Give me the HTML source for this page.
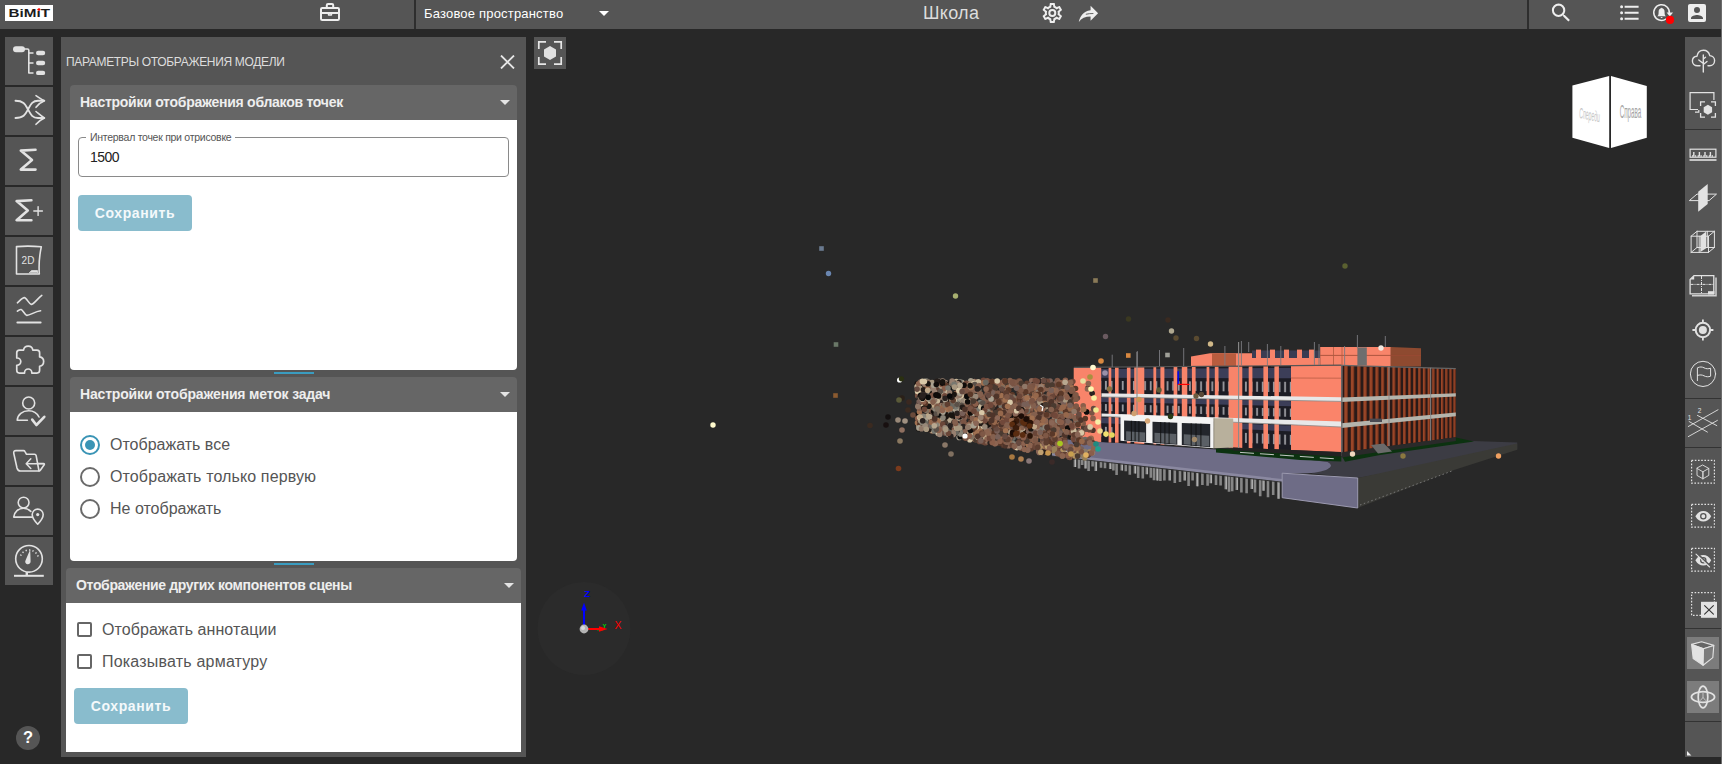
<!DOCTYPE html>
<html lang="ru">
<head>
<meta charset="utf-8">
<title>Школа</title>
<style>
*{box-sizing:border-box;margin:0;padding:0}
html,body{width:1722px;height:764px;overflow:hidden;background:#282828;font-family:"Liberation Sans",sans-serif;}
body{position:relative}
.abs{position:absolute}
#topbar{position:absolute;left:0;top:0;width:1722px;height:29px;background:#555}
.vdiv{position:absolute;top:0;width:2px;height:29px;background:#2e2e2e}
.lbtn{position:absolute;left:5px;width:48px;height:48px;background:#555}
.lbtn svg{position:absolute;left:0;top:0;width:48px;height:48px}
#panel{position:absolute;left:61px;top:37px;width:465px;height:720px;background:#555}
.shead{position:absolute;height:35px;background:#666;border-radius:4px 4px 0 0;color:#eee;font-weight:bold;font-size:14px;line-height:35px;white-space:nowrap}
.sbody{position:absolute;background:#fff;border-radius:0 0 4px 4px}
.bar{position:absolute;left:274px;width:40px;height:2px;background:#3a9cc0}
.btn{position:absolute;width:114px;height:36px;border-radius:4px;background:#89bccd;color:#f4f9fb;font-size:14px;font-weight:bold;letter-spacing:0.6px;line-height:36px;text-align:center;white-space:nowrap}
.tri{position:absolute;width:0;height:0;border-left:5px solid transparent;border-right:5px solid transparent;border-top:5px solid #e4e4e4}
.opt{position:absolute;font-size:16px;color:#555;white-space:nowrap;line-height:20px}
.radio{position:absolute;width:20px;height:20px;border-radius:50%;border:2px solid #6a6a6a;background:#fff}
.cb{position:absolute;width:15px;height:15px;border-radius:2px;border:2px solid #666;background:#fff}
#rtool{position:absolute;left:1685px;top:37px;width:36px;height:720px;background:#555}
</style>
</head>
<body>
<!-- TOP BAR -->
<div id="topbar">
  <div class="abs" style="left:5px;top:5px;width:48px;height:16px;background:#fff"></div>
  <svg class="abs" style="left:5px;top:5px" width="48" height="16" viewBox="0 0 48 16"><text x="3.6" y="12.3" font-family="Liberation Sans, sans-serif" font-size="11.8" font-weight="bold" fill="#1c1c1c" textLength="41.5" lengthAdjust="spacingAndGlyphs">BiMiT</text><circle cx="34" cy="4.5" r="1.35" fill="#f00"/></svg>
  <div class="vdiv" style="left:414px"></div>
  <div class="abs" id="space" style="left:424px;top:6px;font-size:13px;letter-spacing:0.19px;color:#fff;line-height:16px;white-space:nowrap">Базовое пространство</div>
  <div class="tri" style="left:599px;top:11px;border-top-color:#fff"></div>
  <div class="abs" id="proj" style="left:923px;top:2px;font-size:18px;letter-spacing:0.3px;color:#ddd;line-height:22px">Школа</div>
  <div class="vdiv" style="left:1527px"></div>
</div>

<!-- LEFT SIDEBAR -->
<div class="lbtn" style="top:37px"></div>
<div class="lbtn" style="top:87px"></div>
<div class="lbtn" style="top:137px"></div>
<div class="lbtn" style="top:187px"></div>
<div class="lbtn" style="top:237px"></div>
<div class="lbtn" style="top:287px"></div>
<div class="lbtn" style="top:337px"></div>
<div class="lbtn" style="top:387px"></div>
<div class="lbtn" style="top:437px"></div>
<div class="lbtn" style="top:487px"></div>
<div class="lbtn" style="top:537px"></div>
<div class="abs" style="left:16px;top:726px;width:24px;height:24px;border-radius:50%;background:#555;color:#fff;font-weight:bold;font-size:16.5px;line-height:23px;text-align:center">?</div>
<div class="abs" style="left:1721px;top:0;width:1px;height:764px;background:#6c6c6c"></div>

<!-- PANEL -->
<div id="panel"></div>
<div class="abs" id="ptitle" style="left:66px;top:54px;font-size:12px;letter-spacing:-0.33px;color:#ddd;line-height:16px;white-space:nowrap">ПАРАМЕТРЫ ОТОБРАЖЕНИЯ МОДЕЛИ</div>
<svg class="abs" style="left:500px;top:55px" width="15" height="14" viewBox="0 0 15 14"><path d="M1 0.5L14 13.5M14 0.5L1 13.5" stroke="#e6e6e6" stroke-width="1.8" fill="none"/></svg>

<div class="shead" style="left:70px;top:85px;width:447px;padding-left:10px;letter-spacing:-0.26px">Настройки отображения облаков точек</div>
<div class="tri" style="left:500px;top:100px"></div>
<div class="sbody" style="left:70px;top:120px;width:447px;height:249.5px"></div>
<div class="abs" style="left:78px;top:137px;width:431px;height:40px;border:1px solid #8a8a8a;border-radius:4px"></div>
<div class="abs" id="lbl" style="left:86px;top:129.5px;padding:0 4px;background:#fff;font-size:10.5px;letter-spacing:-0.27px;color:#555;line-height:14px;white-space:nowrap">Интервал точек при отрисовке</div>
<div class="abs" style="left:90px;top:147.5px;font-size:14px;color:#222;line-height:18px;letter-spacing:-0.5px">1500</div>
<div class="btn" style="left:78px;top:195px">Сохранить</div>
<div class="bar" style="top:372px"></div>

<div class="shead" style="left:70px;top:377px;width:447px;padding-left:10px;letter-spacing:-0.17px">Настройки отображения меток задач</div>
<div class="tri" style="left:500px;top:392px"></div>
<div class="sbody" style="left:70px;top:412px;width:447px;height:148.5px"></div>
<div class="radio" style="left:80px;top:435px;border-color:#3a94b5"></div>
<div class="abs" style="left:85px;top:440px;width:10px;height:10px;border-radius:50%;background:#3a94b5"></div>
<div class="opt" style="left:110px;top:435px">Отображать все</div>
<div class="radio" style="left:80px;top:467px"></div>
<div class="opt" style="left:110px;top:467px;letter-spacing:0.12px">Отображать только первую</div>
<div class="radio" style="left:80px;top:499px"></div>
<div class="opt" style="left:110px;top:499px">Не отображать</div>
<div class="bar" style="top:563px"></div>

<div class="shead" style="left:66px;top:568px;width:455px;padding-left:10px;letter-spacing:-0.34px">Отображение других компонентов сцены</div>
<div class="tri" style="left:504px;top:583px"></div>
<div class="sbody" style="left:66px;top:603px;width:455px;height:149px;border-radius:0"></div>
<div class="cb" style="left:76.5px;top:622px"></div>
<div class="opt" style="left:102px;top:620px;letter-spacing:0.07px">Отображать аннотации</div>
<div class="cb" style="left:76.5px;top:654px"></div>
<div class="opt" style="left:102px;top:652px;letter-spacing:0.2px">Показывать арматуру</div>
<div class="btn" style="left:74px;top:688px">Сохранить</div>

<!-- VIEWER -->
<div class="abs" style="left:534px;top:37px;width:32px;height:32px;background:#555"></div>
<!--SCENE_START--><svg id="scene" class="abs" style="left:0;top:0" width="1722" height="764" viewBox="0 0 1722 764">
<circle cx="584" cy="628.5" r="46.5" fill="#2b2b2b"/>
<path d="M584 625V609" stroke="#0000ff" stroke-width="2"/><path d="M584 602.5L586.8 610.5H581.2Z" fill="#0000ff"/>
<path d="M597 629.5H603" stroke="#00dd00" stroke-width="1.6"/>
<path d="M588 629H600" stroke="#ff0000" stroke-width="2"/><path d="M607.5 629L599 626.2V631.8Z" fill="#ff0000"/>
<circle cx="584" cy="629" r="4.4" fill="#b4b4b4"/><circle cx="583" cy="628" r="2" fill="#d8d8d8"/>
<text x="584.2" y="597" font-family="Liberation Sans, sans-serif" font-weight="bold" font-size="9.5" fill="#0000ff">Z</text>
<text x="614.6" y="629" font-family="Liberation Sans, sans-serif" font-size="10.5" fill="#ff0000">X</text>
<text x="602.5" y="628" font-family="Liberation Sans, sans-serif" font-weight="bold" font-size="6" fill="#00dd00">Y</text>
<path d="M1572.4 85.5L1609.2 76V148L1572.4 137.8Z" fill="#fff"/>
<path d="M1611 76L1646.8 85.9V137.8L1611 148Z" fill="#fff"/>
<text transform="translate(1579.3,118) scale(0.34,1) skewY(4)" font-family="Liberation Sans, sans-serif" font-size="15" fill="#c4c4c4" font-style="italic">Спереди</text>
<text transform="translate(1619.7,118) scale(0.33,1)" font-family="Liberation Sans, sans-serif" font-size="19" fill="#a4a4a4">Справа</text>
<path d="M1216 449L1341 455L1472 441L1517.2 442.6V449.6L1357.7 478L1311 473.4L1330 468L1328 462Z" fill="#3c3c44"/>
<path d="M1357.7 478L1517.2 443.6V449.8L1454 470L1357.7 508Z" fill="#3a3a36"/>
<path d="M1360 505L1452 471" stroke="#777" stroke-width="1" stroke-dasharray="1.5 2.5"/>
<path d="M1075.0 456.0V467.0M1079.0 456.5V468.6M1082.2 456.8V465.0M1085.4 457.2V468.5M1088.6 457.6V470.9M1092.6 458.1V466.5M1095.8 458.4V470.9M1101.0 459.0V467.7M1105.0 459.5V468.2M1110.2 460.1V469.0M1113.4 460.5V470.4M1116.6 460.9V474.9M1121.8 461.5V470.6M1125.8 461.9V471.2M1129.8 462.4V474.8M1135.0 463.0V473.5M1138.2 463.4V477.9M1142.8 463.9V478.6M1146.8 464.4V474.2M1150.8 464.9V477.7M1154.0 465.2V480.2M1157.2 465.6V480.6M1160.4 466.0V481.1M1164.4 466.5V480.6M1169.6 467.1V480.4M1174.8 467.7V483.1M1180.0 468.3V481.9M1184.6 468.8V480.5M1188.6 469.3V486.1M1192.6 469.8V480.6M1197.2 470.3V486.3M1202.4 470.9V485.0M1207.6 471.5V485.8M1210.8 471.9V483.2M1216.0 472.5V484.9M1220.6 473.0V485.6M1225.8 473.7V489.3M1229.0 474.0V491.8M1232.2 474.4V491.2M1236.8 474.9V489.9M1241.4 475.5V492.5M1246.6 476.1V493.3M1251.8 476.7V489.0M1255.0 477.1V492.5M1260.2 477.7V496.2M1263.4 478.1V490.7M1268.0 478.6V497.3M1273.2 479.2V495.0M1278.4 479.8V498.8" stroke="#868686" stroke-width="2.6" fill="none"/>
<path d="M1075.0 456.0V467.0M1085.4 457.2V468.5M1095.8 458.4V470.9M1110.2 460.1V469.0M1121.8 461.5V470.6M1135.0 463.0V473.5M1146.8 464.4V474.2M1157.2 465.6V480.6M1169.6 467.1V480.4M1184.6 468.8V480.5M1197.2 470.3V486.3M1210.8 471.9V483.2M1225.8 473.7V489.3M1236.8 474.9V489.9M1251.8 476.7V489.0M1263.4 478.1V490.7M1278.4 479.8V498.8" stroke="#c4c4c4" stroke-width="0.8" fill="none" transform="translate(0.5,0)"/>
<path d="M1052 438.4L1216 449.5L1283 456.5L1327.6 462Q1335 466 1326 470Q1316 473.6 1300 473.6L1282.2 473.6V481.6L1052 455.6Z" fill="#6e6c86"/>
<path d="M1052 453.1L1282.2 479V481.8L1052 455.7Z" fill="#8a88a0"/>
<path d="M1052 456.1L1282.2 482.2" stroke="#333" stroke-width="1"/>
<path d="M1282.2 473.2L1357.7 478V508L1282.2 497.7Z" fill="#6e6c86" stroke="#9c9ab0" stroke-width="1"/>
<path d="M1216 448.5L1341.3 455V461.5L1300 460L1216 452.5Z" fill="#0c3210"/>
<path d="M1341.3 455L1456 437.6L1474 441.6L1380 455L1345 461.8Z" fill="#0c3210"/>
<path d="M1240 452.4L1338 459" stroke="#d8d8d8" stroke-width="0.9" stroke-dasharray="14 6"/>
<path d="M1191 356.4L1210 353.2H1320V366H1191Z" fill="#f8846a"/>
<path d="M1252 350.4H1320V358H1252Z" fill="#3a3c52"/>
<rect x="1256.0" y="349.6" width="5" height="9" fill="#f8846a"/>
<rect x="1270.0" y="349.6" width="5" height="9" fill="#f8846a"/>
<rect x="1284.0" y="349.6" width="5" height="9" fill="#f8846a"/>
<rect x="1297.0" y="349.6" width="5" height="9" fill="#f8846a"/>
<rect x="1309.0" y="349.6" width="5" height="9" fill="#f8846a"/>
<path d="M1212 353.4H1236V366H1212Z" fill="#b85c3e"/>
<path d="M1320.2 346.9H1390.8V366H1320.2Z" fill="#f8846a"/>
<path d="M1390.8 346.9L1421 348.3V366.4H1390.8Z" fill="#8e4a30"/>
<path d="M1320.2 355.4H1421" stroke="#9a4a34" stroke-width="0.8"/>
<rect x="1357.4" y="347.4" width="9.4" height="18" fill="#6e6e6e"/>
<path d="M1333.5 347V365M1342 347V365" stroke="#b05a40" stroke-width="0.8"/>
<path d="M1074.0 367.8L1341.3 365.6L1341.3 452.0L1074.0 441.0Z" fill="#1c1c24"/>
<path d="M1074.0 369.3L1341.3 367.5L1341.3 378.3L1074.0 377.8Z" fill="#3c3e58"/>
<path d="M1074.0 397.0L1341.3 402.2L1341.3 407.5L1074.0 401.2Z" fill="#3c3e58"/>
<path d="M1074.0 416.2L1341.3 428.0L1341.3 433.5L1074.0 421.9Z" fill="#3c3e58"/>
<path d="M1074.0 380.8L1341.3 382.1L1341.3 392.9L1074.0 389.3Z" fill="url(#wf)"/>
<path d="M1074.0 403.2L1341.3 409.9L1341.3 418.4L1074.0 409.9Z" fill="url(#wf)"/>
<path d="M1074.0 425.5L1341.3 437.0L1341.3 447.0L1074.0 435.8Z" fill="url(#wf)"/>
<path d="M1073.7 367.8L1101.2 367.6L1101.2 442.1L1073.7 441.0Z" fill="#f8846a"/>
<path d="M1108.6 367.5L1111.3 367.5L1111.3 442.5L1108.6 442.4Z" fill="#f8846a"/>
<path d="M1115.0 367.5L1118.6 367.4L1118.6 442.8L1115.0 442.7Z" fill="#f8846a"/>
<path d="M1126.9 367.4L1130.5 367.3L1130.5 443.3L1126.9 443.2Z" fill="#f8846a"/>
<path d="M1134.2 367.3L1144.3 367.2L1144.3 443.9L1134.2 443.5Z" fill="#f8846a"/>
<path d="M1153.4 367.1L1156.2 367.1L1156.2 444.4L1153.4 444.3Z" fill="#f8846a"/>
<path d="M1160.4 367.1L1164.4 367.1L1164.4 444.7L1160.4 444.6Z" fill="#f8846a"/>
<path d="M1173.6 367.0L1177.3 367.0L1177.3 445.2L1173.6 445.1Z" fill="#f8846a"/>
<path d="M1181.8 366.9L1187.3 366.9L1187.3 445.7L1181.8 445.4Z" fill="#f8846a"/>
<path d="M1191.9 366.8L1195.6 366.8L1195.6 446.0L1191.9 445.9Z" fill="#f8846a"/>
<path d="M1206.6 366.7L1209.3 366.7L1209.3 446.6L1206.6 446.5Z" fill="#f8846a"/>
<path d="M1214.8 366.6L1218.5 366.6L1218.5 446.9L1214.8 446.8Z" fill="#f8846a"/>
<path d="M1228.6 366.5L1242.3 366.4L1242.3 447.9L1228.6 447.4Z" fill="#f8846a"/>
<path d="M1248.7 366.4L1252.4 366.3L1252.4 448.3L1248.7 448.2Z" fill="#f8846a"/>
<path d="M1263.4 366.2L1268.0 366.2L1268.0 449.0L1263.4 448.8Z" fill="#f8846a"/>
<path d="M1274.4 366.2L1278.9 366.1L1278.9 449.4L1274.4 449.2Z" fill="#f8846a"/>
<path d="M1291.0 366.0L1341.3 365.6L1341.3 452.0L1291.0 449.9Z" fill="#fa846a"/>
<path d="M1291 378.0L1341.3 378.2" stroke="#b85c44" stroke-width="0.8"/>
<path d="M1101.5 393.3L1341.3 397.3L1341.3 401.4L1101.5 396.9Z" fill="#e8e8e8"/>
<path d="M1101.5 413.4L1341.3 421.6L1341.3 427.0L1101.5 416.4Z" fill="#e8e8e8"/>
<path d="M1101.5 396.9L1341.3 401.4" stroke="#888" stroke-width="0.8"/>
<path d="M1101.5 416.4L1341.3 427.0" stroke="#888" stroke-width="0.8"/>
<path d="M1074.0 367.4L1341.3 365.2" stroke="#555" stroke-width="1.2"/>
<path d="M1233 447.4L1341.3 452.2V456.6L1233 450.6Z" fill="#222"/>
<path d="M1137 352V440M1238.6 342V448" stroke="#8a8a8a" stroke-width="1.1"/>
<path d="M1120.5 414.6L1213.9 418.3V448.2L1120.5 440.8Z" fill="#f4f4f4"/>
<path d="M1124.1 420.5L1146.1 421.4L1146.1 442.3L1124.1 440.6Z" fill="#23262c"/>
<path d="M1126.1 431.2L1145.1 432.4L1145.1 441.6L1126.1 439.9Z" fill="#8a9098" opacity="0.55"/>
<path d="M1131.4 420.8V441.2" stroke="#111" stroke-width="0.9"/>
<path d="M1135.1 421.0V441.4" stroke="#111" stroke-width="0.9"/>
<path d="M1138.9 421.1V441.7" stroke="#111" stroke-width="0.9"/>
<path d="M1152.5 421.7L1177.3 422.7L1177.3 444.7L1152.5 442.8Z" fill="#23262c"/>
<path d="M1154.5 432.7L1176.3 434.0L1176.3 444.0L1154.5 442.1Z" fill="#8a9098" opacity="0.55"/>
<path d="M1160.7 422.0V443.4" stroke="#111" stroke-width="0.9"/>
<path d="M1164.9 422.2V443.8" stroke="#111" stroke-width="0.9"/>
<path d="M1169.1 422.4V444.1" stroke="#111" stroke-width="0.9"/>
<path d="M1181.8 422.9L1210.2 424.1L1210.2 447.3L1181.8 445.1Z" fill="#23262c"/>
<path d="M1183.8 434.3L1209.2 435.8L1209.2 446.5L1183.8 444.3Z" fill="#8a9098" opacity="0.55"/>
<path d="M1191.2 423.3V445.8" stroke="#111" stroke-width="0.9"/>
<path d="M1196.0 423.5V446.2" stroke="#111" stroke-width="0.9"/>
<path d="M1200.9 423.7V446.6" stroke="#111" stroke-width="0.9"/>
<path d="M1213.9 418.2L1233.2 418.6V447.6L1213.9 448.2Z" fill="#b8b09c"/>
<path d="M1213.9 418.2V448.2" stroke="#8a8474" stroke-width="0.8"/>
<path d="M1341.3 365.6L1455.8 368.8L1455.8 437.2L1341.3 452.5Z" fill="#2a1a18"/>
<path d="M1344.3 365.7L1347.7 365.8L1347.7 451.6L1344.3 452.1Z" fill="#9a4628"/>
<path d="M1347.4 365.8V451.6" stroke="#6a2c18" stroke-width="0.7"/>
<path d="M1350.8 365.9L1354.1 366.0L1354.1 450.8L1350.8 451.2Z" fill="#9a4628"/>
<path d="M1353.8 366.0V450.8" stroke="#6a2c18" stroke-width="0.7"/>
<path d="M1357.2 366.0L1360.4 366.1L1360.4 449.9L1357.2 450.4Z" fill="#9a4628"/>
<path d="M1360.1 366.1V449.9" stroke="#6a2c18" stroke-width="0.7"/>
<path d="M1363.4 366.2L1366.6 366.3L1366.6 449.1L1363.4 449.5Z" fill="#9a4628"/>
<path d="M1366.3 366.3V449.1" stroke="#6a2c18" stroke-width="0.7"/>
<path d="M1369.5 366.4L1372.6 366.5L1372.6 448.3L1369.5 448.7Z" fill="#9a4628"/>
<path d="M1372.3 366.5V448.3" stroke="#6a2c18" stroke-width="0.7"/>
<path d="M1375.4 366.6L1378.4 366.6L1378.4 447.5L1375.4 447.9Z" fill="#9a4628"/>
<path d="M1378.1 366.6V447.5" stroke="#6a2c18" stroke-width="0.7"/>
<path d="M1381.2 366.7L1384.1 366.8L1384.1 446.8L1381.2 447.2Z" fill="#9a4628"/>
<path d="M1383.8 366.8V446.8" stroke="#6a2c18" stroke-width="0.7"/>
<path d="M1386.9 366.9L1389.7 367.0L1389.7 446.0L1386.9 446.4Z" fill="#9a4628"/>
<path d="M1389.4 367.0V446.0" stroke="#6a2c18" stroke-width="0.7"/>
<path d="M1392.4 367.0L1395.2 367.1L1395.2 445.3L1392.4 445.7Z" fill="#9a4628"/>
<path d="M1394.9 367.1V445.3" stroke="#6a2c18" stroke-width="0.7"/>
<path d="M1397.8 367.2L1400.5 367.3L1400.5 444.6L1397.8 444.9Z" fill="#9a4628"/>
<path d="M1400.2 367.3V444.6" stroke="#6a2c18" stroke-width="0.7"/>
<path d="M1403.1 367.3L1405.7 367.4L1405.7 443.9L1403.1 444.2Z" fill="#9a4628"/>
<path d="M1405.4 367.4V443.9" stroke="#6a2c18" stroke-width="0.7"/>
<path d="M1408.2 367.5L1410.8 367.5L1410.8 443.2L1408.2 443.6Z" fill="#9a4628"/>
<path d="M1410.5 367.5V443.2" stroke="#6a2c18" stroke-width="0.7"/>
<path d="M1413.2 367.6L1415.8 367.7L1415.8 442.5L1413.2 442.9Z" fill="#9a4628"/>
<path d="M1415.5 367.7V442.5" stroke="#6a2c18" stroke-width="0.7"/>
<path d="M1418.2 367.7L1420.6 367.8L1420.6 441.9L1418.2 442.2Z" fill="#9a4628"/>
<path d="M1420.3 367.8V441.9" stroke="#6a2c18" stroke-width="0.7"/>
<path d="M1422.9 367.9L1425.3 367.9L1425.3 441.3L1422.9 441.6Z" fill="#9a4628"/>
<path d="M1425.0 367.9V441.3" stroke="#6a2c18" stroke-width="0.7"/>
<path d="M1427.6 368.0L1430.0 368.1L1430.0 440.7L1427.6 441.0Z" fill="#9a4628"/>
<path d="M1429.7 368.1V440.7" stroke="#6a2c18" stroke-width="0.7"/>
<path d="M1432.2 368.1L1434.5 368.2L1434.5 440.1L1432.2 440.4Z" fill="#9a4628"/>
<path d="M1434.2 368.2V440.1" stroke="#6a2c18" stroke-width="0.7"/>
<path d="M1436.6 368.3L1438.9 368.3L1438.9 439.5L1436.6 439.8Z" fill="#9a4628"/>
<path d="M1438.6 368.3V439.5" stroke="#6a2c18" stroke-width="0.7"/>
<path d="M1441.0 368.4L1443.2 368.4L1443.2 438.9L1441.0 439.2Z" fill="#9a4628"/>
<path d="M1442.9 368.4V438.9" stroke="#6a2c18" stroke-width="0.7"/>
<path d="M1445.2 368.5L1447.4 368.6L1447.4 438.3L1445.2 438.6Z" fill="#9a4628"/>
<path d="M1447.1 368.6V438.3" stroke="#6a2c18" stroke-width="0.7"/>
<path d="M1449.4 368.6L1451.5 368.7L1451.5 437.8L1449.4 438.1Z" fill="#9a4628"/>
<path d="M1451.2 368.7V437.8" stroke="#6a2c18" stroke-width="0.7"/>
<path d="M1453.4 368.7L1455.5 368.8L1455.5 437.2L1453.4 437.5Z" fill="#9a4628"/>
<path d="M1455.2 368.8V437.2" stroke="#6a2c18" stroke-width="0.7"/>
<path d="M1341.3 397.6L1455.8 393.2L1455.8 396.6L1341.3 402.0Z" fill="#b4b4ac"/>
<path d="M1341.3 423.2L1455.8 412.4L1455.8 416.2L1341.3 428.0Z" fill="#b4b4ac"/>
<path d="M1341.3 365.4L1455.8 368.6" stroke="#666" stroke-width="1.2"/>
<path d="M1341.9 365.6V456" stroke="#777" stroke-width="1.3"/>
<path d="M1389 366.6V447M1430.7 367.8V441" stroke="#8a8a8a" stroke-width="1"/>
<path d="M1341.3 452.5L1455.8 437.2V441L1341.3 457.4Z" fill="#2a2a2a"/>
<path d="M1371 445L1384 443.6L1392 451.6L1378 453.6Z" fill="#6a6a6a"/>
<rect x="1370" y="418.6" width="12" height="3.4" fill="#4a4a52"/>
<path d="M1112.2 354.7V367.0M1137.3 351.0V367.0M1159.5 350.0V366.0M1183.7 348.0V366.0M1224.9 346.0V365.0M1241.4 341.0V365.0M1248.7 342.0V352.0M1267.4 344.0V365.0M1280.8 346.0V365.0M1314.4 342.0V365.0M1319.0 344.0V365.0M1357.4 335.0V348.0M1385.3 336.0V347.0M1344.6 346.0V365.0" stroke="#7a7a80" stroke-width="0.9"/>
<path d="M1178.2 371.2V384.4" stroke="#0000ff" stroke-width="1.4"/><path d="M1178.2 384.4H1189.4" stroke="#ff0000" stroke-width="1.2"/>
<rect x="1011" y="415" width="21" height="23" fill="#2a1408"/>
<g>
<circle cx="1018.4" cy="436.1" r="2.8" fill="#786058"/>
<circle cx="926.7" cy="426.9" r="2.8" fill="#241c18"/>
<circle cx="929.9" cy="429.2" r="2.8" fill="#664a40"/>
<circle cx="1060.7" cy="428.2" r="2.8" fill="#96684c"/>
<circle cx="945.4" cy="403.9" r="2.8" fill="#0a0a0a"/>
<circle cx="931.1" cy="396.7" r="2.8" fill="#b8a890"/>
<circle cx="966.9" cy="399.9" r="2.8" fill="#7e5846"/>
<circle cx="938.2" cy="433.5" r="2.8" fill="#b8a890"/>
<circle cx="1054.2" cy="430.0" r="2.8" fill="#2a2220"/>
<circle cx="999.2" cy="412.1" r="2.8" fill="#4a3a30"/>
<circle cx="974.4" cy="430.8" r="2.8" fill="#6a4638"/>
<circle cx="988.2" cy="416.2" r="2.8" fill="#96684c"/>
<circle cx="974.3" cy="417.4" r="2.8" fill="#664a40"/>
<circle cx="931.3" cy="385.7" r="2.8" fill="#807060"/>
<circle cx="1008.7" cy="424.4" r="2.8" fill="#8c6450"/>
<circle cx="1062.1" cy="416.4" r="2.8" fill="#7e5846"/>
<circle cx="958.8" cy="388.4" r="2.8" fill="#7a5444"/>
<circle cx="1051.3" cy="391.4" r="2.8" fill="#4a3a30"/>
<circle cx="930.0" cy="390.3" r="2.8" fill="#4e342a"/>
<circle cx="970.8" cy="401.5" r="2.8" fill="#a07050"/>
<circle cx="996.9" cy="437.2" r="2.8" fill="#8c6450"/>
<circle cx="1055.9" cy="422.9" r="2.8" fill="#6a4638"/>
<circle cx="989.6" cy="419.7" r="2.8" fill="#8c6450"/>
<circle cx="953.2" cy="415.7" r="2.8" fill="#7a5444"/>
<circle cx="965.6" cy="395.8" r="2.8" fill="#988878"/>
<circle cx="1048.5" cy="403.9" r="2.8" fill="#4a3a30"/>
<circle cx="1056.2" cy="433.6" r="2.8" fill="#8a6656"/>
<circle cx="971.3" cy="395.4" r="2.8" fill="#5e3e30"/>
<circle cx="1069.7" cy="429.9" r="2.8" fill="#8a5e4a"/>
<circle cx="974.2" cy="411.2" r="2.8" fill="#786058"/>
<circle cx="998.5" cy="443.0" r="2.8" fill="#5e3e30"/>
<circle cx="996.5" cy="435.1" r="2.8" fill="#84604e"/>
<circle cx="1021.1" cy="447.9" r="2.8" fill="#8a5e4a"/>
<circle cx="1063.5" cy="449.6" r="2.8" fill="#84604e"/>
<circle cx="1049.7" cy="386.7" r="2.8" fill="#786058"/>
<circle cx="998.7" cy="393.1" r="2.8" fill="#907868"/>
<circle cx="1023.0" cy="428.3" r="2.8" fill="#b8a890"/>
<circle cx="978.6" cy="390.2" r="2.8" fill="#a89880"/>
<circle cx="933.2" cy="426.4" r="2.8" fill="#d8c8a8"/>
<circle cx="1033.8" cy="381.4" r="2.8" fill="#786058"/>
<circle cx="944.7" cy="400.1" r="2.8" fill="#181410"/>
<circle cx="1044.7" cy="447.7" r="2.8" fill="#8c6450"/>
<circle cx="1061.1" cy="426.8" r="2.8" fill="#84604e"/>
<circle cx="1046.6" cy="397.0" r="2.8" fill="#5a5048"/>
<circle cx="987.9" cy="437.3" r="2.8" fill="#241c18"/>
<circle cx="1061.2" cy="391.4" r="2.8" fill="#a07050"/>
<circle cx="954.7" cy="432.3" r="2.8" fill="#786058"/>
<circle cx="1038.7" cy="451.1" r="2.8" fill="#84604e"/>
<circle cx="1006.9" cy="408.7" r="2.8" fill="#5a5048"/>
<circle cx="1026.2" cy="425.2" r="2.8" fill="#b8a890"/>
<circle cx="924.3" cy="423.0" r="2.8" fill="#807060"/>
<circle cx="1007.8" cy="420.0" r="2.8" fill="#8c6450"/>
<circle cx="1067.8" cy="431.9" r="2.8" fill="#786058"/>
<circle cx="1086.1" cy="429.2" r="2.8" fill="#786058"/>
<circle cx="1031.7" cy="380.8" r="2.8" fill="#8a6656"/>
<circle cx="924.6" cy="390.2" r="2.8" fill="#786058"/>
<circle cx="964.9" cy="412.1" r="2.8" fill="#d8c8a8"/>
<circle cx="982.4" cy="397.0" r="2.8" fill="#84604e"/>
<circle cx="1065.1" cy="381.6" r="2.8" fill="#96684c"/>
<circle cx="1071.1" cy="416.0" r="2.8" fill="#8a5e4a"/>
<circle cx="962.1" cy="435.7" r="2.8" fill="#7a5444"/>
<circle cx="1002.2" cy="391.3" r="2.8" fill="#84604e"/>
<circle cx="1037.2" cy="414.9" r="2.8" fill="#7e5846"/>
<circle cx="1071.1" cy="446.9" r="2.8" fill="#7a5444"/>
<circle cx="1039.2" cy="452.4" r="2.8" fill="#8a6656"/>
<circle cx="940.3" cy="380.8" r="2.8" fill="#787870"/>
<circle cx="982.4" cy="433.0" r="2.8" fill="#4e342a"/>
<circle cx="952.8" cy="428.8" r="2.8" fill="#d8c8a8"/>
<circle cx="976.9" cy="384.1" r="2.8" fill="#807060"/>
<circle cx="1068.8" cy="407.2" r="2.8" fill="#70483a"/>
<circle cx="1037.9" cy="383.3" r="2.8" fill="#4e342a"/>
<circle cx="1055.7" cy="404.5" r="2.8" fill="#8a5e4a"/>
<circle cx="951.9" cy="419.5" r="2.8" fill="#988070"/>
<circle cx="1078.0" cy="430.3" r="2.8" fill="#4a3a30"/>
<circle cx="1064.7" cy="435.0" r="2.8" fill="#5e3e30"/>
<circle cx="1054.6" cy="418.6" r="2.8" fill="#907868"/>
<circle cx="1002.7" cy="382.4" r="2.8" fill="#8a5e4a"/>
<circle cx="931.9" cy="418.3" r="2.8" fill="#7e5846"/>
<circle cx="1069.9" cy="430.6" r="2.8" fill="#6a4638"/>
<circle cx="1066.8" cy="382.5" r="2.8" fill="#4e342a"/>
<circle cx="1003.5" cy="423.7" r="2.8" fill="#8c6450"/>
<circle cx="955.0" cy="428.2" r="2.8" fill="#8a6656"/>
<circle cx="990.7" cy="382.4" r="2.8" fill="#5a3828"/>
<circle cx="995.3" cy="402.2" r="2.8" fill="#664a40"/>
<circle cx="978.8" cy="407.9" r="2.8" fill="#c8b89a"/>
<circle cx="985.2" cy="442.8" r="2.8" fill="#6a4638"/>
<circle cx="1083.2" cy="409.7" r="2.8" fill="#96684c"/>
<circle cx="1076.6" cy="409.7" r="2.8" fill="#8a5e4a"/>
<circle cx="942.0" cy="391.5" r="2.8" fill="#d8c8a8"/>
<circle cx="1010.5" cy="437.0" r="2.8" fill="#b8a890"/>
<circle cx="998.6" cy="438.1" r="2.8" fill="#5e3e30"/>
<circle cx="970.7" cy="390.0" r="2.8" fill="#a89880"/>
<circle cx="1072.6" cy="389.1" r="2.8" fill="#786058"/>
<circle cx="1039.9" cy="403.7" r="2.8" fill="#8c6450"/>
<circle cx="1081.3" cy="433.9" r="2.8" fill="#8c6450"/>
<circle cx="1004.4" cy="427.9" r="2.8" fill="#7e5846"/>
<circle cx="919.1" cy="425.5" r="2.8" fill="#c0a888"/>
<circle cx="940.5" cy="427.1" r="2.8" fill="#84604e"/>
<circle cx="1027.1" cy="425.8" r="2.8" fill="#8c6450"/>
<circle cx="1060.3" cy="428.4" r="2.8" fill="#70483a"/>
<circle cx="1092.9" cy="430.3" r="2.8" fill="#4e342a"/>
<circle cx="976.8" cy="408.3" r="2.8" fill="#786058"/>
<circle cx="1037.5" cy="415.8" r="2.8" fill="#4a3a30"/>
<circle cx="1057.1" cy="435.2" r="2.8" fill="#8a6656"/>
<circle cx="1068.8" cy="397.6" r="2.8" fill="#6a4638"/>
<circle cx="1016.5" cy="398.9" r="2.8" fill="#84604e"/>
<circle cx="969.2" cy="392.9" r="2.8" fill="#84604e"/>
<circle cx="964.6" cy="403.2" r="2.8" fill="#70483a"/>
<circle cx="1001.4" cy="431.2" r="2.8" fill="#7e5846"/>
<circle cx="965.2" cy="436.7" r="2.8" fill="#7e5846"/>
<circle cx="1083.7" cy="427.6" r="2.8" fill="#4a3a30"/>
<circle cx="1060.7" cy="424.6" r="2.8" fill="#8a5e4a"/>
<circle cx="1033.8" cy="384.3" r="2.8" fill="#181410"/>
<circle cx="1070.9" cy="436.8" r="2.8" fill="#181410"/>
<circle cx="943.7" cy="391.6" r="2.8" fill="#664a40"/>
<circle cx="1012.3" cy="395.9" r="2.8" fill="#70483a"/>
<circle cx="918.9" cy="415.1" r="2.8" fill="#907868"/>
<circle cx="978.8" cy="434.3" r="2.8" fill="#a89880"/>
<circle cx="961.0" cy="385.2" r="2.8" fill="#a89880"/>
<circle cx="1080.5" cy="431.6" r="2.8" fill="#988878"/>
<circle cx="985.9" cy="402.7" r="2.8" fill="#4a3a30"/>
<circle cx="934.0" cy="414.3" r="2.8" fill="#7e5846"/>
<circle cx="970.8" cy="417.6" r="2.8" fill="#0a0a0a"/>
<circle cx="1092.4" cy="452.7" r="2.8" fill="#988878"/>
<circle cx="925.3" cy="389.7" r="2.8" fill="#100c0a"/>
<circle cx="1056.9" cy="415.9" r="2.8" fill="#4a3a30"/>
<circle cx="925.6" cy="419.7" r="2.8" fill="#8a6656"/>
<circle cx="1027.0" cy="383.3" r="2.8" fill="#5e3e30"/>
<circle cx="926.1" cy="427.8" r="2.8" fill="#0a0a0a"/>
<circle cx="1059.9" cy="446.4" r="2.8" fill="#84604e"/>
<circle cx="922.3" cy="408.2" r="2.8" fill="#6a6860"/>
<circle cx="1091.3" cy="439.9" r="2.8" fill="#84604e"/>
<circle cx="939.5" cy="403.4" r="2.8" fill="#8a6656"/>
<circle cx="932.9" cy="394.9" r="2.8" fill="#988878"/>
<circle cx="943.4" cy="412.7" r="2.8" fill="#4e342a"/>
<circle cx="1069.0" cy="406.5" r="2.8" fill="#664a40"/>
<circle cx="920.4" cy="427.5" r="2.8" fill="#988878"/>
<circle cx="1067.7" cy="413.1" r="2.8" fill="#8a5e4a"/>
<circle cx="920.2" cy="418.8" r="2.8" fill="#0a0a0a"/>
<circle cx="1033.2" cy="419.1" r="2.8" fill="#5a3828"/>
<circle cx="1033.8" cy="402.2" r="2.8" fill="#5a3828"/>
<circle cx="968.5" cy="401.0" r="2.8" fill="#8a6656"/>
<circle cx="964.4" cy="430.0" r="2.8" fill="#8a8478"/>
<circle cx="1015.2" cy="412.0" r="2.8" fill="#70483a"/>
<circle cx="1049.4" cy="424.2" r="2.8" fill="#5e3e30"/>
<circle cx="1064.6" cy="395.8" r="2.8" fill="#664a40"/>
<circle cx="1023.7" cy="443.0" r="2.8" fill="#5e3e30"/>
<circle cx="977.2" cy="438.0" r="2.8" fill="#786058"/>
<circle cx="1075.7" cy="423.9" r="2.8" fill="#70483a"/>
<circle cx="933.6" cy="405.0" r="2.8" fill="#a8a090"/>
<circle cx="994.2" cy="439.9" r="2.8" fill="#4e342a"/>
<circle cx="1030.2" cy="396.5" r="2.8" fill="#5e3e30"/>
<circle cx="1027.6" cy="450.1" r="2.8" fill="#8a5e4a"/>
<circle cx="1000.4" cy="410.5" r="2.8" fill="#6a4638"/>
<circle cx="954.6" cy="399.0" r="2.8" fill="#664a40"/>
<circle cx="1002.6" cy="385.9" r="2.8" fill="#807060"/>
<circle cx="932.5" cy="389.3" r="2.8" fill="#c8b89a"/>
<circle cx="1063.7" cy="448.3" r="2.8" fill="#7e5846"/>
<circle cx="1002.1" cy="415.0" r="2.8" fill="#7e5846"/>
<circle cx="1026.9" cy="409.7" r="2.8" fill="#4a3a30"/>
<circle cx="1067.2" cy="424.0" r="2.8" fill="#7e5846"/>
<circle cx="938.6" cy="407.4" r="2.8" fill="#a89880"/>
<circle cx="942.3" cy="401.8" r="2.8" fill="#241c18"/>
<circle cx="1038.0" cy="444.5" r="2.8" fill="#84604e"/>
<circle cx="1034.4" cy="386.5" r="2.8" fill="#6a4638"/>
<circle cx="924.3" cy="412.2" r="2.8" fill="#8a8478"/>
<circle cx="925.5" cy="421.2" r="2.8" fill="#7e5846"/>
<circle cx="1007.7" cy="387.6" r="2.8" fill="#8c6450"/>
<circle cx="947.9" cy="384.5" r="2.8" fill="#c8b89a"/>
<circle cx="1032.7" cy="398.0" r="2.8" fill="#5e3e30"/>
<circle cx="986.3" cy="434.2" r="2.8" fill="#787870"/>
<circle cx="1069.4" cy="411.5" r="2.8" fill="#4a3a30"/>
<circle cx="965.0" cy="437.7" r="2.8" fill="#6a4638"/>
<circle cx="1059.5" cy="391.8" r="2.8" fill="#84604e"/>
<circle cx="921.0" cy="403.9" r="2.8" fill="#0a0a0a"/>
<circle cx="1001.4" cy="405.0" r="2.8" fill="#8a6656"/>
<circle cx="955.5" cy="424.0" r="2.8" fill="#5a5048"/>
<circle cx="972.1" cy="392.6" r="2.8" fill="#84604e"/>
<circle cx="954.5" cy="427.2" r="2.8" fill="#807060"/>
<circle cx="990.4" cy="410.3" r="2.8" fill="#664a40"/>
<circle cx="983.7" cy="416.3" r="2.8" fill="#a8a090"/>
<circle cx="1037.3" cy="425.1" r="2.8" fill="#7a5444"/>
<circle cx="918.2" cy="422.8" r="2.8" fill="#d8c8a8"/>
<circle cx="1013.0" cy="400.2" r="2.8" fill="#664a40"/>
<circle cx="957.3" cy="430.3" r="2.8" fill="#a8a090"/>
<circle cx="945.6" cy="405.0" r="2.8" fill="#988878"/>
<circle cx="933.9" cy="422.1" r="2.8" fill="#a07050"/>
<circle cx="926.6" cy="400.1" r="2.8" fill="#d8c8a8"/>
<circle cx="924.3" cy="394.4" r="2.8" fill="#181410"/>
<circle cx="1051.9" cy="442.6" r="2.8" fill="#8c6450"/>
<circle cx="940.9" cy="425.5" r="2.8" fill="#6a4638"/>
<circle cx="981.5" cy="435.7" r="2.8" fill="#100c0a"/>
<circle cx="1053.9" cy="395.3" r="2.8" fill="#5a3828"/>
<circle cx="1001.6" cy="392.0" r="2.8" fill="#8c6450"/>
<circle cx="1030.9" cy="409.4" r="2.8" fill="#7e5846"/>
<circle cx="919.8" cy="427.2" r="2.8" fill="#d8c8a8"/>
<circle cx="1067.7" cy="423.2" r="2.8" fill="#8a5e4a"/>
<circle cx="1007.1" cy="412.4" r="2.8" fill="#786058"/>
<circle cx="945.4" cy="382.5" r="2.8" fill="#988070"/>
<circle cx="943.1" cy="411.8" r="2.8" fill="#b8a890"/>
<circle cx="974.6" cy="439.3" r="2.8" fill="#96684c"/>
<circle cx="919.9" cy="397.0" r="2.8" fill="#a89880"/>
<circle cx="1004.4" cy="394.7" r="2.8" fill="#70483a"/>
<circle cx="984.1" cy="380.6" r="2.8" fill="#4a3a30"/>
<circle cx="1010.9" cy="403.5" r="2.8" fill="#7a5444"/>
<circle cx="1022.5" cy="436.6" r="2.8" fill="#664a40"/>
<circle cx="1060.5" cy="400.7" r="2.8" fill="#7e5846"/>
<circle cx="959.9" cy="432.9" r="2.8" fill="#0a0a0a"/>
<circle cx="988.0" cy="390.4" r="2.8" fill="#786058"/>
<circle cx="1033.7" cy="385.0" r="2.8" fill="#7e5846"/>
<circle cx="999.4" cy="401.4" r="2.8" fill="#a07050"/>
<circle cx="1059.8" cy="385.0" r="2.8" fill="#2a2220"/>
<circle cx="1020.1" cy="446.7" r="2.8" fill="#4e342a"/>
<circle cx="1034.0" cy="425.3" r="2.8" fill="#6a4638"/>
<circle cx="936.1" cy="410.6" r="2.8" fill="#a07050"/>
<circle cx="1051.3" cy="402.7" r="2.8" fill="#96684c"/>
<circle cx="1074.0" cy="435.2" r="2.8" fill="#8a6656"/>
<circle cx="1069.8" cy="423.0" r="2.8" fill="#84604e"/>
<circle cx="1045.0" cy="451.6" r="2.8" fill="#4a3a30"/>
<circle cx="997.5" cy="438.0" r="2.8" fill="#8c6450"/>
<circle cx="980.3" cy="418.5" r="2.8" fill="#7e5846"/>
<circle cx="944.5" cy="388.8" r="2.8" fill="#988070"/>
<circle cx="990.6" cy="390.6" r="2.8" fill="#5a3828"/>
<circle cx="964.1" cy="412.8" r="2.8" fill="#7e5846"/>
<circle cx="1030.4" cy="437.2" r="2.8" fill="#70483a"/>
<circle cx="987.9" cy="442.0" r="2.8" fill="#84604e"/>
<circle cx="974.9" cy="381.9" r="2.8" fill="#70483a"/>
<circle cx="950.7" cy="435.6" r="2.8" fill="#2a2220"/>
<circle cx="1055.6" cy="421.4" r="2.8" fill="#7a5444"/>
<circle cx="1041.8" cy="449.0" r="2.8" fill="#241c18"/>
<circle cx="972.7" cy="416.9" r="2.8" fill="#8a5e4a"/>
<circle cx="967.2" cy="393.0" r="2.8" fill="#8a6656"/>
<circle cx="947.8" cy="417.3" r="2.8" fill="#a07050"/>
<circle cx="928.2" cy="400.3" r="2.8" fill="#c0a888"/>
<circle cx="964.4" cy="389.5" r="2.8" fill="#6a4638"/>
<circle cx="1051.0" cy="388.8" r="2.8" fill="#5e3e30"/>
<circle cx="1088.1" cy="388.0" r="2.8" fill="#241c18"/>
<circle cx="938.2" cy="415.1" r="2.8" fill="#2a2220"/>
<circle cx="1041.8" cy="419.1" r="2.8" fill="#8c6450"/>
<circle cx="926.7" cy="384.7" r="2.8" fill="#0a0a0a"/>
<circle cx="1031.8" cy="437.3" r="2.8" fill="#786058"/>
<circle cx="1062.5" cy="425.0" r="2.8" fill="#70483a"/>
<circle cx="1066.2" cy="454.8" r="2.8" fill="#664a40"/>
<circle cx="999.0" cy="389.5" r="2.8" fill="#786058"/>
<circle cx="1057.7" cy="416.2" r="2.8" fill="#84604e"/>
<circle cx="1017.5" cy="412.3" r="2.8" fill="#664a40"/>
<circle cx="926.6" cy="409.8" r="2.8" fill="#907868"/>
<circle cx="922.8" cy="412.6" r="2.8" fill="#8a5e4a"/>
<circle cx="954.9" cy="402.3" r="2.8" fill="#96684c"/>
<circle cx="969.8" cy="439.7" r="2.8" fill="#d8c8a8"/>
<circle cx="936.7" cy="394.9" r="2.8" fill="#d8c8a8"/>
<circle cx="1034.8" cy="414.1" r="2.8" fill="#84604e"/>
<circle cx="982.3" cy="434.9" r="2.8" fill="#7a5444"/>
<circle cx="919.2" cy="405.0" r="2.8" fill="#241c18"/>
<circle cx="1037.1" cy="391.2" r="2.8" fill="#84604e"/>
<circle cx="959.3" cy="406.9" r="2.8" fill="#d8c8a8"/>
<circle cx="1061.2" cy="416.3" r="2.8" fill="#8a6656"/>
<circle cx="1046.1" cy="443.5" r="2.8" fill="#664a40"/>
<circle cx="967.3" cy="385.3" r="2.8" fill="#4a3a30"/>
<circle cx="1061.3" cy="444.8" r="2.8" fill="#907868"/>
<circle cx="946.7" cy="399.4" r="2.8" fill="#8c6450"/>
<circle cx="983.9" cy="382.0" r="2.8" fill="#241c18"/>
<circle cx="962.8" cy="406.8" r="2.8" fill="#c0a888"/>
<circle cx="1042.7" cy="449.1" r="2.8" fill="#a07050"/>
<circle cx="963.0" cy="421.3" r="2.8" fill="#70483a"/>
<circle cx="955.8" cy="430.8" r="2.8" fill="#a07050"/>
<circle cx="1019.0" cy="441.8" r="2.8" fill="#5e3e30"/>
<circle cx="951.0" cy="402.2" r="2.8" fill="#a8a090"/>
<circle cx="1061.9" cy="440.5" r="2.8" fill="#6a4638"/>
<circle cx="944.6" cy="395.3" r="2.8" fill="#8c6450"/>
<circle cx="1011.4" cy="395.3" r="2.8" fill="#664a40"/>
<circle cx="990.9" cy="441.1" r="2.8" fill="#786058"/>
<circle cx="1072.8" cy="381.5" r="2.8" fill="#70483a"/>
<circle cx="935.0" cy="430.2" r="2.8" fill="#5a5048"/>
<circle cx="944.3" cy="410.1" r="2.8" fill="#a8a090"/>
<circle cx="927.0" cy="417.5" r="2.8" fill="#b8a890"/>
<circle cx="978.0" cy="389.0" r="2.8" fill="#0a0a0a"/>
<circle cx="954.0" cy="418.3" r="2.8" fill="#241c18"/>
<circle cx="919.2" cy="383.4" r="2.8" fill="#787870"/>
<circle cx="1081.4" cy="451.9" r="2.8" fill="#a88858"/>
<circle cx="1001.1" cy="415.4" r="2.8" fill="#8a6656"/>
<circle cx="959.2" cy="406.0" r="2.8" fill="#a89880"/>
<circle cx="976.6" cy="384.3" r="2.8" fill="#2a2220"/>
<circle cx="989.4" cy="403.8" r="2.8" fill="#8a5e4a"/>
<circle cx="1057.1" cy="404.8" r="2.8" fill="#5e3e30"/>
<circle cx="935.8" cy="414.2" r="2.8" fill="#84604e"/>
<circle cx="1059.1" cy="448.7" r="2.8" fill="#70483a"/>
<circle cx="1013.1" cy="424.6" r="2.8" fill="#6a4638"/>
<circle cx="919.5" cy="421.0" r="2.8" fill="#c0a888"/>
<circle cx="1034.8" cy="434.8" r="2.8" fill="#664a40"/>
<circle cx="952.0" cy="410.4" r="2.8" fill="#988878"/>
<circle cx="1077.2" cy="419.2" r="2.8" fill="#4e342a"/>
<circle cx="1055.8" cy="388.3" r="2.8" fill="#70483a"/>
<circle cx="1073.1" cy="455.0" r="2.8" fill="#8a7a68"/>
<circle cx="986.7" cy="409.5" r="2.8" fill="#241c18"/>
<circle cx="972.6" cy="400.5" r="2.8" fill="#70483a"/>
<circle cx="949.9" cy="393.5" r="2.8" fill="#5a5048"/>
<circle cx="1034.5" cy="401.6" r="2.8" fill="#a07050"/>
<circle cx="979.2" cy="432.6" r="2.8" fill="#7e5846"/>
<circle cx="1062.1" cy="399.6" r="2.8" fill="#8c6450"/>
<circle cx="1044.0" cy="452.2" r="2.8" fill="#a88858"/>
<circle cx="919.3" cy="390.6" r="2.8" fill="#181410"/>
<circle cx="1022.8" cy="388.1" r="2.8" fill="#8c6450"/>
<circle cx="1006.1" cy="427.8" r="2.8" fill="#70483a"/>
<circle cx="946.9" cy="390.0" r="2.8" fill="#a07050"/>
<circle cx="961.0" cy="432.8" r="2.8" fill="#2a2220"/>
<circle cx="966.0" cy="438.1" r="2.8" fill="#7a5444"/>
<circle cx="937.4" cy="429.5" r="2.8" fill="#988070"/>
<circle cx="945.5" cy="398.5" r="2.8" fill="#0a0a0a"/>
<circle cx="1039.6" cy="413.0" r="2.8" fill="#8a6656"/>
<circle cx="1041.0" cy="392.6" r="2.8" fill="#5e3e30"/>
<circle cx="988.6" cy="383.3" r="2.8" fill="#2a2220"/>
<circle cx="930.0" cy="417.2" r="2.8" fill="#786058"/>
<circle cx="1012.2" cy="394.9" r="2.8" fill="#5a3828"/>
<circle cx="1027.3" cy="413.8" r="2.8" fill="#6a4638"/>
<circle cx="988.9" cy="426.3" r="2.8" fill="#d8c8a8"/>
<circle cx="988.6" cy="402.2" r="2.8" fill="#181410"/>
<circle cx="992.4" cy="440.7" r="2.8" fill="#84604e"/>
<circle cx="922.9" cy="416.3" r="2.8" fill="#907868"/>
<circle cx="1077.4" cy="398.0" r="2.8" fill="#664a40"/>
<circle cx="931.5" cy="391.2" r="2.8" fill="#a07050"/>
<circle cx="940.6" cy="409.7" r="2.8" fill="#8a8478"/>
<circle cx="948.2" cy="400.9" r="2.8" fill="#807060"/>
<circle cx="1049.3" cy="399.7" r="2.8" fill="#7e5846"/>
<circle cx="1034.3" cy="447.1" r="2.8" fill="#664a40"/>
<circle cx="1035.9" cy="436.9" r="2.8" fill="#a07050"/>
<circle cx="979.1" cy="423.9" r="2.8" fill="#8a6656"/>
<circle cx="989.1" cy="414.3" r="2.8" fill="#96684c"/>
<circle cx="952.1" cy="397.4" r="2.8" fill="#c8b89a"/>
<circle cx="922.6" cy="414.4" r="2.8" fill="#807060"/>
<circle cx="1008.4" cy="445.7" r="2.8" fill="#8a6656"/>
<circle cx="1037.6" cy="402.1" r="2.8" fill="#4a3a30"/>
<circle cx="1055.0" cy="402.3" r="2.8" fill="#7e5846"/>
<circle cx="1069.8" cy="388.1" r="2.8" fill="#988070"/>
<circle cx="1000.3" cy="430.3" r="2.8" fill="#70483a"/>
<circle cx="943.8" cy="385.9" r="2.8" fill="#c8b89a"/>
<circle cx="919.2" cy="414.6" r="2.8" fill="#70483a"/>
<circle cx="1001.7" cy="431.7" r="2.8" fill="#4a3a30"/>
<circle cx="919.4" cy="401.5" r="2.8" fill="#988070"/>
<circle cx="1067.9" cy="431.3" r="2.8" fill="#8a5e4a"/>
<circle cx="948.0" cy="413.8" r="2.8" fill="#a8a090"/>
<circle cx="1074.4" cy="450.4" r="2.8" fill="#7e5846"/>
<circle cx="1069.2" cy="416.1" r="2.8" fill="#8c6450"/>
<circle cx="1007.5" cy="393.0" r="2.8" fill="#100c0a"/>
<circle cx="1046.7" cy="441.8" r="2.8" fill="#8c6450"/>
<circle cx="1073.1" cy="456.7" r="2.8" fill="#181410"/>
<circle cx="949.5" cy="430.5" r="2.8" fill="#c8b89a"/>
<circle cx="1033.9" cy="416.7" r="2.8" fill="#6a4638"/>
<circle cx="1038.4" cy="391.4" r="2.8" fill="#988070"/>
<circle cx="920.2" cy="419.3" r="2.8" fill="#96684c"/>
<circle cx="932.3" cy="407.9" r="2.8" fill="#a89880"/>
<circle cx="1029.2" cy="416.9" r="2.8" fill="#5a3828"/>
<circle cx="1018.0" cy="384.2" r="2.8" fill="#7e5846"/>
<circle cx="965.4" cy="409.8" r="2.8" fill="#d8c8a8"/>
<circle cx="1056.2" cy="431.3" r="2.8" fill="#a07050"/>
<circle cx="987.7" cy="391.2" r="2.8" fill="#5a3828"/>
<circle cx="1035.3" cy="444.2" r="2.8" fill="#5a3828"/>
<circle cx="1029.4" cy="429.1" r="2.8" fill="#6a4638"/>
<circle cx="934.6" cy="411.8" r="2.8" fill="#d8c8a8"/>
<circle cx="1091.1" cy="438.4" r="2.8" fill="#96684c"/>
<circle cx="1087.5" cy="389.0" r="2.8" fill="#8c6450"/>
<circle cx="1065.6" cy="427.2" r="2.8" fill="#786058"/>
<circle cx="931.2" cy="414.9" r="2.8" fill="#0a0a0a"/>
<circle cx="944.7" cy="422.5" r="2.8" fill="#b8a890"/>
<circle cx="948.1" cy="434.2" r="2.8" fill="#8a8478"/>
<circle cx="948.2" cy="393.3" r="2.8" fill="#241c18"/>
<circle cx="975.7" cy="418.2" r="2.8" fill="#8a5e4a"/>
<circle cx="1047.3" cy="387.5" r="2.8" fill="#786058"/>
<circle cx="955.7" cy="406.5" r="2.8" fill="#664a40"/>
<circle cx="979.5" cy="422.9" r="2.8" fill="#4a3a30"/>
<circle cx="974.4" cy="381.5" r="2.8" fill="#8a6656"/>
<circle cx="1047.3" cy="436.6" r="2.8" fill="#2a2220"/>
<circle cx="928.2" cy="416.1" r="2.8" fill="#0a0a0a"/>
<circle cx="923.3" cy="391.6" r="2.8" fill="#d8c8a8"/>
<circle cx="1051.7" cy="449.6" r="2.8" fill="#181410"/>
<circle cx="1005.2" cy="418.9" r="2.8" fill="#6a4638"/>
<circle cx="992.7" cy="435.9" r="2.8" fill="#0a0a0a"/>
<circle cx="917.5" cy="422.7" r="2.8" fill="#a07050"/>
<circle cx="927.1" cy="426.3" r="2.8" fill="#0a0a0a"/>
<circle cx="1055.5" cy="433.8" r="2.8" fill="#7e5846"/>
<circle cx="997.1" cy="386.0" r="2.8" fill="#664a40"/>
<circle cx="1007.2" cy="422.0" r="2.8" fill="#7a5444"/>
<circle cx="936.0" cy="391.3" r="2.8" fill="#0a0a0a"/>
<circle cx="996.6" cy="426.2" r="2.8" fill="#5e3e30"/>
<circle cx="917.8" cy="414.8" r="2.8" fill="#0a0a0a"/>
<circle cx="1000.2" cy="391.1" r="2.8" fill="#5e3e30"/>
<circle cx="989.6" cy="409.1" r="2.8" fill="#4a3a30"/>
<circle cx="933.3" cy="423.2" r="2.8" fill="#d8c8a8"/>
<circle cx="1022.7" cy="447.9" r="2.8" fill="#0a0a0a"/>
<circle cx="967.7" cy="386.3" r="2.8" fill="#d8c8a8"/>
<circle cx="976.2" cy="412.0" r="2.8" fill="#84604e"/>
<circle cx="990.1" cy="424.4" r="2.8" fill="#4a3a30"/>
<circle cx="919.7" cy="424.7" r="2.8" fill="#5a3828"/>
<circle cx="956.5" cy="394.2" r="2.8" fill="#a07050"/>
<circle cx="1016.2" cy="382.3" r="2.8" fill="#4e342a"/>
<circle cx="1041.7" cy="419.3" r="2.8" fill="#8a5e4a"/>
<circle cx="1054.6" cy="433.9" r="2.8" fill="#664a40"/>
<circle cx="1063.2" cy="396.4" r="2.8" fill="#5a3828"/>
<circle cx="938.6" cy="415.5" r="2.8" fill="#100c0a"/>
<circle cx="1044.4" cy="383.9" r="2.8" fill="#664a40"/>
<circle cx="927.9" cy="416.0" r="2.8" fill="#c0a888"/>
<circle cx="1029.3" cy="436.7" r="2.8" fill="#8a8478"/>
<circle cx="1018.5" cy="420.3" r="2.8" fill="#6a4638"/>
<circle cx="987.2" cy="413.2" r="2.8" fill="#6a6860"/>
<circle cx="998.7" cy="382.5" r="2.8" fill="#5e3e30"/>
<circle cx="1000.6" cy="438.7" r="2.8" fill="#a07050"/>
<circle cx="1051.7" cy="426.1" r="2.8" fill="#70483a"/>
<circle cx="1039.5" cy="417.8" r="2.8" fill="#6a4638"/>
<circle cx="1065.5" cy="389.5" r="2.8" fill="#7a5444"/>
<circle cx="949.9" cy="429.3" r="2.8" fill="#907868"/>
<circle cx="980.8" cy="420.2" r="2.8" fill="#0a0a0a"/>
<circle cx="985.0" cy="430.5" r="2.8" fill="#8c6450"/>
<circle cx="939.5" cy="412.6" r="2.8" fill="#d8c8a8"/>
<circle cx="933.9" cy="409.7" r="2.8" fill="#786058"/>
<circle cx="953.6" cy="394.8" r="2.8" fill="#786058"/>
<circle cx="930.5" cy="418.7" r="2.8" fill="#807060"/>
<circle cx="920.0" cy="421.0" r="2.8" fill="#2a2220"/>
<circle cx="1044.9" cy="404.6" r="2.8" fill="#a07050"/>
<circle cx="986.6" cy="435.1" r="2.8" fill="#8a5e4a"/>
<circle cx="990.2" cy="434.2" r="2.8" fill="#a07050"/>
<circle cx="1031.1" cy="448.7" r="2.8" fill="#5e3e30"/>
<circle cx="1055.8" cy="383.3" r="2.8" fill="#786058"/>
<circle cx="977.0" cy="384.3" r="2.8" fill="#7a5444"/>
<circle cx="945.4" cy="418.2" r="2.8" fill="#a8a090"/>
<circle cx="971.8" cy="383.8" r="2.8" fill="#988070"/>
<circle cx="963.8" cy="394.0" r="2.8" fill="#c0a888"/>
<circle cx="1006.6" cy="390.8" r="2.8" fill="#84604e"/>
<circle cx="1018.7" cy="400.0" r="2.8" fill="#96684c"/>
<circle cx="988.9" cy="395.4" r="2.8" fill="#786058"/>
<circle cx="939.7" cy="430.0" r="2.8" fill="#664a40"/>
<circle cx="1068.5" cy="397.2" r="2.8" fill="#5a3828"/>
<circle cx="920.1" cy="410.8" r="2.8" fill="#907868"/>
<circle cx="1063.1" cy="449.7" r="2.8" fill="#b09060"/>
<circle cx="1030.5" cy="413.6" r="2.8" fill="#6a4638"/>
<circle cx="939.3" cy="407.6" r="2.8" fill="#8a8478"/>
<circle cx="1045.9" cy="383.8" r="2.8" fill="#8a5e4a"/>
<circle cx="987.4" cy="437.9" r="2.8" fill="#4e342a"/>
<circle cx="940.6" cy="389.0" r="2.8" fill="#6a6860"/>
<circle cx="1043.8" cy="428.5" r="2.8" fill="#84604e"/>
<circle cx="1037.8" cy="407.6" r="2.8" fill="#8a5e4a"/>
<circle cx="1015.6" cy="413.2" r="2.8" fill="#8a6656"/>
<circle cx="1019.4" cy="400.9" r="2.8" fill="#5e3e30"/>
<circle cx="959.2" cy="437.4" r="2.8" fill="#a8a090"/>
<circle cx="954.1" cy="384.4" r="2.8" fill="#d8c8a8"/>
<circle cx="981.9" cy="429.8" r="2.8" fill="#a07050"/>
<circle cx="958.0" cy="384.2" r="2.8" fill="#0a0a0a"/>
<circle cx="924.1" cy="395.4" r="2.8" fill="#181410"/>
<circle cx="941.2" cy="418.9" r="2.8" fill="#d8c8a8"/>
<circle cx="966.2" cy="402.2" r="2.8" fill="#a07050"/>
<circle cx="918.2" cy="384.1" r="2.8" fill="#2a2220"/>
<circle cx="989.4" cy="423.9" r="2.8" fill="#5e3e30"/>
<circle cx="1044.4" cy="384.0" r="2.8" fill="#7e5846"/>
<circle cx="926.7" cy="415.7" r="2.8" fill="#c0a888"/>
<circle cx="989.6" cy="415.6" r="2.8" fill="#5a5048"/>
<circle cx="1016.7" cy="387.0" r="2.8" fill="#8c6450"/>
<circle cx="1028.7" cy="417.1" r="2.8" fill="#96684c"/>
<circle cx="963.4" cy="406.0" r="2.8" fill="#4e342a"/>
<circle cx="985.2" cy="440.5" r="2.8" fill="#d8c8a8"/>
<circle cx="918.6" cy="404.5" r="2.8" fill="#786058"/>
<circle cx="949.3" cy="426.2" r="2.8" fill="#a8a090"/>
<circle cx="953.9" cy="416.3" r="2.8" fill="#c0a888"/>
<circle cx="935.0" cy="422.8" r="2.8" fill="#c8b89a"/>
<circle cx="929.5" cy="407.8" r="2.8" fill="#a8a090"/>
<circle cx="992.1" cy="390.0" r="2.8" fill="#5e3e30"/>
<circle cx="1001.9" cy="423.0" r="2.8" fill="#8a5e4a"/>
<circle cx="936.5" cy="431.1" r="2.8" fill="#d8c8a8"/>
<circle cx="1061.9" cy="417.1" r="2.8" fill="#96684c"/>
<circle cx="1019.2" cy="392.2" r="2.8" fill="#5e3e30"/>
<circle cx="1060.5" cy="410.7" r="2.8" fill="#807060"/>
<circle cx="1073.6" cy="430.8" r="2.8" fill="#d8c8a8"/>
<circle cx="1020.2" cy="435.5" r="2.8" fill="#8a6656"/>
<circle cx="983.1" cy="416.9" r="2.8" fill="#5a3828"/>
<circle cx="1072.5" cy="390.5" r="2.8" fill="#786058"/>
<circle cx="973.4" cy="433.2" r="2.8" fill="#96684c"/>
<circle cx="935.0" cy="387.9" r="2.8" fill="#6a6860"/>
<circle cx="1048.7" cy="442.7" r="2.8" fill="#787870"/>
<circle cx="968.8" cy="403.6" r="2.8" fill="#786058"/>
<circle cx="1036.5" cy="421.9" r="2.8" fill="#988878"/>
<circle cx="947.2" cy="398.0" r="2.8" fill="#5a3828"/>
<circle cx="1083.2" cy="405.8" r="2.8" fill="#8a5e4a"/>
<circle cx="991.1" cy="441.3" r="2.8" fill="#787870"/>
<circle cx="1050.1" cy="381.1" r="2.8" fill="#786058"/>
<circle cx="1040.9" cy="381.4" r="2.8" fill="#8a5e4a"/>
<circle cx="917.7" cy="418.4" r="2.8" fill="#8a5e4a"/>
<circle cx="937.5" cy="400.0" r="2.8" fill="#988070"/>
<circle cx="971.7" cy="401.9" r="2.8" fill="#8a5e4a"/>
<circle cx="948.0" cy="390.3" r="2.8" fill="#241c18"/>
<circle cx="921.5" cy="389.8" r="2.8" fill="#0a0a0a"/>
<circle cx="923.5" cy="386.7" r="2.8" fill="#70483a"/>
<circle cx="1084.0" cy="442.4" r="2.8" fill="#70483a"/>
<circle cx="998.2" cy="433.4" r="2.8" fill="#664a40"/>
<circle cx="1079.5" cy="435.2" r="2.8" fill="#6a4638"/>
<circle cx="963.3" cy="418.0" r="2.8" fill="#5a5048"/>
<circle cx="944.6" cy="389.8" r="2.8" fill="#8c6450"/>
<circle cx="990.1" cy="413.1" r="2.8" fill="#a07050"/>
<circle cx="920.6" cy="403.7" r="2.8" fill="#6a4638"/>
<circle cx="986.2" cy="405.7" r="2.8" fill="#a07050"/>
<circle cx="1057.8" cy="394.1" r="2.8" fill="#5e3e30"/>
<circle cx="1069.5" cy="416.0" r="2.8" fill="#96684c"/>
<circle cx="994.4" cy="426.8" r="2.8" fill="#5a3828"/>
<circle cx="1037.4" cy="422.9" r="2.8" fill="#84604e"/>
<circle cx="940.0" cy="432.7" r="2.8" fill="#988070"/>
<circle cx="1071.9" cy="449.5" r="2.8" fill="#a8a090"/>
<circle cx="1022.9" cy="448.5" r="2.8" fill="#4a3a30"/>
<circle cx="1031.7" cy="406.6" r="2.8" fill="#8a5e4a"/>
<circle cx="1062.0" cy="417.2" r="2.8" fill="#70483a"/>
<circle cx="1029.4" cy="429.1" r="2.8" fill="#6a4638"/>
<circle cx="972.9" cy="382.1" r="2.8" fill="#d8c8a8"/>
<circle cx="932.0" cy="411.6" r="2.8" fill="#664a40"/>
<circle cx="935.2" cy="393.7" r="2.8" fill="#7a5444"/>
<circle cx="989.5" cy="398.2" r="2.8" fill="#6a4638"/>
<circle cx="1001.1" cy="406.2" r="2.8" fill="#6a4638"/>
<circle cx="989.2" cy="430.6" r="2.8" fill="#84604e"/>
<circle cx="1020.7" cy="401.8" r="2.8" fill="#5e3e30"/>
<circle cx="977.5" cy="405.3" r="2.8" fill="#5a3828"/>
<circle cx="1049.7" cy="431.7" r="2.8" fill="#6a4638"/>
<circle cx="949.1" cy="432.5" r="2.8" fill="#907868"/>
<circle cx="946.7" cy="421.8" r="2.8" fill="#6a6860"/>
<circle cx="1023.1" cy="444.1" r="2.8" fill="#8c6450"/>
<circle cx="1089.5" cy="452.1" r="2.8" fill="#a88858"/>
<circle cx="1067.6" cy="417.3" r="2.8" fill="#4a3a30"/>
<circle cx="918.0" cy="392.5" r="2.8" fill="#a07050"/>
<circle cx="983.4" cy="406.1" r="2.8" fill="#664a40"/>
<circle cx="972.5" cy="424.2" r="2.8" fill="#96684c"/>
<circle cx="1051.6" cy="392.9" r="2.8" fill="#664a40"/>
<circle cx="1028.4" cy="421.1" r="2.8" fill="#8a6656"/>
<circle cx="1028.7" cy="431.4" r="2.8" fill="#786058"/>
<circle cx="1003.6" cy="382.7" r="2.8" fill="#96684c"/>
<circle cx="984.1" cy="435.4" r="2.8" fill="#c0a888"/>
<circle cx="1037.3" cy="387.2" r="2.8" fill="#8a6656"/>
<circle cx="956.2" cy="429.9" r="2.8" fill="#b8a890"/>
<circle cx="1072.6" cy="391.1" r="2.8" fill="#6a4638"/>
<circle cx="991.2" cy="403.8" r="2.8" fill="#84604e"/>
<circle cx="1057.4" cy="380.6" r="2.8" fill="#7a5444"/>
<circle cx="965.5" cy="395.0" r="2.8" fill="#7a5444"/>
<circle cx="996.5" cy="415.7" r="2.8" fill="#a07050"/>
<circle cx="994.4" cy="422.6" r="2.8" fill="#181410"/>
<circle cx="997.3" cy="383.3" r="2.8" fill="#6a4638"/>
<circle cx="1072.0" cy="387.8" r="2.8" fill="#a07050"/>
<circle cx="1027.8" cy="426.2" r="2.8" fill="#6a4638"/>
<circle cx="1028.5" cy="388.2" r="2.8" fill="#4e342a"/>
<circle cx="1005.1" cy="443.9" r="2.8" fill="#a07050"/>
<circle cx="1077.9" cy="446.8" r="2.8" fill="#664a40"/>
<circle cx="1040.5" cy="450.2" r="2.8" fill="#786058"/>
<circle cx="971.5" cy="395.2" r="2.8" fill="#7e5846"/>
<circle cx="917.7" cy="395.7" r="2.8" fill="#7a5444"/>
<circle cx="946.8" cy="384.3" r="2.8" fill="#100c0a"/>
<circle cx="1004.8" cy="441.6" r="2.8" fill="#5e3e30"/>
<circle cx="945.6" cy="418.1" r="2.8" fill="#c0a888"/>
<circle cx="1020.7" cy="400.9" r="2.8" fill="#8a5e4a"/>
<circle cx="948.2" cy="393.3" r="2.8" fill="#c0a888"/>
<circle cx="980.6" cy="426.8" r="2.8" fill="#96684c"/>
<circle cx="948.9" cy="432.8" r="2.8" fill="#5a5048"/>
<circle cx="996.0" cy="399.9" r="2.8" fill="#6a4638"/>
<circle cx="953.8" cy="400.9" r="2.8" fill="#787870"/>
<circle cx="961.6" cy="400.5" r="2.8" fill="#a89880"/>
<circle cx="1038.9" cy="392.0" r="2.8" fill="#787870"/>
<circle cx="1069.0" cy="395.9" r="2.8" fill="#5a3828"/>
<circle cx="968.2" cy="414.4" r="2.8" fill="#100c0a"/>
<circle cx="1000.6" cy="414.9" r="2.8" fill="#0a0a0a"/>
<circle cx="933.6" cy="427.1" r="2.8" fill="#100c0a"/>
<circle cx="1042.6" cy="422.6" r="2.8" fill="#70483a"/>
<circle cx="976.1" cy="440.2" r="2.8" fill="#4a3a30"/>
<circle cx="974.0" cy="402.2" r="2.8" fill="#a07050"/>
<circle cx="938.0" cy="407.2" r="2.8" fill="#988070"/>
<circle cx="1026.5" cy="387.6" r="2.8" fill="#7e5846"/>
<circle cx="932.0" cy="431.0" r="2.8" fill="#84604e"/>
<circle cx="933.7" cy="411.5" r="2.8" fill="#100c0a"/>
<circle cx="986.0" cy="401.1" r="2.8" fill="#b8a890"/>
<circle cx="956.4" cy="395.5" r="2.8" fill="#0a0a0a"/>
<circle cx="970.8" cy="380.7" r="2.8" fill="#a8a090"/>
<circle cx="1083.2" cy="423.5" r="2.8" fill="#7e5846"/>
<circle cx="926.2" cy="380.9" r="2.8" fill="#6a6860"/>
<circle cx="952.7" cy="397.7" r="2.8" fill="#241c18"/>
<circle cx="924.2" cy="387.0" r="2.8" fill="#8c6450"/>
<circle cx="1002.0" cy="426.9" r="2.8" fill="#7e5846"/>
<circle cx="1047.9" cy="450.8" r="2.8" fill="#786058"/>
<circle cx="1023.6" cy="405.2" r="2.8" fill="#8a5e4a"/>
<circle cx="970.4" cy="384.3" r="2.8" fill="#a07050"/>
<circle cx="1080.0" cy="431.9" r="2.8" fill="#8a6656"/>
<circle cx="975.2" cy="415.6" r="2.8" fill="#786058"/>
<circle cx="959.5" cy="414.3" r="2.8" fill="#5a5048"/>
<circle cx="1071.0" cy="432.7" r="2.8" fill="#70483a"/>
<circle cx="943.2" cy="413.6" r="2.8" fill="#96684c"/>
<circle cx="974.3" cy="431.4" r="2.8" fill="#8c6450"/>
<circle cx="972.6" cy="382.0" r="2.8" fill="#a89880"/>
<circle cx="939.8" cy="396.3" r="2.8" fill="#5e3e30"/>
<circle cx="983.0" cy="426.1" r="2.8" fill="#8a6656"/>
<circle cx="984.4" cy="399.0" r="2.8" fill="#84604e"/>
<circle cx="1026.4" cy="407.8" r="2.8" fill="#70483a"/>
<circle cx="990.0" cy="414.7" r="2.8" fill="#0a0a0a"/>
<circle cx="1007.7" cy="442.6" r="2.8" fill="#84604e"/>
<circle cx="1089.5" cy="429.8" r="2.8" fill="#6a4638"/>
<circle cx="960.8" cy="410.3" r="2.8" fill="#807060"/>
<circle cx="929.0" cy="421.4" r="2.8" fill="#70483a"/>
<circle cx="1006.0" cy="393.6" r="2.8" fill="#7a5444"/>
<circle cx="971.7" cy="431.3" r="2.8" fill="#70483a"/>
<circle cx="1033.5" cy="436.4" r="2.8" fill="#786058"/>
<circle cx="982.4" cy="428.5" r="2.8" fill="#4a3a30"/>
<circle cx="926.1" cy="395.3" r="2.8" fill="#84604e"/>
<circle cx="1064.1" cy="394.3" r="2.8" fill="#84604e"/>
<circle cx="980.9" cy="412.9" r="2.8" fill="#b8a890"/>
<circle cx="1019.3" cy="408.7" r="2.8" fill="#c0a888"/>
<circle cx="980.1" cy="430.9" r="2.8" fill="#a07050"/>
<circle cx="1003.2" cy="445.3" r="2.8" fill="#4e342a"/>
<circle cx="988.0" cy="439.9" r="2.8" fill="#4e342a"/>
<circle cx="968.4" cy="412.1" r="2.8" fill="#5e3e30"/>
<circle cx="1085.3" cy="418.6" r="2.8" fill="#5a3828"/>
<circle cx="923.7" cy="382.8" r="2.8" fill="#5a5048"/>
<circle cx="1003.5" cy="416.1" r="2.8" fill="#664a40"/>
<circle cx="1029.6" cy="394.3" r="2.8" fill="#4a3a30"/>
<circle cx="1018.8" cy="443.2" r="2.8" fill="#7a5444"/>
<circle cx="1008.9" cy="387.0" r="2.8" fill="#96684c"/>
<circle cx="987.5" cy="405.1" r="2.8" fill="#786058"/>
<circle cx="997.9" cy="393.6" r="2.8" fill="#84604e"/>
<circle cx="945.5" cy="385.3" r="2.8" fill="#8c6450"/>
<circle cx="1049.1" cy="431.3" r="2.8" fill="#5a3828"/>
<circle cx="1018.5" cy="387.5" r="2.8" fill="#8a5e4a"/>
<circle cx="997.8" cy="426.1" r="2.8" fill="#8c6450"/>
<circle cx="1031.1" cy="439.4" r="2.8" fill="#7e5846"/>
<circle cx="1019.2" cy="399.1" r="2.8" fill="#5a3828"/>
<circle cx="1056.7" cy="409.8" r="2.8" fill="#4e342a"/>
<circle cx="963.5" cy="391.0" r="2.8" fill="#100c0a"/>
<circle cx="922.5" cy="397.8" r="2.8" fill="#6a6860"/>
<circle cx="922.5" cy="406.9" r="2.8" fill="#100c0a"/>
<circle cx="1093.1" cy="443.1" r="2.8" fill="#4e342a"/>
<circle cx="943.3" cy="398.7" r="2.8" fill="#807060"/>
<circle cx="1003.6" cy="392.8" r="2.8" fill="#7e5846"/>
<circle cx="943.3" cy="427.9" r="2.8" fill="#5a5048"/>
<circle cx="941.2" cy="425.2" r="2.8" fill="#988878"/>
<circle cx="1088.2" cy="455.1" r="2.8" fill="#4e342a"/>
<circle cx="1021.4" cy="448.0" r="2.8" fill="#70483a"/>
<circle cx="1022.3" cy="421.7" r="2.8" fill="#a07050"/>
<circle cx="1035.3" cy="396.2" r="2.8" fill="#8a6656"/>
<circle cx="1018.8" cy="381.0" r="2.8" fill="#6a4638"/>
<circle cx="983.4" cy="380.3" r="2.8" fill="#70483a"/>
<circle cx="961.1" cy="419.9" r="2.8" fill="#664a40"/>
<circle cx="990.2" cy="439.1" r="2.8" fill="#96684c"/>
<circle cx="929.7" cy="422.2" r="2.8" fill="#5a5048"/>
<circle cx="937.2" cy="412.3" r="2.8" fill="#664a40"/>
<circle cx="996.6" cy="410.4" r="2.8" fill="#5e3e30"/>
<circle cx="998.4" cy="424.8" r="2.8" fill="#96684c"/>
<circle cx="983.0" cy="426.1" r="2.8" fill="#d8c8a8"/>
<circle cx="1043.9" cy="414.6" r="2.8" fill="#84604e"/>
<circle cx="1014.8" cy="423.0" r="2.8" fill="#70483a"/>
<circle cx="1067.4" cy="417.5" r="2.8" fill="#100c0a"/>
<circle cx="924.4" cy="420.8" r="2.8" fill="#907868"/>
<circle cx="940.7" cy="381.0" r="2.8" fill="#2a2220"/>
<circle cx="1049.3" cy="394.1" r="2.8" fill="#8a5e4a"/>
<circle cx="980.7" cy="395.1" r="2.8" fill="#7e5846"/>
<circle cx="1039.8" cy="427.7" r="2.8" fill="#6a4638"/>
<circle cx="955.9" cy="403.0" r="2.8" fill="#6a4638"/>
<circle cx="956.3" cy="393.5" r="2.8" fill="#a07050"/>
<circle cx="981.3" cy="435.6" r="2.8" fill="#907868"/>
<circle cx="982.0" cy="416.3" r="2.8" fill="#988070"/>
<circle cx="986.8" cy="430.4" r="2.8" fill="#807060"/>
<circle cx="953.6" cy="383.4" r="2.8" fill="#241c18"/>
<circle cx="1019.7" cy="381.2" r="2.8" fill="#7e5846"/>
<circle cx="925.4" cy="406.2" r="2.8" fill="#c8b89a"/>
<circle cx="974.4" cy="428.5" r="2.8" fill="#a89880"/>
<circle cx="957.4" cy="399.4" r="2.8" fill="#787870"/>
<circle cx="999.9" cy="399.5" r="2.8" fill="#84604e"/>
<circle cx="1034.1" cy="440.7" r="2.8" fill="#8a5e4a"/>
<circle cx="1085.0" cy="439.6" r="2.8" fill="#6a6860"/>
<circle cx="1070.0" cy="451.8" r="2.8" fill="#5e3e30"/>
<circle cx="922.2" cy="402.8" r="2.8" fill="#100c0a"/>
<circle cx="1028.5" cy="444.9" r="2.8" fill="#a07050"/>
<circle cx="1075.0" cy="455.9" r="2.8" fill="#b09060"/>
<circle cx="957.9" cy="393.1" r="2.8" fill="#5a3828"/>
<circle cx="1078.5" cy="415.6" r="2.8" fill="#5a3828"/>
<circle cx="936.3" cy="406.7" r="2.8" fill="#96684c"/>
<circle cx="965.3" cy="390.7" r="2.8" fill="#a89880"/>
<circle cx="988.9" cy="414.2" r="2.8" fill="#8a6656"/>
<circle cx="1069.9" cy="457.5" r="2.8" fill="#7a5444"/>
<circle cx="923.2" cy="383.5" r="2.8" fill="#7e5846"/>
<circle cx="953.5" cy="395.3" r="2.8" fill="#4e342a"/>
<circle cx="921.5" cy="416.3" r="2.8" fill="#8a8478"/>
<circle cx="1026.7" cy="426.4" r="2.8" fill="#7a5444"/>
<circle cx="954.8" cy="404.0" r="2.8" fill="#0a0a0a"/>
<circle cx="1062.4" cy="385.9" r="2.8" fill="#5e3e30"/>
<circle cx="994.1" cy="402.5" r="2.8" fill="#4a3a30"/>
<circle cx="1020.2" cy="389.3" r="2.8" fill="#7a5444"/>
<circle cx="1052.1" cy="438.1" r="2.8" fill="#664a40"/>
<circle cx="1054.1" cy="448.7" r="2.8" fill="#4a3a30"/>
<circle cx="974.4" cy="430.6" r="2.8" fill="#8a8478"/>
<circle cx="955.6" cy="413.0" r="2.8" fill="#181410"/>
<circle cx="1082.3" cy="433.0" r="2.8" fill="#96684c"/>
<circle cx="976.0" cy="423.3" r="2.8" fill="#7e5846"/>
<circle cx="1016.9" cy="407.7" r="2.8" fill="#84604e"/>
<circle cx="963.5" cy="400.4" r="2.8" fill="#5a3828"/>
<circle cx="986.4" cy="429.4" r="2.8" fill="#8c6450"/>
<circle cx="952.5" cy="422.8" r="2.8" fill="#70483a"/>
<circle cx="1079.9" cy="422.8" r="2.8" fill="#a07050"/>
<circle cx="994.3" cy="394.6" r="2.8" fill="#5a3828"/>
<circle cx="926.9" cy="387.8" r="2.8" fill="#96684c"/>
<circle cx="939.7" cy="434.5" r="2.8" fill="#988070"/>
<circle cx="953.1" cy="415.7" r="2.8" fill="#b8a890"/>
<circle cx="1004.5" cy="380.7" r="2.8" fill="#786058"/>
<circle cx="1002.1" cy="441.2" r="2.8" fill="#4e342a"/>
<circle cx="1057.1" cy="392.9" r="2.8" fill="#8a5e4a"/>
<circle cx="1057.9" cy="401.5" r="2.8" fill="#6a4638"/>
<circle cx="1054.6" cy="415.6" r="2.8" fill="#8c6450"/>
<circle cx="935.5" cy="409.3" r="2.8" fill="#787870"/>
<circle cx="1026.1" cy="436.6" r="2.8" fill="#7e5846"/>
<circle cx="1008.6" cy="412.0" r="2.8" fill="#807060"/>
<circle cx="1001.1" cy="400.7" r="2.8" fill="#4e342a"/>
<circle cx="923.1" cy="413.3" r="2.8" fill="#787870"/>
<circle cx="982.6" cy="424.2" r="2.8" fill="#c0a888"/>
<circle cx="1001.9" cy="391.7" r="2.8" fill="#664a40"/>
<circle cx="956.2" cy="428.3" r="2.8" fill="#d8c8a8"/>
<circle cx="1010.0" cy="380.5" r="2.8" fill="#84604e"/>
<circle cx="970.8" cy="424.1" r="2.8" fill="#6a4638"/>
<circle cx="1025.8" cy="390.2" r="2.8" fill="#5e3e30"/>
<circle cx="964.0" cy="406.0" r="2.8" fill="#8a6656"/>
<circle cx="938.3" cy="387.6" r="2.8" fill="#8a5e4a"/>
<circle cx="975.3" cy="384.6" r="2.8" fill="#786058"/>
<circle cx="1055.1" cy="413.4" r="2.8" fill="#8a5e4a"/>
<circle cx="1089.6" cy="442.7" r="2.8" fill="#8c6450"/>
<circle cx="1021.8" cy="427.8" r="2.8" fill="#84604e"/>
<circle cx="1080.0" cy="450.6" r="2.8" fill="#786058"/>
<circle cx="1063.3" cy="424.9" r="2.8" fill="#70483a"/>
<circle cx="1021.3" cy="383.3" r="2.8" fill="#4a3a30"/>
<circle cx="1071.3" cy="401.0" r="2.8" fill="#4a3a30"/>
<circle cx="987.3" cy="380.8" r="2.8" fill="#7a5444"/>
<circle cx="1002.7" cy="407.6" r="2.8" fill="#70483a"/>
<circle cx="1057.6" cy="420.4" r="2.8" fill="#8a8478"/>
<circle cx="1068.7" cy="408.8" r="2.8" fill="#4e342a"/>
<circle cx="946.2" cy="402.6" r="2.8" fill="#100c0a"/>
<circle cx="936.6" cy="420.4" r="2.8" fill="#b8a890"/>
<circle cx="969.9" cy="416.7" r="2.8" fill="#5e3e30"/>
<circle cx="1000.3" cy="404.5" r="2.8" fill="#4a3a30"/>
<circle cx="1041.8" cy="425.0" r="2.8" fill="#a07050"/>
<circle cx="986.8" cy="390.3" r="2.8" fill="#664a40"/>
<circle cx="995.6" cy="437.5" r="2.8" fill="#5e3e30"/>
<circle cx="954.6" cy="418.3" r="2.8" fill="#6a6860"/>
<circle cx="1003.1" cy="442.3" r="2.8" fill="#96684c"/>
<circle cx="952.4" cy="408.2" r="2.8" fill="#c8b89a"/>
<circle cx="1005.7" cy="382.1" r="2.8" fill="#4a3a30"/>
<circle cx="949.3" cy="427.9" r="2.8" fill="#d8c8a8"/>
<circle cx="958.0" cy="392.0" r="2.8" fill="#7e5846"/>
<circle cx="931.7" cy="394.3" r="2.8" fill="#664a40"/>
<circle cx="1073.6" cy="431.3" r="2.8" fill="#c8b89a"/>
<circle cx="944.6" cy="384.2" r="2.8" fill="#988878"/>
<circle cx="928.6" cy="398.7" r="2.8" fill="#4e342a"/>
<circle cx="918.6" cy="428.7" r="2.8" fill="#181410"/>
<circle cx="1010.9" cy="416.5" r="2.8" fill="#96684c"/>
<circle cx="924.3" cy="387.4" r="2.8" fill="#96684c"/>
<circle cx="1029.7" cy="391.2" r="2.8" fill="#5e3e30"/>
<circle cx="1034.6" cy="404.6" r="2.8" fill="#84604e"/>
<circle cx="997.9" cy="384.8" r="2.8" fill="#8a5e4a"/>
<circle cx="1026.5" cy="396.4" r="2.8" fill="#8a8478"/>
<circle cx="929.3" cy="403.0" r="2.8" fill="#c8b89a"/>
<circle cx="1049.6" cy="433.0" r="2.8" fill="#7e5846"/>
<circle cx="970.7" cy="385.3" r="2.8" fill="#4e342a"/>
<circle cx="1087.7" cy="427.5" r="2.8" fill="#8a5e4a"/>
<circle cx="1066.3" cy="408.5" r="2.8" fill="#8c6450"/>
<circle cx="1042.3" cy="406.6" r="2.8" fill="#664a40"/>
<circle cx="942.7" cy="381.1" r="2.8" fill="#988070"/>
<circle cx="1060.4" cy="397.7" r="2.8" fill="#241c18"/>
<circle cx="976.7" cy="389.4" r="2.8" fill="#907868"/>
<circle cx="1050.4" cy="393.3" r="2.8" fill="#8a5e4a"/>
<circle cx="998.4" cy="386.0" r="2.8" fill="#8a5e4a"/>
<circle cx="1043.9" cy="383.6" r="2.8" fill="#8a6656"/>
<circle cx="946.6" cy="412.9" r="2.8" fill="#a8a090"/>
<circle cx="919.4" cy="397.7" r="2.8" fill="#2a2220"/>
<circle cx="964.6" cy="417.4" r="2.8" fill="#84604e"/>
<circle cx="1042.6" cy="431.3" r="2.8" fill="#70483a"/>
<circle cx="944.1" cy="428.5" r="2.8" fill="#241c18"/>
<circle cx="933.4" cy="394.7" r="2.8" fill="#84604e"/>
<circle cx="1065.6" cy="431.9" r="2.8" fill="#a89880"/>
<circle cx="999.1" cy="383.1" r="2.8" fill="#8a5e4a"/>
<circle cx="1000.7" cy="411.1" r="2.8" fill="#a07050"/>
<circle cx="935.5" cy="394.5" r="2.8" fill="#181410"/>
<circle cx="1059.9" cy="445.6" r="2.8" fill="#4e342a"/>
<circle cx="932.0" cy="400.5" r="2.8" fill="#787870"/>
<circle cx="940.4" cy="392.7" r="2.8" fill="#c8b89a"/>
<circle cx="1013.0" cy="407.4" r="2.8" fill="#70483a"/>
<circle cx="924.0" cy="423.0" r="2.8" fill="#181410"/>
<circle cx="972.1" cy="405.3" r="2.8" fill="#5a5048"/>
<circle cx="1008.5" cy="390.2" r="2.8" fill="#5a3828"/>
<circle cx="1001.2" cy="407.2" r="2.8" fill="#787870"/>
<circle cx="1001.4" cy="418.8" r="2.8" fill="#96684c"/>
<circle cx="984.8" cy="423.4" r="2.8" fill="#2a2220"/>
<circle cx="956.3" cy="381.6" r="2.8" fill="#c8b89a"/>
<circle cx="1027.4" cy="424.3" r="2.8" fill="#6a4638"/>
<circle cx="928.7" cy="399.9" r="2.8" fill="#8a6656"/>
<circle cx="948.0" cy="400.1" r="2.8" fill="#664a40"/>
<circle cx="1060.3" cy="422.7" r="2.8" fill="#8a8478"/>
<circle cx="1028.6" cy="422.1" r="2.8" fill="#4e342a"/>
<circle cx="1015.3" cy="447.3" r="2.8" fill="#70483a"/>
<circle cx="961.6" cy="410.3" r="2.8" fill="#5a5048"/>
<circle cx="1013.0" cy="438.1" r="2.8" fill="#6a6860"/>
<circle cx="922.5" cy="413.5" r="2.8" fill="#70483a"/>
<circle cx="1046.1" cy="406.8" r="2.8" fill="#a89880"/>
<circle cx="1062.6" cy="439.3" r="2.8" fill="#8c6450"/>
<circle cx="1041.9" cy="428.3" r="2.8" fill="#664a40"/>
<circle cx="985.5" cy="404.4" r="2.8" fill="#84604e"/>
<circle cx="992.0" cy="420.1" r="2.8" fill="#d8c8a8"/>
<circle cx="993.2" cy="386.2" r="2.8" fill="#6a4638"/>
<circle cx="950.3" cy="435.7" r="2.8" fill="#84604e"/>
<circle cx="1048.4" cy="404.4" r="2.8" fill="#4a3a30"/>
<circle cx="995.4" cy="442.7" r="2.8" fill="#c8b89a"/>
<circle cx="963.7" cy="401.1" r="2.8" fill="#787870"/>
<circle cx="1089.3" cy="453.8" r="2.8" fill="#664a40"/>
<circle cx="1067.4" cy="421.1" r="2.8" fill="#786058"/>
<circle cx="996.1" cy="408.5" r="2.8" fill="#2a2220"/>
<circle cx="992.6" cy="381.6" r="2.8" fill="#96684c"/>
<circle cx="1019.2" cy="409.2" r="2.8" fill="#807060"/>
<circle cx="1014.4" cy="422.7" r="2.8" fill="#a07050"/>
<circle cx="1034.3" cy="438.4" r="2.8" fill="#84604e"/>
<circle cx="1067.4" cy="401.9" r="2.8" fill="#5e3e30"/>
<circle cx="932.4" cy="389.4" r="2.8" fill="#7a5444"/>
<circle cx="1053.4" cy="385.7" r="2.8" fill="#7a5444"/>
<circle cx="936.5" cy="412.6" r="2.8" fill="#2a2220"/>
<circle cx="928.5" cy="382.1" r="2.8" fill="#807060"/>
<circle cx="920.9" cy="402.8" r="2.8" fill="#d8c8a8"/>
<circle cx="1021.6" cy="389.0" r="2.8" fill="#664a40"/>
<circle cx="980.3" cy="402.6" r="2.8" fill="#787870"/>
<circle cx="941.0" cy="398.0" r="2.8" fill="#807060"/>
<circle cx="1034.8" cy="394.0" r="2.8" fill="#a07050"/>
<circle cx="1049.1" cy="450.7" r="2.8" fill="#8c6450"/>
<circle cx="937.2" cy="392.3" r="2.8" fill="#241c18"/>
<circle cx="1075.4" cy="441.5" r="2.8" fill="#0a0a0a"/>
<circle cx="960.9" cy="416.7" r="2.8" fill="#a8a090"/>
<circle cx="1040.2" cy="399.2" r="2.8" fill="#4e342a"/>
<circle cx="968.1" cy="388.7" r="2.8" fill="#84604e"/>
<circle cx="1040.2" cy="389.3" r="2.8" fill="#6a4638"/>
<circle cx="921.0" cy="409.2" r="2.8" fill="#8a5e4a"/>
<circle cx="1041.9" cy="380.7" r="2.8" fill="#84604e"/>
<circle cx="1042.0" cy="411.4" r="2.8" fill="#6a4638"/>
<circle cx="987.4" cy="388.8" r="2.8" fill="#7a5444"/>
<circle cx="987.8" cy="408.4" r="2.8" fill="#7a5444"/>
<circle cx="932.4" cy="430.5" r="2.8" fill="#c0a888"/>
<circle cx="948.3" cy="427.9" r="2.8" fill="#787870"/>
<circle cx="948.0" cy="387.0" r="2.8" fill="#2a2220"/>
<circle cx="1011.0" cy="382.2" r="2.8" fill="#8a5e4a"/>
<circle cx="1023.6" cy="398.3" r="2.8" fill="#a07050"/>
<circle cx="992.8" cy="393.9" r="2.8" fill="#5e3e30"/>
<circle cx="1068.0" cy="386.8" r="2.8" fill="#a07050"/>
<circle cx="1086.5" cy="428.8" r="2.8" fill="#664a40"/>
<circle cx="1000.4" cy="430.7" r="2.8" fill="#5e3e30"/>
<circle cx="1042.7" cy="441.0" r="2.8" fill="#7a5444"/>
<circle cx="1074.4" cy="396.0" r="2.8" fill="#5a3828"/>
<circle cx="1070.2" cy="454.9" r="2.8" fill="#5a3828"/>
<circle cx="976.3" cy="396.5" r="2.8" fill="#70483a"/>
<circle cx="1072.1" cy="427.6" r="2.8" fill="#7e5846"/>
<circle cx="1007.4" cy="412.5" r="2.8" fill="#6a4638"/>
<circle cx="1075.5" cy="388.5" r="2.8" fill="#5a3828"/>
<circle cx="974.6" cy="397.4" r="2.8" fill="#8a6656"/>
<circle cx="983.7" cy="422.9" r="2.8" fill="#70483a"/>
<circle cx="1011.1" cy="415.4" r="2.8" fill="#100c0a"/>
<circle cx="962.8" cy="408.9" r="2.8" fill="#d8c8a8"/>
<circle cx="1062.2" cy="455.8" r="2.8" fill="#a07050"/>
<circle cx="1072.5" cy="389.7" r="2.8" fill="#84604e"/>
<circle cx="994.8" cy="432.5" r="2.8" fill="#8c6450"/>
<circle cx="920.8" cy="421.0" r="2.8" fill="#a89880"/>
<circle cx="1026.7" cy="391.2" r="2.8" fill="#7a5444"/>
<circle cx="1000.6" cy="393.2" r="2.8" fill="#4e342a"/>
<circle cx="973.6" cy="383.9" r="2.8" fill="#d8c8a8"/>
<circle cx="1048.2" cy="449.6" r="2.8" fill="#70483a"/>
<circle cx="938.9" cy="387.4" r="2.8" fill="#a8a090"/>
<circle cx="1008.8" cy="414.3" r="2.8" fill="#0a0a0a"/>
<circle cx="972.9" cy="431.0" r="2.8" fill="#241c18"/>
<circle cx="1026.2" cy="424.1" r="2.8" fill="#8a5e4a"/>
<circle cx="921.5" cy="393.4" r="2.8" fill="#5a3828"/>
<circle cx="937.9" cy="425.5" r="2.8" fill="#787870"/>
<circle cx="1063.0" cy="440.7" r="2.8" fill="#4a3a30"/>
<circle cx="960.3" cy="436.3" r="2.8" fill="#807060"/>
<circle cx="1040.3" cy="446.3" r="2.8" fill="#b09060"/>
<circle cx="1064.7" cy="389.5" r="2.8" fill="#96684c"/>
<circle cx="1031.6" cy="415.5" r="2.8" fill="#96684c"/>
<circle cx="992.4" cy="416.8" r="2.8" fill="#6a6860"/>
<circle cx="1024.7" cy="387.2" r="2.8" fill="#70483a"/>
<circle cx="1009.3" cy="426.3" r="2.8" fill="#7e5846"/>
<circle cx="950.9" cy="382.7" r="2.8" fill="#100c0a"/>
<circle cx="1056.2" cy="387.2" r="2.8" fill="#4a3a30"/>
<circle cx="953.0" cy="425.4" r="2.8" fill="#a89880"/>
<circle cx="1066.7" cy="431.8" r="2.8" fill="#70483a"/>
<circle cx="923.5" cy="419.3" r="2.8" fill="#5a5048"/>
<circle cx="965.6" cy="429.1" r="2.8" fill="#a07050"/>
<circle cx="1065.0" cy="412.9" r="2.8" fill="#8a6656"/>
<circle cx="954.4" cy="383.1" r="2.8" fill="#2a2220"/>
<circle cx="967.0" cy="391.8" r="2.8" fill="#7a5444"/>
<circle cx="932.6" cy="394.7" r="2.8" fill="#c0a888"/>
<circle cx="1043.2" cy="380.4" r="2.8" fill="#a8a090"/>
<circle cx="986.0" cy="425.3" r="2.8" fill="#988878"/>
<circle cx="1035.3" cy="380.5" r="2.8" fill="#70483a"/>
<circle cx="969.1" cy="436.1" r="2.8" fill="#70483a"/>
<circle cx="945.9" cy="385.0" r="2.8" fill="#5a3828"/>
<circle cx="1042.0" cy="452.5" r="2.8" fill="#a07050"/>
<circle cx="964.3" cy="402.4" r="2.8" fill="#a8a090"/>
<circle cx="927.6" cy="410.2" r="2.8" fill="#96684c"/>
<circle cx="1037.5" cy="383.0" r="2.8" fill="#4a3a30"/>
<circle cx="942.9" cy="401.9" r="2.8" fill="#2a2220"/>
<circle cx="956.7" cy="382.8" r="2.8" fill="#c8b89a"/>
<circle cx="923.2" cy="397.0" r="2.8" fill="#241c18"/>
<circle cx="1079.2" cy="442.6" r="2.8" fill="#6a4638"/>
<circle cx="1008.0" cy="396.7" r="2.8" fill="#a07050"/>
<circle cx="1077.6" cy="409.1" r="2.8" fill="#6a4638"/>
<circle cx="1064.7" cy="385.0" r="2.8" fill="#664a40"/>
<circle cx="962.3" cy="429.8" r="2.8" fill="#787870"/>
<circle cx="1030.3" cy="445.4" r="2.8" fill="#8c6450"/>
<circle cx="1031.1" cy="424.7" r="2.8" fill="#7e5846"/>
<circle cx="1081.4" cy="432.8" r="2.8" fill="#d8c8a8"/>
<circle cx="939.3" cy="405.4" r="2.8" fill="#70483a"/>
<circle cx="943.9" cy="424.3" r="2.8" fill="#786058"/>
<circle cx="1045.2" cy="423.1" r="2.8" fill="#a07050"/>
<circle cx="920.5" cy="405.3" r="2.8" fill="#d8c8a8"/>
<circle cx="936.3" cy="406.6" r="2.8" fill="#d8c8a8"/>
<circle cx="918.7" cy="389.9" r="2.8" fill="#4e342a"/>
<circle cx="933.7" cy="407.8" r="2.8" fill="#807060"/>
<circle cx="968.0" cy="424.9" r="2.8" fill="#241c18"/>
<circle cx="940.4" cy="409.9" r="2.8" fill="#d8c8a8"/>
<circle cx="942.2" cy="424.5" r="2.8" fill="#d8c8a8"/>
<circle cx="1043.9" cy="397.0" r="2.8" fill="#8a6656"/>
<circle cx="1055.5" cy="429.9" r="2.8" fill="#7e5846"/>
<circle cx="1036.9" cy="409.3" r="2.8" fill="#a07050"/>
<circle cx="938.6" cy="409.7" r="2.8" fill="#181410"/>
<circle cx="1001.1" cy="395.6" r="2.8" fill="#a07050"/>
<circle cx="962.9" cy="423.6" r="2.8" fill="#786058"/>
<circle cx="994.7" cy="389.9" r="2.8" fill="#70483a"/>
<circle cx="1027.4" cy="410.9" r="2.8" fill="#6a6860"/>
<circle cx="1009.3" cy="395.7" r="2.8" fill="#8a5e4a"/>
<circle cx="1044.0" cy="417.7" r="2.8" fill="#4a3a30"/>
<circle cx="999.1" cy="411.9" r="2.8" fill="#5e3e30"/>
<circle cx="952.3" cy="434.3" r="2.8" fill="#787870"/>
<circle cx="944.4" cy="425.1" r="2.8" fill="#c0a888"/>
<circle cx="952.1" cy="395.0" r="2.8" fill="#8a5e4a"/>
<circle cx="955.6" cy="425.7" r="2.8" fill="#2a2220"/>
<circle cx="1063.2" cy="386.1" r="2.8" fill="#4a3a30"/>
<circle cx="1046.6" cy="447.4" r="2.8" fill="#8c6450"/>
<circle cx="1060.3" cy="395.6" r="2.8" fill="#100c0a"/>
<circle cx="1054.1" cy="409.8" r="2.8" fill="#8c6450"/>
<circle cx="929.1" cy="429.4" r="2.8" fill="#241c18"/>
<circle cx="1036.0" cy="418.4" r="2.8" fill="#5e3e30"/>
<circle cx="1004.3" cy="444.5" r="2.8" fill="#7e5846"/>
<circle cx="1040.5" cy="429.7" r="2.8" fill="#787870"/>
<circle cx="1077.3" cy="417.9" r="2.8" fill="#84604e"/>
<circle cx="935.6" cy="420.3" r="2.8" fill="#807060"/>
<circle cx="1046.2" cy="386.5" r="2.8" fill="#8a6656"/>
<circle cx="1026.0" cy="410.5" r="2.8" fill="#6a4638"/>
<circle cx="944.9" cy="426.4" r="2.8" fill="#c0a888"/>
<circle cx="928.1" cy="391.1" r="2.8" fill="#2a2220"/>
<circle cx="933.0" cy="398.3" r="2.8" fill="#786058"/>
<circle cx="937.3" cy="407.7" r="2.8" fill="#988070"/>
<circle cx="977.5" cy="385.9" r="2.8" fill="#988878"/>
<circle cx="943.8" cy="417.3" r="2.8" fill="#5e3e30"/>
<circle cx="947.7" cy="394.5" r="2.8" fill="#c8b89a"/>
<circle cx="1073.4" cy="438.3" r="2.8" fill="#8a5e4a"/>
<circle cx="1002.7" cy="438.0" r="2.8" fill="#96684c"/>
<circle cx="1056.9" cy="385.9" r="2.8" fill="#70483a"/>
<circle cx="955.6" cy="387.2" r="2.8" fill="#988878"/>
<circle cx="1054.7" cy="409.4" r="2.8" fill="#5e3e30"/>
<circle cx="993.4" cy="387.9" r="2.8" fill="#664a40"/>
<circle cx="975.7" cy="432.1" r="2.8" fill="#a07050"/>
<circle cx="951.1" cy="413.1" r="2.8" fill="#100c0a"/>
<circle cx="958.2" cy="425.8" r="2.8" fill="#8a8478"/>
<circle cx="1022.8" cy="417.7" r="2.8" fill="#b8a890"/>
<circle cx="1000.7" cy="442.7" r="2.8" fill="#5a3828"/>
<circle cx="959.1" cy="397.9" r="2.8" fill="#a8a090"/>
<circle cx="1074.9" cy="417.7" r="2.8" fill="#84604e"/>
<circle cx="1088.4" cy="383.5" r="2.8" fill="#8c6450"/>
<circle cx="966.7" cy="383.4" r="2.8" fill="#84604e"/>
<circle cx="1080.3" cy="438.9" r="2.8" fill="#84604e"/>
<circle cx="977.3" cy="413.5" r="2.8" fill="#8a8478"/>
<circle cx="952.6" cy="420.5" r="2.8" fill="#907868"/>
<circle cx="983.1" cy="412.0" r="2.8" fill="#70483a"/>
<circle cx="965.7" cy="401.7" r="2.8" fill="#5a3828"/>
<circle cx="1043.6" cy="417.7" r="2.8" fill="#84604e"/>
<circle cx="1000.2" cy="388.8" r="2.8" fill="#96684c"/>
<circle cx="1008.8" cy="403.5" r="2.8" fill="#8a6656"/>
<circle cx="967.0" cy="404.2" r="2.8" fill="#84604e"/>
<circle cx="1016.9" cy="447.6" r="2.8" fill="#d8c8a8"/>
<circle cx="969.1" cy="410.6" r="2.8" fill="#7a5444"/>
<circle cx="1016.7" cy="433.1" r="2.8" fill="#6a4638"/>
<circle cx="1024.1" cy="415.6" r="2.8" fill="#70483a"/>
<circle cx="1075.4" cy="397.0" r="2.8" fill="#5a3828"/>
<circle cx="919.3" cy="402.8" r="2.8" fill="#4a3a30"/>
<circle cx="1091.7" cy="452.9" r="2.8" fill="#8a5e4a"/>
<circle cx="964.9" cy="427.6" r="2.8" fill="#6a4638"/>
<circle cx="1004.2" cy="440.1" r="2.8" fill="#6a4638"/>
<circle cx="949.4" cy="399.1" r="2.8" fill="#241c18"/>
<circle cx="1027.8" cy="450.0" r="2.8" fill="#8a6656"/>
<circle cx="927.2" cy="402.9" r="2.8" fill="#c8b89a"/>
<circle cx="1054.1" cy="443.1" r="2.8" fill="#4e342a"/>
<circle cx="923.4" cy="397.0" r="2.8" fill="#d8c8a8"/>
<circle cx="934.8" cy="419.6" r="2.8" fill="#988070"/>
<circle cx="987.7" cy="400.3" r="2.8" fill="#84604e"/>
<circle cx="1030.7" cy="419.8" r="2.8" fill="#8c6450"/>
<circle cx="991.7" cy="420.6" r="2.8" fill="#4e342a"/>
<circle cx="1072.2" cy="400.3" r="2.8" fill="#7a5444"/>
<circle cx="942.6" cy="412.5" r="2.8" fill="#c8b89a"/>
<circle cx="1075.0" cy="425.5" r="2.8" fill="#8a6656"/>
<circle cx="1039.7" cy="407.1" r="2.8" fill="#84604e"/>
<circle cx="989.0" cy="402.0" r="2.8" fill="#7a5444"/>
<circle cx="945.7" cy="421.2" r="2.8" fill="#241c18"/>
<circle cx="1017.2" cy="431.1" r="2.8" fill="#6a4638"/>
<circle cx="970.2" cy="424.2" r="2.8" fill="#181410"/>
<circle cx="960.6" cy="389.9" r="2.8" fill="#988070"/>
<circle cx="1042.8" cy="438.7" r="2.8" fill="#664a40"/>
<circle cx="963.0" cy="383.5" r="2.8" fill="#7e5846"/>
<circle cx="972.9" cy="401.7" r="2.8" fill="#988070"/>
<circle cx="1019.4" cy="402.7" r="2.8" fill="#70483a"/>
<circle cx="1047.3" cy="381.2" r="2.8" fill="#70483a"/>
<circle cx="1006.8" cy="395.6" r="2.8" fill="#664a40"/>
<circle cx="1069.5" cy="408.7" r="2.8" fill="#96684c"/>
<circle cx="1058.6" cy="386.9" r="2.8" fill="#664a40"/>
<circle cx="1064.7" cy="407.5" r="2.8" fill="#70483a"/>
<circle cx="988.8" cy="426.2" r="2.8" fill="#786058"/>
<circle cx="1006.9" cy="398.0" r="2.8" fill="#84604e"/>
<circle cx="933.1" cy="423.7" r="2.8" fill="#2a2220"/>
<circle cx="1010.7" cy="432.3" r="2.8" fill="#a89880"/>
<circle cx="928.2" cy="383.0" r="2.8" fill="#84604e"/>
<circle cx="947.3" cy="397.4" r="2.8" fill="#5a5048"/>
<circle cx="993.0" cy="386.2" r="2.8" fill="#4a3a30"/>
<circle cx="974.9" cy="416.9" r="2.8" fill="#181410"/>
<circle cx="976.5" cy="427.0" r="2.8" fill="#d8c8a8"/>
<circle cx="1043.2" cy="389.6" r="2.8" fill="#8a5e4a"/>
<circle cx="956.1" cy="410.5" r="2.8" fill="#a8a090"/>
<circle cx="1017.3" cy="423.2" r="2.8" fill="#786058"/>
<circle cx="952.4" cy="428.7" r="2.8" fill="#70483a"/>
<circle cx="968.0" cy="428.5" r="2.8" fill="#70483a"/>
<circle cx="1031.4" cy="404.9" r="2.8" fill="#84604e"/>
<circle cx="1021.2" cy="418.5" r="2.8" fill="#8c6450"/>
<circle cx="965.8" cy="425.7" r="2.8" fill="#4a3a30"/>
<circle cx="1005.1" cy="445.7" r="2.8" fill="#4e342a"/>
<circle cx="1013.3" cy="397.2" r="2.8" fill="#807060"/>
<circle cx="970.7" cy="422.3" r="2.8" fill="#5e3e30"/>
<circle cx="921.0" cy="395.4" r="2.8" fill="#96684c"/>
<circle cx="935.3" cy="385.5" r="2.8" fill="#c0a888"/>
<circle cx="1025.4" cy="399.5" r="2.8" fill="#d8c8a8"/>
<circle cx="963.7" cy="400.7" r="2.8" fill="#988878"/>
<circle cx="1071.7" cy="396.1" r="2.8" fill="#7e5846"/>
<circle cx="993.3" cy="419.1" r="2.8" fill="#70483a"/>
<circle cx="1029.1" cy="418.7" r="2.8" fill="#4a3a30"/>
<circle cx="943.4" cy="422.2" r="2.8" fill="#5a5048"/>
<circle cx="1065.6" cy="453.9" r="2.8" fill="#d8c8a8"/>
<circle cx="1059.9" cy="401.8" r="2.8" fill="#241c18"/>
<circle cx="1060.5" cy="407.9" r="2.8" fill="#8a5e4a"/>
<circle cx="1051.5" cy="421.6" r="2.8" fill="#7e5846"/>
<circle cx="981.3" cy="420.1" r="2.8" fill="#a07050"/>
<circle cx="925.7" cy="428.4" r="2.8" fill="#100c0a"/>
<circle cx="947.9" cy="389.4" r="2.8" fill="#70483a"/>
<circle cx="1048.9" cy="441.8" r="2.8" fill="#4e342a"/>
<circle cx="947.9" cy="428.5" r="2.8" fill="#8a5e4a"/>
<circle cx="968.5" cy="412.7" r="2.8" fill="#a07050"/>
<circle cx="1017.4" cy="421.9" r="2.8" fill="#8c6450"/>
<circle cx="942.6" cy="418.6" r="2.8" fill="#988070"/>
<circle cx="996.1" cy="420.2" r="2.8" fill="#4e342a"/>
<circle cx="971.8" cy="437.0" r="2.8" fill="#807060"/>
<circle cx="1001.1" cy="424.6" r="2.8" fill="#4e342a"/>
<circle cx="994.8" cy="420.1" r="2.8" fill="#6a4638"/>
<circle cx="997.4" cy="392.7" r="2.8" fill="#5a3828"/>
<circle cx="1045.2" cy="427.4" r="2.8" fill="#8a8478"/>
<circle cx="992.0" cy="381.6" r="2.8" fill="#5a3828"/>
<circle cx="998.0" cy="402.0" r="2.8" fill="#4a3a30"/>
<circle cx="961.1" cy="395.8" r="2.8" fill="#d8c8a8"/>
<circle cx="1091.9" cy="413.0" r="2.8" fill="#7a5444"/>
<circle cx="1076.0" cy="438.3" r="2.8" fill="#786058"/>
<circle cx="1063.2" cy="411.3" r="2.8" fill="#787870"/>
<circle cx="921.3" cy="392.2" r="2.8" fill="#c0a888"/>
<circle cx="972.7" cy="429.2" r="2.8" fill="#4e342a"/>
<circle cx="935.7" cy="409.3" r="2.8" fill="#8a8478"/>
<circle cx="923.8" cy="393.5" r="2.8" fill="#5a5048"/>
<circle cx="966.9" cy="410.7" r="2.8" fill="#84604e"/>
<circle cx="928.0" cy="395.8" r="2.8" fill="#5a5048"/>
<circle cx="934.3" cy="430.9" r="2.8" fill="#787870"/>
<circle cx="971.7" cy="414.4" r="2.8" fill="#100c0a"/>
<circle cx="1089.4" cy="439.3" r="2.8" fill="#7a5444"/>
<circle cx="1086.6" cy="411.9" r="2.8" fill="#0a0a0a"/>
<circle cx="1059.0" cy="382.4" r="2.8" fill="#84604e"/>
<circle cx="1090.1" cy="426.9" r="2.8" fill="#d8c8a8"/>
<circle cx="996.6" cy="416.9" r="2.8" fill="#7e5846"/>
<circle cx="938.8" cy="388.6" r="2.8" fill="#a89880"/>
<circle cx="967.3" cy="400.6" r="2.8" fill="#c8b89a"/>
<circle cx="1057.4" cy="427.9" r="2.8" fill="#6a4638"/>
<circle cx="1019.3" cy="447.3" r="2.8" fill="#988070"/>
<circle cx="1043.9" cy="382.5" r="2.8" fill="#a07050"/>
<circle cx="1057.5" cy="443.8" r="2.8" fill="#8c6450"/>
<circle cx="944.1" cy="404.5" r="2.8" fill="#181410"/>
<circle cx="960.2" cy="436.7" r="2.8" fill="#0a0a0a"/>
<circle cx="1032.0" cy="432.3" r="2.8" fill="#84604e"/>
<circle cx="942.2" cy="405.5" r="2.8" fill="#907868"/>
<circle cx="960.6" cy="433.9" r="2.8" fill="#8a8478"/>
<circle cx="1073.9" cy="439.8" r="2.8" fill="#70483a"/>
<circle cx="1044.3" cy="380.7" r="2.8" fill="#7a5444"/>
<circle cx="1058.9" cy="427.5" r="2.8" fill="#5a3828"/>
<circle cx="1022.7" cy="401.0" r="2.8" fill="#4e342a"/>
<circle cx="1065.5" cy="398.8" r="2.8" fill="#4e342a"/>
<circle cx="1076.7" cy="420.2" r="2.8" fill="#787870"/>
<circle cx="998.5" cy="440.8" r="2.8" fill="#6a4638"/>
<circle cx="987.0" cy="394.2" r="2.8" fill="#7a5444"/>
<circle cx="928.7" cy="425.8" r="2.8" fill="#786058"/>
<circle cx="944.9" cy="415.5" r="2.8" fill="#100c0a"/>
<circle cx="1049.7" cy="413.8" r="2.8" fill="#7a5444"/>
<circle cx="1009.3" cy="407.7" r="2.8" fill="#96684c"/>
<circle cx="956.1" cy="397.0" r="2.8" fill="#988070"/>
<circle cx="942.0" cy="413.4" r="2.8" fill="#6a4638"/>
<circle cx="1007.1" cy="422.5" r="2.8" fill="#786058"/>
<circle cx="958.2" cy="418.1" r="2.8" fill="#c0a888"/>
<circle cx="954.6" cy="404.0" r="2.8" fill="#807060"/>
<circle cx="965.5" cy="430.5" r="2.8" fill="#8a6656"/>
<circle cx="996.2" cy="440.7" r="2.8" fill="#4a3a30"/>
<circle cx="979.2" cy="409.1" r="2.8" fill="#787870"/>
<circle cx="1047.2" cy="388.7" r="2.8" fill="#84604e"/>
<circle cx="955.3" cy="416.2" r="2.8" fill="#0a0a0a"/>
<circle cx="1043.9" cy="381.1" r="2.8" fill="#2a2220"/>
<circle cx="1004.5" cy="406.3" r="2.8" fill="#4e342a"/>
<circle cx="1024.1" cy="393.0" r="2.8" fill="#4a3a30"/>
<circle cx="931.4" cy="404.0" r="2.8" fill="#c8b89a"/>
<circle cx="937.4" cy="406.6" r="2.8" fill="#8a6656"/>
<circle cx="997.1" cy="402.3" r="2.8" fill="#8a6656"/>
<circle cx="1075.5" cy="448.0" r="2.8" fill="#a07050"/>
<circle cx="1062.2" cy="442.9" r="2.8" fill="#84604e"/>
<circle cx="1010.8" cy="427.3" r="2.8" fill="#a07050"/>
<circle cx="1068.6" cy="390.7" r="2.8" fill="#8c6450"/>
<circle cx="1012.3" cy="426.7" r="2.8" fill="#664a40"/>
<circle cx="1067.7" cy="389.7" r="2.8" fill="#7a5444"/>
<circle cx="936.4" cy="425.0" r="2.8" fill="#664a40"/>
<circle cx="1059.3" cy="400.0" r="2.8" fill="#c0a888"/>
<circle cx="936.3" cy="388.6" r="2.8" fill="#787870"/>
<circle cx="984.2" cy="408.5" r="2.8" fill="#4a3a30"/>
<circle cx="1064.6" cy="425.3" r="2.8" fill="#7e5846"/>
<circle cx="1035.6" cy="421.4" r="2.8" fill="#5e3e30"/>
<circle cx="983.5" cy="382.9" r="2.8" fill="#a07050"/>
<circle cx="1047.8" cy="435.0" r="2.8" fill="#8a6656"/>
<circle cx="1024.4" cy="449.5" r="2.8" fill="#8c6450"/>
<circle cx="988.1" cy="396.9" r="2.8" fill="#2a2220"/>
<circle cx="1036.9" cy="385.6" r="2.8" fill="#8a6656"/>
<circle cx="1078.2" cy="440.0" r="2.8" fill="#6a6860"/>
<circle cx="1035.1" cy="446.4" r="2.8" fill="#6a4638"/>
<circle cx="973.7" cy="402.6" r="2.8" fill="#4a3a30"/>
<circle cx="1079.1" cy="452.2" r="2.8" fill="#b09060"/>
<circle cx="972.3" cy="414.4" r="2.8" fill="#a8a090"/>
<circle cx="1077.0" cy="444.7" r="2.8" fill="#70483a"/>
<circle cx="962.0" cy="382.5" r="2.8" fill="#b8a890"/>
<circle cx="1050.0" cy="442.4" r="2.8" fill="#5a3828"/>
<circle cx="1064.7" cy="439.8" r="2.8" fill="#6a4638"/>
<circle cx="1057.0" cy="416.2" r="2.8" fill="#7e5846"/>
<circle cx="947.5" cy="406.7" r="2.8" fill="#907868"/>
<circle cx="954.5" cy="383.3" r="2.8" fill="#4a3a30"/>
<circle cx="1025.8" cy="390.0" r="2.8" fill="#8a6656"/>
<circle cx="989.4" cy="408.5" r="2.8" fill="#7a5444"/>
<circle cx="974.1" cy="423.6" r="2.8" fill="#b8a890"/>
<circle cx="942.7" cy="408.4" r="2.8" fill="#84604e"/>
<circle cx="990.4" cy="398.2" r="2.8" fill="#7e5846"/>
<circle cx="1006.3" cy="401.9" r="2.8" fill="#5a3828"/>
<circle cx="1070.6" cy="415.3" r="2.8" fill="#8c6450"/>
<circle cx="970.4" cy="407.9" r="2.8" fill="#70483a"/>
<circle cx="964.6" cy="425.9" r="2.8" fill="#7a5444"/>
<circle cx="1008.4" cy="411.3" r="2.8" fill="#5e3e30"/>
<circle cx="1052.4" cy="414.4" r="2.8" fill="#6a4638"/>
<circle cx="1002.8" cy="422.3" r="2.8" fill="#70483a"/>
<circle cx="963.9" cy="422.0" r="2.8" fill="#7a5444"/>
<circle cx="1014.7" cy="421.1" r="2.8" fill="#84604e"/>
<circle cx="965.7" cy="383.8" r="2.8" fill="#6a4638"/>
<circle cx="1036.9" cy="430.3" r="2.8" fill="#988070"/>
<circle cx="960.0" cy="381.9" r="2.8" fill="#787870"/>
<circle cx="936.3" cy="413.8" r="2.8" fill="#5a5048"/>
<circle cx="949.5" cy="407.2" r="2.8" fill="#d8c8a8"/>
<circle cx="1058.9" cy="399.4" r="2.8" fill="#7a5444"/>
<circle cx="1082.1" cy="455.1" r="2.8" fill="#8a7a68"/>
<circle cx="956.7" cy="431.4" r="2.8" fill="#5a5048"/>
<circle cx="980.0" cy="394.0" r="2.8" fill="#8c6450"/>
<circle cx="1039.4" cy="381.1" r="2.8" fill="#2a2220"/>
<circle cx="929.6" cy="399.0" r="2.8" fill="#8a8478"/>
<circle cx="1007.4" cy="391.5" r="2.8" fill="#a07050"/>
<circle cx="942.3" cy="384.2" r="2.8" fill="#100c0a"/>
<circle cx="1069.9" cy="456.0" r="2.8" fill="#a88858"/>
<circle cx="1038.9" cy="392.9" r="2.8" fill="#988070"/>
<circle cx="953.5" cy="405.9" r="2.8" fill="#70483a"/>
<circle cx="957.1" cy="430.2" r="2.8" fill="#4a3a30"/>
<circle cx="970.0" cy="433.2" r="2.8" fill="#d8c8a8"/>
<circle cx="1026.1" cy="439.6" r="2.8" fill="#5e3e30"/>
<circle cx="1004.4" cy="416.5" r="2.8" fill="#6a4638"/>
<circle cx="1029.8" cy="398.1" r="2.8" fill="#6a4638"/>
<circle cx="956.1" cy="384.7" r="2.8" fill="#5e3e30"/>
<circle cx="971.2" cy="408.9" r="2.8" fill="#664a40"/>
<circle cx="945.3" cy="433.2" r="2.8" fill="#664a40"/>
<circle cx="972.6" cy="418.5" r="2.8" fill="#84604e"/>
<circle cx="919.5" cy="412.0" r="2.8" fill="#a07050"/>
<circle cx="958.2" cy="413.9" r="2.8" fill="#907868"/>
<circle cx="1076.0" cy="399.2" r="2.8" fill="#7e5846"/>
<circle cx="1054.4" cy="425.9" r="2.8" fill="#84604e"/>
<circle cx="932.3" cy="384.0" r="2.8" fill="#a07050"/>
<circle cx="944.6" cy="396.4" r="2.8" fill="#988070"/>
<circle cx="977.8" cy="437.3" r="2.8" fill="#b8a890"/>
<circle cx="997.1" cy="412.8" r="2.8" fill="#4e342a"/>
<circle cx="995.4" cy="443.4" r="2.8" fill="#8a6656"/>
<circle cx="921.2" cy="384.5" r="2.8" fill="#181410"/>
<circle cx="951.9" cy="400.5" r="2.8" fill="#96684c"/>
<circle cx="1037.3" cy="444.6" r="2.8" fill="#7e5846"/>
<circle cx="1027.9" cy="390.2" r="2.8" fill="#84604e"/>
<circle cx="1035.5" cy="440.1" r="2.8" fill="#7e5846"/>
<circle cx="969.3" cy="435.7" r="2.8" fill="#8a5e4a"/>
<circle cx="1025.7" cy="391.9" r="2.8" fill="#5a3828"/>
<circle cx="1041.7" cy="402.6" r="2.8" fill="#100c0a"/>
<circle cx="1005.1" cy="414.8" r="2.8" fill="#a07050"/>
<circle cx="1031.2" cy="433.9" r="2.8" fill="#7e5846"/>
<circle cx="1044.2" cy="443.8" r="2.8" fill="#8a6656"/>
<circle cx="1036.8" cy="401.7" r="2.8" fill="#5e3e30"/>
<circle cx="934.6" cy="400.5" r="2.8" fill="#988878"/>
<circle cx="987.8" cy="411.8" r="2.8" fill="#8a8478"/>
<circle cx="1027.8" cy="428.0" r="2.8" fill="#7a5444"/>
<circle cx="1081.3" cy="449.1" r="2.8" fill="#786058"/>
<circle cx="1034.0" cy="420.9" r="2.8" fill="#70483a"/>
<circle cx="1009.3" cy="414.4" r="2.8" fill="#5e3e30"/>
<circle cx="1029.1" cy="406.0" r="2.8" fill="#a89880"/>
<circle cx="961.4" cy="405.3" r="2.8" fill="#5a5048"/>
<circle cx="1065.4" cy="380.4" r="2.8" fill="#8a5e4a"/>
<circle cx="1026.9" cy="441.3" r="2.8" fill="#4a3a30"/>
<circle cx="1006.4" cy="395.4" r="2.8" fill="#84604e"/>
<circle cx="1053.9" cy="439.0" r="2.8" fill="#7a5444"/>
<circle cx="1070.6" cy="398.3" r="2.8" fill="#5e3e30"/>
<circle cx="932.6" cy="395.6" r="2.8" fill="#786058"/>
<circle cx="1060.4" cy="420.4" r="2.8" fill="#4e342a"/>
<circle cx="946.1" cy="392.6" r="2.8" fill="#988070"/>
<circle cx="1026.4" cy="406.3" r="2.8" fill="#c0a888"/>
<circle cx="1030.4" cy="385.4" r="2.8" fill="#786058"/>
<circle cx="992.8" cy="414.4" r="2.8" fill="#84604e"/>
<circle cx="1007.9" cy="442.4" r="2.8" fill="#4a3a30"/>
<circle cx="1068.6" cy="399.1" r="2.8" fill="#786058"/>
<circle cx="988.8" cy="388.9" r="2.8" fill="#70483a"/>
<circle cx="977.0" cy="385.1" r="2.8" fill="#8a5e4a"/>
<circle cx="924.7" cy="411.5" r="2.8" fill="#2a2220"/>
<circle cx="1057.5" cy="406.5" r="2.8" fill="#6a4638"/>
<circle cx="1037.7" cy="407.7" r="2.8" fill="#84604e"/>
<circle cx="945.4" cy="418.5" r="2.8" fill="#181410"/>
<circle cx="1034.0" cy="414.8" r="2.8" fill="#84604e"/>
<circle cx="923.5" cy="416.4" r="2.8" fill="#8a8478"/>
<circle cx="1060.3" cy="440.2" r="2.8" fill="#5e3e30"/>
<circle cx="952.7" cy="431.5" r="2.8" fill="#8c6450"/>
<circle cx="1070.6" cy="382.4" r="2.8" fill="#8c6450"/>
<circle cx="989.2" cy="416.1" r="2.8" fill="#a89880"/>
<circle cx="1008.6" cy="390.1" r="2.8" fill="#5a3828"/>
<circle cx="979.9" cy="405.0" r="2.8" fill="#5a5048"/>
<circle cx="1059.7" cy="421.3" r="2.8" fill="#8a5e4a"/>
<circle cx="1037.8" cy="447.3" r="2.8" fill="#5e3e30"/>
<circle cx="1020.9" cy="390.2" r="2.8" fill="#7e5846"/>
<circle cx="932.5" cy="417.7" r="2.8" fill="#2a2220"/>
<circle cx="1065.5" cy="403.7" r="2.8" fill="#96684c"/>
<circle cx="1040.0" cy="412.8" r="2.8" fill="#4e342a"/>
<circle cx="1041.5" cy="406.4" r="2.8" fill="#96684c"/>
<circle cx="998.7" cy="417.2" r="2.8" fill="#181410"/>
<circle cx="1061.2" cy="382.8" r="2.8" fill="#8a5e4a"/>
<circle cx="952.1" cy="425.4" r="2.8" fill="#907868"/>
<circle cx="947.2" cy="426.5" r="2.8" fill="#8a8478"/>
<circle cx="946.3" cy="432.4" r="2.8" fill="#8a6656"/>
<circle cx="989.5" cy="440.9" r="2.8" fill="#786058"/>
<circle cx="1078.1" cy="425.0" r="2.8" fill="#7a5444"/>
<circle cx="1008.6" cy="396.9" r="2.8" fill="#786058"/>
<circle cx="941.4" cy="384.1" r="2.8" fill="#8a5e4a"/>
<circle cx="1016.0" cy="404.9" r="2.8" fill="#7e5846"/>
<circle cx="1069.7" cy="394.6" r="2.8" fill="#0a0a0a"/>
<circle cx="962.5" cy="407.4" r="2.8" fill="#241c18"/>
<circle cx="1068.9" cy="456.9" r="2.8" fill="#6a4638"/>
<circle cx="917.6" cy="391.5" r="2.8" fill="#d8c8a8"/>
<circle cx="978.3" cy="381.8" r="2.8" fill="#c8b89a"/>
<circle cx="994.6" cy="393.0" r="2.8" fill="#96684c"/>
<circle cx="1039.3" cy="408.6" r="2.8" fill="#7a5444"/>
<circle cx="1053.2" cy="450.6" r="2.8" fill="#988058"/>
<circle cx="1046.5" cy="439.1" r="2.8" fill="#5e3e30"/>
<circle cx="929.4" cy="391.2" r="2.8" fill="#787870"/>
<circle cx="981.6" cy="421.3" r="2.8" fill="#5a3828"/>
<circle cx="997.8" cy="436.2" r="2.8" fill="#8a6656"/>
<circle cx="993.2" cy="421.3" r="2.8" fill="#6a4638"/>
<circle cx="1048.9" cy="411.5" r="2.8" fill="#4a3a30"/>
<circle cx="925.2" cy="420.4" r="2.8" fill="#a8a090"/>
<circle cx="1068.6" cy="455.2" r="2.8" fill="#7a5444"/>
<circle cx="919.8" cy="388.0" r="2.8" fill="#a89880"/>
<circle cx="1071.4" cy="389.9" r="2.8" fill="#7e5846"/>
<circle cx="1084.9" cy="451.6" r="2.8" fill="#8a7a68"/>
<circle cx="1023.4" cy="401.7" r="2.8" fill="#70483a"/>
<circle cx="972.4" cy="396.4" r="2.8" fill="#664a40"/>
<circle cx="952.7" cy="397.4" r="2.8" fill="#988070"/>
<circle cx="984.6" cy="414.2" r="2.8" fill="#6a6860"/>
<circle cx="1081.3" cy="451.7" r="2.8" fill="#7a5444"/>
<circle cx="1006.3" cy="395.6" r="2.8" fill="#5e3e30"/>
<circle cx="1033.4" cy="431.2" r="2.8" fill="#786058"/>
<circle cx="947.0" cy="404.7" r="2.8" fill="#70483a"/>
<circle cx="1064.8" cy="425.5" r="2.8" fill="#8a6656"/>
<circle cx="1041.3" cy="436.2" r="2.8" fill="#8c6450"/>
<circle cx="1024.8" cy="386.5" r="2.8" fill="#907868"/>
<circle cx="946.9" cy="416.6" r="2.8" fill="#70483a"/>
<circle cx="1044.3" cy="402.9" r="2.8" fill="#96684c"/>
<circle cx="948.8" cy="429.2" r="2.8" fill="#181410"/>
<circle cx="1043.5" cy="452.1" r="2.8" fill="#241c18"/>
<circle cx="1069.2" cy="448.4" r="2.8" fill="#8a6656"/>
<circle cx="1013.3" cy="400.1" r="2.8" fill="#6a4638"/>
<circle cx="1027.1" cy="406.2" r="2.8" fill="#84604e"/>
<circle cx="988.7" cy="424.3" r="2.8" fill="#100c0a"/>
<circle cx="936.3" cy="396.5" r="2.8" fill="#c8b89a"/>
<circle cx="1037.5" cy="402.3" r="2.8" fill="#786058"/>
<circle cx="937.0" cy="429.8" r="2.8" fill="#5a5048"/>
<circle cx="947.0" cy="432.7" r="2.8" fill="#8a8478"/>
<circle cx="1069.4" cy="416.0" r="2.8" fill="#8a5e4a"/>
<circle cx="994.8" cy="431.1" r="2.8" fill="#4a3a30"/>
<circle cx="997.2" cy="381.0" r="2.8" fill="#d8c8a8"/>
<circle cx="1021.7" cy="409.9" r="2.8" fill="#0a0a0a"/>
<circle cx="922.4" cy="422.8" r="2.8" fill="#8a8478"/>
<circle cx="1006.4" cy="440.0" r="2.8" fill="#96684c"/>
<circle cx="1045.0" cy="403.5" r="2.8" fill="#a07050"/>
<circle cx="1010.2" cy="442.8" r="2.8" fill="#96684c"/>
<circle cx="1059.4" cy="397.7" r="2.8" fill="#5e3e30"/>
<circle cx="1068.0" cy="415.8" r="2.8" fill="#8a6656"/>
<circle cx="958.2" cy="413.7" r="2.8" fill="#8c6450"/>
<circle cx="1007.3" cy="419.6" r="2.8" fill="#70483a"/>
<circle cx="994.1" cy="394.9" r="2.8" fill="#8c6450"/>
<circle cx="1069.9" cy="401.9" r="2.8" fill="#4a3a30"/>
<circle cx="946.0" cy="410.0" r="2.8" fill="#807060"/>
<circle cx="934.3" cy="395.3" r="2.8" fill="#8a5e4a"/>
<circle cx="972.2" cy="385.5" r="2.8" fill="#5a3828"/>
<circle cx="995.2" cy="425.7" r="2.8" fill="#5a3828"/>
<circle cx="1038.9" cy="418.7" r="2.8" fill="#96684c"/>
<circle cx="1075.8" cy="418.7" r="2.8" fill="#84604e"/>
<circle cx="981.4" cy="434.8" r="2.8" fill="#664a40"/>
<circle cx="1047.6" cy="446.6" r="2.8" fill="#c0a070"/>
<circle cx="1084.7" cy="457.7" r="2.8" fill="#988058"/>
<circle cx="994.8" cy="394.3" r="2.8" fill="#8a5e4a"/>
<circle cx="955.9" cy="407.0" r="2.8" fill="#787870"/>
<circle cx="942.2" cy="412.6" r="2.8" fill="#241c18"/>
<circle cx="1021.0" cy="410.9" r="2.8" fill="#8c6450"/>
<circle cx="917.3" cy="383.9" r="2.8" fill="#100c0a"/>
<circle cx="1017.9" cy="430.1" r="2.8" fill="#8a6656"/>
<circle cx="1032.5" cy="387.9" r="2.8" fill="#6a4638"/>
<circle cx="941.3" cy="417.1" r="2.8" fill="#181410"/>
<circle cx="940.8" cy="407.7" r="2.8" fill="#8a8478"/>
<circle cx="964.9" cy="387.9" r="2.8" fill="#7e5846"/>
<circle cx="931.7" cy="426.1" r="2.8" fill="#6a6860"/>
<circle cx="992.3" cy="439.0" r="2.8" fill="#8c6450"/>
<circle cx="967.7" cy="401.7" r="2.8" fill="#100c0a"/>
<circle cx="1019.2" cy="405.0" r="2.8" fill="#664a40"/>
<circle cx="970.4" cy="430.4" r="2.8" fill="#100c0a"/>
<circle cx="956.1" cy="432.2" r="2.8" fill="#6a6860"/>
<circle cx="977.8" cy="436.4" r="2.8" fill="#4e342a"/>
<circle cx="963.9" cy="385.2" r="2.8" fill="#100c0a"/>
<circle cx="987.0" cy="439.4" r="2.8" fill="#8c6450"/>
<circle cx="985.2" cy="416.5" r="2.8" fill="#96684c"/>
<circle cx="941.2" cy="428.4" r="2.8" fill="#8a6656"/>
<circle cx="1062.0" cy="408.8" r="2.8" fill="#96684c"/>
<circle cx="1031.6" cy="401.5" r="2.8" fill="#7a5444"/>
<circle cx="1016.4" cy="388.1" r="2.8" fill="#786058"/>
<circle cx="1049.3" cy="450.4" r="2.8" fill="#7a5444"/>
<circle cx="1077.9" cy="447.9" r="2.8" fill="#96684c"/>
<circle cx="1036.3" cy="405.4" r="2.8" fill="#786058"/>
<circle cx="937.2" cy="390.0" r="2.8" fill="#5e3e30"/>
<circle cx="989.4" cy="415.6" r="2.8" fill="#96684c"/>
<circle cx="1016.4" cy="432.0" r="2.8" fill="#664a40"/>
<circle cx="1063.2" cy="455.4" r="2.8" fill="#7e5846"/>
<circle cx="932.9" cy="404.8" r="2.8" fill="#c0a888"/>
<circle cx="1037.7" cy="433.8" r="2.8" fill="#664a40"/>
<circle cx="1065.1" cy="398.8" r="2.8" fill="#8a6656"/>
<circle cx="949.8" cy="411.4" r="2.8" fill="#787870"/>
<circle cx="953.2" cy="404.5" r="2.8" fill="#7a5444"/>
<circle cx="1093.7" cy="448.8" r="2.8" fill="#8c6450"/>
<circle cx="1010.9" cy="397.2" r="2.8" fill="#664a40"/>
<circle cx="1028.8" cy="400.5" r="2.8" fill="#a89880"/>
<circle cx="1006.4" cy="392.8" r="2.8" fill="#5e3e30"/>
<circle cx="944.6" cy="388.2" r="2.8" fill="#8a5e4a"/>
<circle cx="1025.4" cy="398.8" r="2.8" fill="#8a6656"/>
<circle cx="974.6" cy="396.7" r="2.8" fill="#96684c"/>
<circle cx="1010.7" cy="437.2" r="2.8" fill="#5e3e30"/>
<circle cx="976.0" cy="404.7" r="2.8" fill="#241c18"/>
<circle cx="990.2" cy="443.1" r="2.8" fill="#2a2220"/>
<circle cx="929.7" cy="416.9" r="2.8" fill="#b8a890"/>
<circle cx="951.6" cy="398.3" r="2.8" fill="#c8b89a"/>
<circle cx="932.2" cy="393.5" r="2.8" fill="#181410"/>
<circle cx="974.0" cy="404.9" r="2.8" fill="#5e3e30"/>
<circle cx="1071.2" cy="450.0" r="2.8" fill="#84604e"/>
<circle cx="923.5" cy="389.7" r="2.8" fill="#241c18"/>
<circle cx="1033.9" cy="387.7" r="2.8" fill="#a07050"/>
<circle cx="1001.0" cy="433.8" r="2.8" fill="#4a3a30"/>
<circle cx="1019.6" cy="419.6" r="2.8" fill="#5e3e30"/>
<circle cx="975.2" cy="427.1" r="2.8" fill="#8c6450"/>
<circle cx="961.8" cy="413.5" r="2.8" fill="#b8a890"/>
<circle cx="994.7" cy="443.6" r="2.8" fill="#8c6450"/>
<circle cx="1061.6" cy="429.3" r="2.8" fill="#5a5048"/>
<circle cx="995.9" cy="395.3" r="2.8" fill="#4e342a"/>
<circle cx="945.2" cy="412.8" r="2.8" fill="#0a0a0a"/>
<circle cx="1064.9" cy="429.6" r="2.8" fill="#96684c"/>
<circle cx="1005.7" cy="430.8" r="2.8" fill="#a07050"/>
<circle cx="939.9" cy="412.9" r="2.8" fill="#807060"/>
<circle cx="1059.7" cy="442.3" r="2.8" fill="#70483a"/>
<circle cx="1011.8" cy="385.2" r="2.8" fill="#907868"/>
<circle cx="1001.2" cy="401.8" r="2.8" fill="#7e5846"/>
<circle cx="1045.6" cy="420.7" r="2.8" fill="#8c6450"/>
<circle cx="966.9" cy="396.4" r="2.8" fill="#0a0a0a"/>
<circle cx="970.3" cy="412.9" r="2.8" fill="#100c0a"/>
<circle cx="996.4" cy="394.0" r="2.8" fill="#d8c8a8"/>
<circle cx="1043.9" cy="433.7" r="2.8" fill="#96684c"/>
<circle cx="1072.3" cy="408.2" r="2.8" fill="#7e5846"/>
<circle cx="988.7" cy="388.9" r="2.8" fill="#4e342a"/>
<circle cx="956.6" cy="428.1" r="2.8" fill="#c0a888"/>
<circle cx="932.4" cy="421.5" r="2.8" fill="#241c18"/>
<circle cx="1011.7" cy="420.5" r="2.8" fill="#96684c"/>
<circle cx="980.7" cy="423.4" r="2.8" fill="#241c18"/>
<circle cx="981.0" cy="417.5" r="2.8" fill="#b8a890"/>
<circle cx="954.2" cy="386.4" r="2.8" fill="#988070"/>
<circle cx="980.8" cy="406.7" r="2.8" fill="#c8b89a"/>
<circle cx="1051.8" cy="422.7" r="2.8" fill="#8a6656"/>
<circle cx="993.8" cy="392.7" r="2.8" fill="#786058"/>
<circle cx="917.2" cy="386.6" r="2.8" fill="#c8b89a"/>
<circle cx="970.8" cy="408.9" r="2.8" fill="#7a5444"/>
<circle cx="1065.0" cy="442.6" r="2.8" fill="#84604e"/>
<circle cx="1041.0" cy="386.8" r="2.8" fill="#988070"/>
<circle cx="954.0" cy="400.3" r="2.8" fill="#d8c8a8"/>
<circle cx="1051.0" cy="407.3" r="2.8" fill="#4e342a"/>
<circle cx="953.1" cy="432.8" r="2.8" fill="#988070"/>
<circle cx="1070.7" cy="408.4" r="2.8" fill="#96684c"/>
<circle cx="933.4" cy="388.4" r="2.8" fill="#988070"/>
<circle cx="950.3" cy="404.0" r="2.8" fill="#6a6860"/>
<circle cx="1032.6" cy="385.8" r="2.8" fill="#7a5444"/>
<circle cx="1035.2" cy="403.5" r="2.8" fill="#664a40"/>
<circle cx="1093.6" cy="408.6" r="2.8" fill="#664a40"/>
<circle cx="1060.2" cy="444.5" r="2.8" fill="#96684c"/>
<circle cx="964.9" cy="436.4" r="2.8" fill="#84604e"/>
<circle cx="925.2" cy="422.9" r="2.8" fill="#6a6860"/>
<circle cx="947.7" cy="426.0" r="2.8" fill="#8a8478"/>
<circle cx="998.6" cy="390.8" r="2.8" fill="#2a2220"/>
<circle cx="1021.8" cy="422.8" r="2.8" fill="#4a3a30"/>
<circle cx="919.7" cy="417.5" r="2.8" fill="#d8c8a8"/>
<circle cx="959.6" cy="395.3" r="2.8" fill="#907868"/>
<circle cx="986.7" cy="387.7" r="2.8" fill="#5a3828"/>
<circle cx="1047.0" cy="427.4" r="2.8" fill="#4e342a"/>
<circle cx="926.5" cy="410.6" r="2.8" fill="#807060"/>
<circle cx="978.4" cy="385.5" r="2.8" fill="#786058"/>
<circle cx="976.4" cy="386.5" r="2.8" fill="#96684c"/>
<circle cx="924.5" cy="383.7" r="2.8" fill="#988070"/>
<circle cx="1033.9" cy="398.3" r="2.8" fill="#a07050"/>
<circle cx="989.2" cy="414.2" r="2.8" fill="#4a3a30"/>
<circle cx="975.9" cy="403.8" r="2.8" fill="#7e5846"/>
<circle cx="959.9" cy="393.1" r="2.8" fill="#a8a090"/>
<circle cx="998.4" cy="401.3" r="2.8" fill="#5e3e30"/>
<circle cx="1040.8" cy="452.3" r="2.8" fill="#c0a070"/>
<circle cx="1093.3" cy="444.6" r="2.8" fill="#8a6656"/>
<circle cx="1078.8" cy="417.3" r="2.8" fill="#6a4638"/>
<circle cx="999.7" cy="402.7" r="2.8" fill="#7e5846"/>
<circle cx="1006.1" cy="442.0" r="2.8" fill="#8a5e4a"/>
<circle cx="987.6" cy="425.1" r="2.8" fill="#181410"/>
<circle cx="1063.3" cy="402.7" r="2.8" fill="#786058"/>
<circle cx="956.5" cy="404.2" r="2.8" fill="#d8c8a8"/>
<circle cx="953.3" cy="434.4" r="2.8" fill="#988070"/>
<circle cx="1013.1" cy="382.1" r="2.8" fill="#8a5e4a"/>
<circle cx="1078.9" cy="414.0" r="2.8" fill="#664a40"/>
<circle cx="1044.4" cy="434.1" r="2.8" fill="#5e3e30"/>
<circle cx="1047.4" cy="385.1" r="2.8" fill="#4a3a30"/>
<circle cx="1005.9" cy="412.6" r="2.8" fill="#8a6656"/>
<circle cx="1039.2" cy="417.5" r="2.8" fill="#6a4638"/>
<circle cx="1066.0" cy="395.9" r="2.8" fill="#8c6450"/>
<circle cx="1064.5" cy="447.7" r="2.8" fill="#664a40"/>
<circle cx="942.6" cy="415.4" r="2.8" fill="#907868"/>
<circle cx="938.1" cy="421.1" r="2.8" fill="#a07050"/>
<circle cx="1046.7" cy="435.2" r="2.8" fill="#5a3828"/>
<circle cx="1030.9" cy="428.8" r="2.8" fill="#181410"/>
<circle cx="982.8" cy="403.0" r="2.8" fill="#5a5048"/>
<circle cx="990.1" cy="386.8" r="2.8" fill="#5e3e30"/>
<circle cx="1040.0" cy="402.3" r="2.8" fill="#a89880"/>
<circle cx="1077.9" cy="424.2" r="2.8" fill="#5a3828"/>
<circle cx="919.2" cy="408.2" r="2.8" fill="#84604e"/>
<circle cx="997.6" cy="417.7" r="2.8" fill="#8a6656"/>
<circle cx="1060.2" cy="454.4" r="2.8" fill="#70483a"/>
<circle cx="932.1" cy="382.5" r="2.8" fill="#a89880"/>
<circle cx="1000.5" cy="413.5" r="2.8" fill="#70483a"/>
<circle cx="1009.8" cy="437.6" r="2.8" fill="#8a6656"/>
<circle cx="1008.2" cy="403.6" r="2.8" fill="#4e342a"/>
<circle cx="992.2" cy="442.4" r="2.8" fill="#8a5e4a"/>
<circle cx="946.3" cy="401.0" r="2.8" fill="#241c18"/>
<circle cx="934.6" cy="391.9" r="2.8" fill="#988070"/>
<circle cx="989.6" cy="438.4" r="2.8" fill="#70483a"/>
<circle cx="1013.6" cy="443.9" r="2.8" fill="#8a8478"/>
<circle cx="1010.0" cy="402.4" r="2.8" fill="#d8c8a8"/>
<circle cx="980.2" cy="394.1" r="2.8" fill="#84604e"/>
<circle cx="1064.9" cy="454.3" r="2.8" fill="#5e3e30"/>
<circle cx="986.1" cy="389.1" r="2.8" fill="#8c6450"/>
<circle cx="949.8" cy="420.0" r="2.8" fill="#b8a890"/>
<circle cx="1023.3" cy="437.7" r="2.8" fill="#8a5e4a"/>
<circle cx="1027.9" cy="403.8" r="2.8" fill="#786058"/>
<circle cx="954.0" cy="394.6" r="2.8" fill="#181410"/>
<circle cx="1053.1" cy="432.0" r="2.8" fill="#7e5846"/>
<circle cx="937.0" cy="406.9" r="2.8" fill="#7e5846"/>
<circle cx="991.1" cy="398.9" r="2.8" fill="#a8a090"/>
<circle cx="1062.4" cy="426.2" r="2.8" fill="#6a4638"/>
<circle cx="952.1" cy="406.4" r="2.8" fill="#6a6860"/>
<circle cx="1061.0" cy="393.6" r="2.8" fill="#5a3828"/>
<circle cx="1059.3" cy="440.2" r="2.8" fill="#8a5e4a"/>
<circle cx="977.0" cy="414.0" r="2.8" fill="#7e5846"/>
<circle cx="1092.1" cy="393.2" r="2.8" fill="#2a2220"/>
<circle cx="944.2" cy="405.0" r="2.8" fill="#5a3828"/>
<circle cx="1030.1" cy="386.7" r="2.8" fill="#7e5846"/>
<circle cx="1043.1" cy="409.0" r="2.8" fill="#8c6450"/>
<circle cx="958.8" cy="390.4" r="2.8" fill="#d8c8a8"/>
<circle cx="974.7" cy="427.4" r="2.8" fill="#5a3828"/>
<circle cx="928.9" cy="406.3" r="2.8" fill="#181410"/>
<circle cx="997.7" cy="393.0" r="2.8" fill="#7e5846"/>
<circle cx="983.0" cy="442.0" r="2.8" fill="#6a4638"/>
<circle cx="946.1" cy="395.2" r="2.8" fill="#d8c8a8"/>
<circle cx="983.7" cy="408.4" r="2.8" fill="#0a0a0a"/>
<circle cx="958.9" cy="382.6" r="2.8" fill="#241c18"/>
<circle cx="1020.7" cy="432.7" r="2.8" fill="#a89880"/>
<circle cx="945.2" cy="422.5" r="2.8" fill="#4a3a30"/>
<circle cx="1070.2" cy="405.2" r="2.8" fill="#786058"/>
<circle cx="1093.0" cy="418.4" r="2.8" fill="#8a5e4a"/>
<circle cx="1054.8" cy="403.9" r="2.8" fill="#8a6656"/>
<circle cx="951.5" cy="383.8" r="2.8" fill="#807060"/>
<circle cx="984.8" cy="426.8" r="2.8" fill="#988878"/>
<circle cx="1042.6" cy="405.7" r="2.8" fill="#241c18"/>
<circle cx="1015.3" cy="413.7" r="2.8" fill="#8a6656"/>
<circle cx="1016.6" cy="410.8" r="2.8" fill="#d8c8a8"/>
<circle cx="1029.7" cy="423.5" r="2.8" fill="#96684c"/>
<circle cx="994.1" cy="433.2" r="2.8" fill="#5a3828"/>
<circle cx="1007.0" cy="425.2" r="2.8" fill="#84604e"/>
<circle cx="1037.3" cy="426.4" r="2.8" fill="#8c6450"/>
<circle cx="1044.3" cy="398.0" r="2.8" fill="#4e342a"/>
<circle cx="1071.3" cy="391.1" r="2.8" fill="#7e5846"/>
<circle cx="948.9" cy="432.0" r="2.8" fill="#6a6860"/>
<circle cx="975.7" cy="383.8" r="2.8" fill="#c8b89a"/>
<circle cx="925.4" cy="403.5" r="2.8" fill="#5a3828"/>
<circle cx="950.1" cy="425.7" r="2.8" fill="#2a2220"/>
<circle cx="1045.7" cy="404.6" r="2.8" fill="#4a3a30"/>
<circle cx="1026.9" cy="423.3" r="2.8" fill="#8a6656"/>
<circle cx="997.0" cy="431.0" r="2.8" fill="#786058"/>
<circle cx="1018.3" cy="443.2" r="2.8" fill="#664a40"/>
<circle cx="920.5" cy="397.6" r="2.8" fill="#a89880"/>
<circle cx="1083.8" cy="409.3" r="2.8" fill="#a07050"/>
<circle cx="994.1" cy="404.5" r="2.8" fill="#8c6450"/>
<circle cx="1067.7" cy="428.0" r="2.8" fill="#100c0a"/>
<circle cx="942.4" cy="407.8" r="2.8" fill="#96684c"/>
<circle cx="1015.2" cy="406.3" r="2.8" fill="#8c6450"/>
<circle cx="1018.7" cy="408.4" r="2.8" fill="#4e342a"/>
<circle cx="923.8" cy="408.3" r="2.8" fill="#181410"/>
<circle cx="953.2" cy="400.4" r="2.8" fill="#5e3e30"/>
<circle cx="979.5" cy="441.4" r="2.8" fill="#6a4638"/>
<circle cx="919.7" cy="401.6" r="2.8" fill="#786058"/>
<circle cx="987.9" cy="433.1" r="2.8" fill="#8c6450"/>
<circle cx="936.3" cy="424.7" r="2.8" fill="#8a8478"/>
<circle cx="1058.8" cy="384.4" r="2.8" fill="#5a3828"/>
<circle cx="966.8" cy="427.4" r="2.8" fill="#84604e"/>
<circle cx="975.7" cy="419.9" r="2.8" fill="#84604e"/>
<circle cx="970.8" cy="386.9" r="2.8" fill="#a89880"/>
<circle cx="937.1" cy="381.4" r="2.8" fill="#241c18"/>
<circle cx="952.6" cy="415.8" r="2.8" fill="#181410"/>
<circle cx="1000.2" cy="410.4" r="2.8" fill="#96684c"/>
<circle cx="974.8" cy="384.6" r="2.8" fill="#5a5048"/>
<circle cx="944.8" cy="426.3" r="2.8" fill="#2a2220"/>
<circle cx="1003.9" cy="412.6" r="2.8" fill="#4e342a"/>
<circle cx="1048.0" cy="415.6" r="2.8" fill="#7a5444"/>
<circle cx="1057.6" cy="453.4" r="2.8" fill="#7e5846"/>
<circle cx="1043.1" cy="419.8" r="2.8" fill="#96684c"/>
<circle cx="1046.2" cy="442.7" r="2.8" fill="#5e3e30"/>
<circle cx="999.2" cy="410.8" r="2.8" fill="#5a3828"/>
<circle cx="968.6" cy="424.8" r="2.8" fill="#8c6450"/>
<circle cx="937.4" cy="400.8" r="2.8" fill="#c8b89a"/>
<circle cx="1057.2" cy="429.0" r="2.8" fill="#8c6450"/>
<circle cx="940.9" cy="397.1" r="2.8" fill="#907868"/>
<circle cx="969.3" cy="426.4" r="2.8" fill="#a89880"/>
<circle cx="944.0" cy="397.0" r="2.8" fill="#a89880"/>
<circle cx="933.6" cy="385.1" r="2.8" fill="#a8a090"/>
<circle cx="934.5" cy="400.3" r="2.8" fill="#907868"/>
<circle cx="984.7" cy="410.2" r="2.8" fill="#6a4638"/>
<circle cx="1038.8" cy="417.7" r="2.8" fill="#4e342a"/>
<circle cx="1065.3" cy="399.8" r="2.8" fill="#a89880"/>
<circle cx="924.3" cy="409.3" r="2.8" fill="#6a4638"/>
<circle cx="1065.6" cy="411.5" r="2.8" fill="#5a3828"/>
<circle cx="923.7" cy="401.8" r="2.8" fill="#8a5e4a"/>
<circle cx="952.1" cy="381.1" r="2.8" fill="#988070"/>
<circle cx="1027.0" cy="397.8" r="2.8" fill="#a07050"/>
<circle cx="934.4" cy="395.4" r="2.8" fill="#664a40"/>
<circle cx="1040.8" cy="389.5" r="2.8" fill="#5a3828"/>
<circle cx="1074.4" cy="434.7" r="2.8" fill="#5e3e30"/>
<circle cx="976.5" cy="420.0" r="2.8" fill="#a07050"/>
<circle cx="918.9" cy="427.9" r="2.8" fill="#a8a090"/>
<circle cx="971.6" cy="395.3" r="2.8" fill="#807060"/>
<circle cx="928.0" cy="383.8" r="2.8" fill="#181410"/>
<circle cx="1012.1" cy="445.3" r="2.8" fill="#6a4638"/>
<circle cx="945.2" cy="399.8" r="2.8" fill="#a8a090"/>
<circle cx="981.8" cy="412.7" r="2.8" fill="#d8c8a8"/>
<circle cx="992.4" cy="407.2" r="2.8" fill="#4a3a30"/>
<circle cx="942.4" cy="417.7" r="2.8" fill="#c0a888"/>
<circle cx="1052.4" cy="396.9" r="2.8" fill="#6a4638"/>
<circle cx="1062.9" cy="421.9" r="2.8" fill="#664a40"/>
<circle cx="950.8" cy="436.3" r="2.8" fill="#2a2220"/>
<circle cx="920.6" cy="382.0" r="2.8" fill="#8a6656"/>
<circle cx="1060.3" cy="433.1" r="2.8" fill="#786058"/>
<circle cx="1086.6" cy="442.0" r="2.8" fill="#664a40"/>
<circle cx="957.8" cy="417.7" r="2.8" fill="#8a8478"/>
<circle cx="1043.6" cy="380.8" r="2.8" fill="#664a40"/>
<circle cx="1016.5" cy="428.7" r="2.8" fill="#70483a"/>
<circle cx="985.7" cy="382.4" r="2.8" fill="#6a6860"/>
<circle cx="947.2" cy="409.4" r="2.8" fill="#a07050"/>
<circle cx="1035.7" cy="433.2" r="2.8" fill="#6a4638"/>
<circle cx="949.0" cy="388.3" r="2.8" fill="#0a0a0a"/>
<circle cx="942.1" cy="383.1" r="2.8" fill="#100c0a"/>
<circle cx="1050.3" cy="398.7" r="2.8" fill="#7a5444"/>
<circle cx="1007.9" cy="415.6" r="2.8" fill="#7a5444"/>
<circle cx="1037.2" cy="381.2" r="2.8" fill="#70483a"/>
<circle cx="1061.0" cy="398.4" r="2.8" fill="#664a40"/>
<circle cx="1076.6" cy="444.4" r="2.8" fill="#4a3a30"/>
<circle cx="948.4" cy="391.7" r="2.8" fill="#d8c8a8"/>
<circle cx="957.7" cy="415.7" r="2.8" fill="#5a3828"/>
<circle cx="1010.5" cy="409.6" r="2.8" fill="#5e3e30"/>
<circle cx="1035.3" cy="394.3" r="2.8" fill="#7e5846"/>
<circle cx="993.2" cy="436.7" r="2.8" fill="#84604e"/>
<circle cx="922.4" cy="399.2" r="2.8" fill="#b8a890"/>
<circle cx="1026.0" cy="425.4" r="2.8" fill="#664a40"/>
<circle cx="975.6" cy="396.5" r="2.8" fill="#988878"/>
<circle cx="921.5" cy="428.7" r="2.8" fill="#907868"/>
<circle cx="1032.0" cy="418.4" r="2.8" fill="#a07050"/>
<circle cx="1070.4" cy="449.4" r="2.8" fill="#664a40"/>
<circle cx="937.4" cy="408.9" r="2.8" fill="#807060"/>
<circle cx="1007.4" cy="442.3" r="2.8" fill="#84604e"/>
<circle cx="1052.0" cy="385.1" r="2.8" fill="#4a3a30"/>
<circle cx="1056.0" cy="390.2" r="2.8" fill="#8c6450"/>
<circle cx="1013.5" cy="383.7" r="2.8" fill="#7a5444"/>
<circle cx="1078.8" cy="439.7" r="2.8" fill="#5a3828"/>
<circle cx="1000.0" cy="441.3" r="2.8" fill="#8a5e4a"/>
<circle cx="917.8" cy="406.5" r="2.8" fill="#907868"/>
<circle cx="956.9" cy="404.5" r="2.8" fill="#5a5048"/>
<circle cx="1063.0" cy="416.3" r="2.8" fill="#7a5444"/>
<circle cx="1017.9" cy="429.3" r="2.8" fill="#a07050"/>
<circle cx="1020.8" cy="395.0" r="2.8" fill="#7e5846"/>
<circle cx="973.9" cy="411.3" r="2.8" fill="#6a4638"/>
<circle cx="1052.7" cy="389.8" r="2.8" fill="#96684c"/>
<circle cx="918.5" cy="383.7" r="2.8" fill="#8c6450"/>
<circle cx="959.6" cy="416.8" r="2.8" fill="#100c0a"/>
<circle cx="942.7" cy="424.4" r="2.8" fill="#6a4638"/>
<circle cx="1039.8" cy="399.0" r="2.8" fill="#84604e"/>
<circle cx="996.2" cy="428.7" r="2.8" fill="#664a40"/>
<circle cx="1058.9" cy="445.1" r="2.8" fill="#96684c"/>
<circle cx="1010.7" cy="411.0" r="2.8" fill="#8c6450"/>
<circle cx="970.4" cy="394.2" r="2.8" fill="#5a3828"/>
<circle cx="1067.2" cy="387.4" r="2.8" fill="#786058"/>
<circle cx="957.4" cy="383.6" r="2.8" fill="#988070"/>
<circle cx="931.5" cy="422.1" r="2.8" fill="#96684c"/>
<circle cx="1045.9" cy="435.6" r="2.8" fill="#7e5846"/>
<circle cx="1056.5" cy="432.7" r="2.8" fill="#8c6450"/>
<circle cx="934.3" cy="421.2" r="2.8" fill="#8c6450"/>
<circle cx="1051.4" cy="401.8" r="2.8" fill="#4e342a"/>
<circle cx="1038.3" cy="394.4" r="2.8" fill="#5a3828"/>
<circle cx="962.9" cy="415.8" r="2.8" fill="#4e342a"/>
<circle cx="1031.6" cy="388.8" r="2.8" fill="#7e5846"/>
<circle cx="932.5" cy="395.2" r="2.8" fill="#7a5444"/>
<circle cx="954.1" cy="384.3" r="2.8" fill="#787870"/>
<circle cx="1074.1" cy="411.6" r="2.8" fill="#907868"/>
<circle cx="944.9" cy="404.9" r="2.8" fill="#807060"/>
<circle cx="998.9" cy="402.3" r="2.8" fill="#5a3828"/>
<circle cx="945.0" cy="427.7" r="2.8" fill="#988878"/>
<circle cx="976.5" cy="390.3" r="2.8" fill="#8a6656"/>
<circle cx="975.5" cy="423.9" r="2.8" fill="#84604e"/>
<circle cx="954.1" cy="422.2" r="2.8" fill="#241c18"/>
<circle cx="1077.6" cy="434.6" r="2.8" fill="#8a6656"/>
<circle cx="938.6" cy="430.3" r="2.8" fill="#8a5e4a"/>
<circle cx="957.7" cy="415.9" r="2.8" fill="#8a6656"/>
<circle cx="1089.7" cy="442.7" r="2.8" fill="#8a6656"/>
<circle cx="960.1" cy="385.4" r="2.8" fill="#b8a890"/>
<circle cx="975.4" cy="403.8" r="2.8" fill="#8a5e4a"/>
<circle cx="1014.9" cy="382.2" r="2.8" fill="#7e5846"/>
<circle cx="942.6" cy="381.8" r="2.8" fill="#181410"/>
<circle cx="946.1" cy="416.8" r="2.8" fill="#181410"/>
<circle cx="997.8" cy="436.7" r="2.8" fill="#786058"/>
<circle cx="1055.0" cy="438.9" r="2.8" fill="#5e3e30"/>
<circle cx="947.5" cy="404.4" r="2.8" fill="#5e3e30"/>
<circle cx="1036.0" cy="395.5" r="2.8" fill="#96684c"/>
<circle cx="917.1" cy="389.1" r="2.8" fill="#664a40"/>
<circle cx="1051.4" cy="390.3" r="2.8" fill="#786058"/>
<circle cx="988.7" cy="405.3" r="2.8" fill="#4e342a"/>
<circle cx="1006.2" cy="439.5" r="2.8" fill="#4a3a30"/>
<circle cx="920.0" cy="417.0" r="2.8" fill="#c0a888"/>
<circle cx="1039.8" cy="433.0" r="2.8" fill="#96684c"/>
<circle cx="936.3" cy="429.3" r="2.8" fill="#5a5048"/>
<circle cx="978.5" cy="386.0" r="2.8" fill="#84604e"/>
<circle cx="986.6" cy="406.3" r="2.8" fill="#7a5444"/>
<circle cx="1004.9" cy="380.9" r="2.8" fill="#5a3828"/>
<circle cx="981.8" cy="433.0" r="2.8" fill="#70483a"/>
<circle cx="944.9" cy="395.8" r="2.8" fill="#70483a"/>
<circle cx="1033.3" cy="405.2" r="2.8" fill="#84604e"/>
<circle cx="950.2" cy="408.8" r="2.8" fill="#96684c"/>
<circle cx="941.5" cy="415.5" r="2.8" fill="#0a0a0a"/>
<circle cx="991.1" cy="422.5" r="2.8" fill="#5a3828"/>
<circle cx="996.6" cy="396.3" r="2.8" fill="#4e342a"/>
<circle cx="922.4" cy="381.4" r="2.8" fill="#d8c8a8"/>
<circle cx="1049.6" cy="448.0" r="2.8" fill="#8c6450"/>
<circle cx="1071.9" cy="425.9" r="2.8" fill="#70483a"/>
<circle cx="996.0" cy="412.5" r="2.8" fill="#4a3a30"/>
<circle cx="984.8" cy="421.0" r="2.8" fill="#70483a"/>
<circle cx="1068.0" cy="455.4" r="2.8" fill="#8a5e4a"/>
<circle cx="1053.8" cy="405.9" r="2.8" fill="#4a3a30"/>
<circle cx="1001.6" cy="389.0" r="2.8" fill="#664a40"/>
<circle cx="1005.1" cy="399.9" r="2.8" fill="#a07050"/>
<circle cx="1031.3" cy="401.8" r="2.8" fill="#7e5846"/>
<circle cx="1040.2" cy="432.2" r="2.8" fill="#786058"/>
<circle cx="927.7" cy="390.3" r="2.8" fill="#c0a888"/>
<circle cx="957.3" cy="428.3" r="2.8" fill="#a89880"/>
<circle cx="1034.3" cy="426.6" r="2.8" fill="#c0a888"/>
<circle cx="1067.1" cy="397.5" r="2.8" fill="#8a5e4a"/>
<circle cx="962.1" cy="391.6" r="2.8" fill="#664a40"/>
<circle cx="1076.2" cy="406.1" r="2.8" fill="#7e5846"/>
<circle cx="980.4" cy="420.6" r="2.8" fill="#c0a888"/>
<circle cx="955.6" cy="423.5" r="2.8" fill="#7e5846"/>
<circle cx="1040.0" cy="408.9" r="2.8" fill="#96684c"/>
<circle cx="1006.9" cy="396.7" r="2.8" fill="#7e5846"/>
<circle cx="1075.9" cy="394.8" r="2.8" fill="#7e5846"/>
<circle cx="948.5" cy="433.3" r="2.8" fill="#6a4638"/>
<circle cx="973.9" cy="425.8" r="2.8" fill="#a8a090"/>
<circle cx="1054.1" cy="434.6" r="2.8" fill="#a07050"/>
<circle cx="924.4" cy="381.5" r="2.8" fill="#d8c8a8"/>
<circle cx="988.4" cy="395.5" r="2.8" fill="#664a40"/>
<circle cx="1017.6" cy="432.9" r="2.8" fill="#7a5444"/>
<circle cx="1036.8" cy="422.2" r="2.8" fill="#8a6656"/>
<circle cx="925.1" cy="425.8" r="2.8" fill="#988878"/>
<circle cx="1063.2" cy="407.1" r="2.8" fill="#96684c"/>
<circle cx="969.8" cy="385.0" r="2.8" fill="#c0a888"/>
<circle cx="1015.0" cy="429.6" r="2.8" fill="#664a40"/>
<circle cx="1012.1" cy="382.4" r="2.8" fill="#7a5444"/>
<circle cx="957.1" cy="413.2" r="2.8" fill="#2a2220"/>
<circle cx="926.3" cy="429.3" r="2.8" fill="#a89880"/>
<circle cx="1011.6" cy="407.5" r="2.8" fill="#84604e"/>
<circle cx="1066.1" cy="445.9" r="2.8" fill="#8a6656"/>
<circle cx="1017.1" cy="425.1" r="2.8" fill="#5e3e30"/>
<circle cx="1064.7" cy="434.9" r="2.8" fill="#4e342a"/>
<circle cx="1066.2" cy="414.8" r="2.8" fill="#96684c"/>
<circle cx="1053.7" cy="430.0" r="2.8" fill="#4a3a30"/>
<circle cx="963.2" cy="426.6" r="2.8" fill="#2a2220"/>
<circle cx="1046.5" cy="414.8" r="2.8" fill="#5a3828"/>
<circle cx="971.6" cy="387.2" r="2.8" fill="#a07050"/>
<circle cx="933.0" cy="402.1" r="2.8" fill="#84604e"/>
<circle cx="1081.9" cy="441.2" r="2.8" fill="#96684c"/>
<circle cx="995.6" cy="387.8" r="2.8" fill="#4a3a30"/>
<circle cx="954.9" cy="421.9" r="2.8" fill="#84604e"/>
<circle cx="943.0" cy="417.7" r="2.8" fill="#8a8478"/>
<circle cx="950.8" cy="415.0" r="2.8" fill="#181410"/>
<circle cx="922.7" cy="420.8" r="2.8" fill="#2a2220"/>
<circle cx="980.8" cy="440.7" r="2.8" fill="#786058"/>
<circle cx="992.8" cy="421.0" r="2.8" fill="#4a3a30"/>
<circle cx="977.3" cy="388.9" r="2.8" fill="#2a2220"/>
<circle cx="962.5" cy="413.3" r="2.8" fill="#786058"/>
<circle cx="1007.8" cy="439.4" r="2.8" fill="#5e3e30"/>
<circle cx="943.0" cy="412.1" r="2.8" fill="#a8a090"/>
<circle cx="1052.3" cy="434.0" r="2.8" fill="#5a3828"/>
<circle cx="937.2" cy="395.9" r="2.8" fill="#d8c8a8"/>
<circle cx="1065.1" cy="382.3" r="2.8" fill="#b8a890"/>
<circle cx="964.9" cy="409.3" r="2.8" fill="#4e342a"/>
<circle cx="982.5" cy="418.4" r="2.8" fill="#6a4638"/>
<circle cx="1061.3" cy="422.3" r="2.8" fill="#8a5e4a"/>
<circle cx="993.9" cy="425.0" r="2.8" fill="#5e3e30"/>
<circle cx="1055.0" cy="415.5" r="2.8" fill="#70483a"/>
<circle cx="1066.5" cy="431.9" r="2.8" fill="#84604e"/>
<circle cx="994.3" cy="422.1" r="2.8" fill="#96684c"/>
<circle cx="973.4" cy="401.1" r="2.8" fill="#4a3a30"/>
<circle cx="1032.2" cy="400.5" r="2.8" fill="#7a5444"/>
<circle cx="1080.9" cy="420.1" r="2.8" fill="#4e342a"/>
<circle cx="1014.5" cy="446.2" r="2.8" fill="#84604e"/>
<circle cx="1019.4" cy="396.3" r="2.8" fill="#6a4638"/>
<circle cx="1015.6" cy="429.4" r="2.8" fill="#a8a090"/>
<circle cx="940.3" cy="391.6" r="2.8" fill="#5a5048"/>
<circle cx="970.1" cy="385.6" r="2.8" fill="#181410"/>
<circle cx="1054.5" cy="448.9" r="2.8" fill="#988058"/>
<circle cx="1077.6" cy="456.1" r="2.8" fill="#4a3a30"/>
<circle cx="945.7" cy="429.4" r="2.8" fill="#a89880"/>
<circle cx="1024.2" cy="404.5" r="2.8" fill="#786058"/>
<circle cx="1005.0" cy="436.3" r="2.8" fill="#664a40"/>
<circle cx="934.3" cy="425.7" r="2.8" fill="#b8a890"/>
<circle cx="949.4" cy="392.5" r="2.8" fill="#907868"/>
<circle cx="936.3" cy="384.5" r="2.8" fill="#100c0a"/>
<circle cx="954.5" cy="387.0" r="2.8" fill="#a89880"/>
<circle cx="959.8" cy="428.0" r="2.8" fill="#a89880"/>
<circle cx="991.7" cy="420.4" r="2.8" fill="#4e342a"/>
<circle cx="1062.4" cy="455.9" r="2.8" fill="#8c6450"/>
<circle cx="982.9" cy="434.1" r="2.8" fill="#7e5846"/>
<circle cx="967.8" cy="427.2" r="2.8" fill="#907868"/>
<circle cx="990.7" cy="405.2" r="2.8" fill="#70483a"/>
<circle cx="1021.6" cy="412.4" r="2.8" fill="#8a6656"/>
<circle cx="1051.3" cy="409.5" r="2.8" fill="#84604e"/>
<circle cx="980.8" cy="417.6" r="2.8" fill="#988070"/>
<circle cx="992.7" cy="415.3" r="2.8" fill="#4e342a"/>
<circle cx="948.0" cy="388.0" r="2.8" fill="#787870"/>
<circle cx="1007.6" cy="406.3" r="2.8" fill="#a07050"/>
<circle cx="934.7" cy="418.9" r="2.8" fill="#4e342a"/>
<circle cx="1000.5" cy="413.4" r="2.8" fill="#96684c"/>
<circle cx="976.2" cy="423.2" r="2.8" fill="#8a6656"/>
<circle cx="942.4" cy="410.5" r="2.8" fill="#8c6450"/>
<circle cx="950.4" cy="396.7" r="2.8" fill="#0a0a0a"/>
<circle cx="920.7" cy="395.2" r="2.8" fill="#0a0a0a"/>
<circle cx="922.5" cy="398.2" r="2.8" fill="#0a0a0a"/>
<circle cx="951.7" cy="397.3" r="2.8" fill="#241c18"/>
<circle cx="935.9" cy="395.1" r="2.8" fill="#0a0a0a"/>
<circle cx="924.5" cy="395.8" r="2.8" fill="#0a0a0a"/>
<circle cx="921.1" cy="396.9" r="2.8" fill="#241c18"/>
<circle cx="945.1" cy="398.2" r="2.8" fill="#2a2220"/>
<circle cx="924.1" cy="395.3" r="2.8" fill="#2a2220"/>
<circle cx="936.8" cy="395.1" r="2.8" fill="#100c0a"/>
<circle cx="921.8" cy="397.2" r="2.8" fill="#241c18"/>
<circle cx="949.7" cy="396.0" r="2.8" fill="#0a0a0a"/>
<circle cx="938.5" cy="396.0" r="2.8" fill="#100c0a"/>
<circle cx="928.2" cy="397.2" r="2.8" fill="#0a0a0a"/>
<circle cx="937.2" cy="395.4" r="2.8" fill="#100c0a"/>
<circle cx="922.5" cy="395.4" r="2.8" fill="#2a2220"/>
<circle cx="1022.9" cy="421.9" r="2.8" fill="#5a2c10"/>
<circle cx="1026.0" cy="424.0" r="2.8" fill="#3a1c0c"/>
<circle cx="1016.6" cy="420.9" r="2.8" fill="#3a1c0c"/>
<circle cx="1030.3" cy="422.5" r="2.8" fill="#2a1408"/>
<circle cx="1012.4" cy="434.4" r="2.8" fill="#2a1408"/>
<circle cx="1013.9" cy="423.4" r="2.8" fill="#2a1408"/>
<circle cx="1029.9" cy="425.4" r="2.8" fill="#2a1408"/>
<circle cx="1012.7" cy="432.4" r="2.8" fill="#1c0c06"/>
<circle cx="1026.8" cy="419.1" r="2.8" fill="#2a1408"/>
<circle cx="1012.2" cy="424.3" r="2.8" fill="#5a2c10"/>
<circle cx="1015.4" cy="427.9" r="2.8" fill="#3a1c0c"/>
<circle cx="1016.8" cy="433.2" r="2.8" fill="#5a2c10"/>
<circle cx="1030.0" cy="435.9" r="2.8" fill="#2a1408"/>
<circle cx="1016.5" cy="428.0" r="2.8" fill="#3a1c0c"/>
<circle cx="1029.6" cy="426.0" r="2.8" fill="#5a2c10"/>
<circle cx="1022.7" cy="434.9" r="2.8" fill="#5a2c10"/>
<circle cx="1021.4" cy="416.1" r="2.8" fill="#1c0c06"/>
<circle cx="1015.9" cy="434.0" r="2.8" fill="#5a2c10"/>
<circle cx="1024.1" cy="423.1" r="2.8" fill="#5a2c10"/>
<circle cx="1026.0" cy="419.1" r="2.8" fill="#1c0c06"/>
<circle cx="1093.0" cy="367.5" r="2.8" fill="#fffad0"/>
<circle cx="1083.0" cy="381.0" r="2.8" fill="#e8e0a0"/>
<circle cx="1091.0" cy="389.0" r="2.8" fill="#fff8b0"/>
<circle cx="1094.0" cy="398.0" r="2.8" fill="#f8f0a0"/>
<circle cx="1096.0" cy="410.0" r="2.8" fill="#f0e890"/>
<circle cx="1098.0" cy="422.0" r="2.8" fill="#f8f0a8"/>
<circle cx="1100.0" cy="431.0" r="2.8" fill="#f0d890"/>
<circle cx="1090.0" cy="377.0" r="2.8" fill="#a89040"/>
<circle cx="1060.0" cy="443.5" r="2.8" fill="#a8c820"/>
<circle cx="1096.0" cy="444.0" r="2.8" fill="#208a80"/>
<circle cx="1098.0" cy="449.0" r="2.8" fill="#20a090"/>
<circle cx="1106.0" cy="434.0" r="2.8" fill="#f0e070"/>
<circle cx="1112.0" cy="435.0" r="2.8" fill="#e8d860"/>
<circle cx="1086.0" cy="455.0" r="2.8" fill="#e0b060"/>
<circle cx="1071.0" cy="454.0" r="2.8" fill="#c8a050"/>
<circle cx="1048.0" cy="453.0" r="2.8" fill="#c89850"/>
<circle cx="1101.0" cy="361.0" r="2.8" fill="#d88840"/>
<circle cx="1105.0" cy="373.0" r="2.8" fill="#9a90a8"/>
<circle cx="902.0" cy="398.0" r="2.8" fill="#2a2018"/>
<circle cx="909.0" cy="402.0" r="2.8" fill="#3a2820"/>
<circle cx="899.0" cy="400.0" r="2.8" fill="#5a5a38"/>
<circle cx="888.0" cy="417.0" r="2.8" fill="#141010"/>
<circle cx="886.0" cy="425.0" r="2.8" fill="#181010"/>
<circle cx="898.0" cy="420.0" r="2.8" fill="#988878"/>
<circle cx="902.0" cy="430.0" r="2.8" fill="#907060"/>
<circle cx="900.0" cy="441.0" r="2.8" fill="#8a7860"/>
<circle cx="870.0" cy="425.5" r="2.8" fill="#3a2a20"/>
<circle cx="945.0" cy="445.0" r="2.8" fill="#8a7868"/>
<circle cx="951.0" cy="454.0" r="2.8" fill="#807060"/>
<circle cx="898.5" cy="468.5" r="2.8" fill="#7a3a1c"/>
<circle cx="1012.0" cy="457.0" r="2.8" fill="#a87840"/>
<circle cx="1021.0" cy="459.0" r="2.8" fill="#b08050"/>
<circle cx="1029.0" cy="461.0" r="2.8" fill="#8a7878"/>
<circle cx="1052.0" cy="462.0" r="2.8" fill="#3a2a28"/>
<circle cx="908.0" cy="410.0" r="2.8" fill="#3a2a20"/>
<circle cx="913.0" cy="415.0" r="2.8" fill="#6a4a3a"/>
<circle cx="905.0" cy="421.0" r="2.8" fill="#a09080"/>
</g>
<circle cx="899.6" cy="380" r="2.6" fill="#fff"/><circle cx="901.4" cy="378.8" r="2.6" fill="#2a3010"/>
<circle cx="965" cy="436" r="2.6" fill="#fff"/>
<path d="M1040 405l3 2l-1 4" stroke="#fff" stroke-width="1.2" fill="none"/>
<circle cx="828.5" cy="273.5" r="2.7" fill="#6a86b0"/>
<circle cx="955.5" cy="296.0" r="2.7" fill="#a8b070"/>
<circle cx="1345.0" cy="266.0" r="2.7" fill="#5a6030"/>
<circle cx="713.0" cy="425.0" r="2.7" fill="#fffacd"/>
<circle cx="1171.5" cy="331.0" r="2.7" fill="#b0a890"/>
<circle cx="1168.0" cy="320.0" r="2.7" fill="#3a2a20"/>
<circle cx="1128.5" cy="319.0" r="2.7" fill="#3a3820"/>
<circle cx="1105.5" cy="336.5" r="2.7" fill="#6a5a60"/>
<circle cx="1196.5" cy="338.5" r="2.7" fill="#5a4a30"/>
<circle cx="1210.5" cy="344.0" r="2.7" fill="#d0b888"/>
<circle cx="1381.0" cy="348.0" r="2.7" fill="#f0e8e0"/>
<circle cx="1498.5" cy="456.0" r="2.7" fill="#f0a060"/>
<circle cx="1352.5" cy="454.0" r="2.7" fill="#f0d8c0"/>
<circle cx="1403.0" cy="456.0" r="2.7" fill="#8a7840"/>
<circle cx="1134.0" cy="413.5" r="2.7" fill="#d0a070"/>
<circle cx="1147.5" cy="421.0" r="2.7" fill="#d8a878"/>
<circle cx="1139.0" cy="399.5" r="2.7" fill="#c89858"/>
<circle cx="1109.5" cy="389.0" r="2.7" fill="#8a7040"/>
<circle cx="1159.0" cy="390.0" r="2.7" fill="#5a5a38"/>
<circle cx="1196.0" cy="396.0" r="2.7" fill="#6a5a40"/>
<circle cx="1201.5" cy="394.5" r="2.7" fill="#5a4a38"/>
<circle cx="1170.5" cy="416.5" r="2.7" fill="#2a3a18"/>
<circle cx="1194.5" cy="439.5" r="2.7" fill="#a08868"/>
<circle cx="1176.0" cy="338.0" r="2.7" fill="#5a4a30"/>
<rect x="819.2" y="246.2" width="4.6" height="4.6" fill="#6a7a90"/>
<rect x="1093.2" y="278.2" width="4.6" height="4.6" fill="#8a7a58"/>
<rect x="833.7" y="342.2" width="4.6" height="4.6" fill="#6a7868"/>
<rect x="833.2" y="393.2" width="4.6" height="4.6" fill="#8a5a30"/>
<rect x="1165.2" y="352.7" width="4.6" height="4.6" fill="#a0a098"/>
<rect x="1126.0" y="353.2" width="4.6" height="4.6" fill="#d88840"/>
<defs><pattern id="wf" width="5.6" height="40" patternUnits="userSpaceOnUse"><rect x="1.8" y="0" width="1.8" height="40" fill="#9a9aa0"/></pattern></defs>
</svg><!--SCENE_END-->


<!-- ICON OVERLAY -->
<svg id="ico" class="abs" style="left:0;top:0" width="1722" height="764" viewBox="0 0 1722 764" fill="none" stroke-linecap="round" stroke-linejoin="round">
<!-- top bar: briefcase -->
<g stroke="#eee" stroke-width="2" stroke-linejoin="round">
  <rect x="321" y="8" width="18" height="12" rx="1.2"/>
  <path d="M326.8 7.5V5.2Q326.8 4 328 4H332Q333.2 4 333.2 5.2V7.5"/>
  <path d="M321 13H339" stroke-linecap="butt"/>
  <path d="M328.6 13.5V15H331.4V13.5" stroke-width="1.6"/>
</g>
<!-- gear -->
<path transform="translate(1040.3,1)" fill="#eee" d="M12,8A4,4 0 0,1 16,12A4,4 0 0,1 12,16A4,4 0 0,1 8,12A4,4 0 0,1 12,8M12,10A2,2 0 0,0 10,12A2,2 0 0,0 12,14A2,2 0 0,0 14,12A2,2 0 0,0 12,10M10,22C9.75,22 9.54,21.82 9.5,21.58L9.13,18.93C8.5,18.68 7.96,18.34 7.44,17.94L4.95,18.95C4.73,19.03 4.46,18.95 4.34,18.73L2.34,15.27C2.21,15.05 2.27,14.78 2.46,14.63L4.57,12.97L4.5,12L4.57,11L2.46,9.37C2.27,9.22 2.21,8.95 2.34,8.73L4.34,5.27C4.46,5.05 4.73,4.96 4.95,5.05L7.44,6.05C7.96,5.66 8.5,5.32 9.13,5.07L9.5,2.42C9.54,2.18 9.75,2 10,2H14C14.25,2 14.46,2.18 14.5,2.42L14.87,5.07C15.5,5.32 16.04,5.66 16.56,6.05L19.05,5.05C19.27,4.96 19.54,5.05 19.66,5.27L21.66,8.73C21.79,8.95 21.73,9.22 21.54,9.37L19.43,11L19.5,12L19.43,13L21.54,14.63C21.73,14.78 21.79,15.05 21.66,15.27L19.66,18.73C19.54,18.95 19.27,19.04 19.05,18.95L16.56,17.95C16.04,18.34 15.5,18.68 14.87,18.93L14.5,21.58C14.46,21.82 14.25,22 14,22H10M11.25,4L10.88,6.61C9.68,6.86 8.62,7.5 7.85,8.39L5.44,7.35L4.69,8.65L6.8,10.2C6.4,11.37 6.4,12.64 6.8,13.8L4.68,15.36L5.43,16.66L7.86,15.62C8.63,16.5 9.68,17.14 10.87,17.38L11.24,20H12.76L13.13,17.39C14.32,17.14 15.37,16.5 16.14,15.62L18.57,16.66L19.32,15.36L17.2,13.81C17.6,12.64 17.6,11.37 17.2,10.2L19.31,8.65L18.56,7.35L16.15,8.39C15.38,7.5 14.32,6.86 13.12,6.62L12.75,4H11.25Z"/>
<!-- share -->
<path transform="translate(1075.6,0.5) scale(1.07)" fill="#eee" d="M21,12L14,5V9C7,10 4,15 3,20C5.5,16.5 9,14.9 14,14.9V19L21,12Z"/>
<path d="M1086.2 14.2Q1089.5 13.4 1093 13.5" stroke="#555" stroke-width="0.9" fill="none"/>
<!-- search -->
<path transform="translate(1548.8,0.5) scale(1.03)" fill="#eee" d="M9.5,3A6.5,6.5 0 0,1 16,9.5C16,11.11 15.41,12.59 14.44,13.73L14.71,14H15.5L20.5,19L19,20.5L14,15.5V14.71L13.73,14.44C12.59,15.41 11.11,16 9.5,16A6.5,6.5 0 0,1 3,9.5A6.5,6.5 0 0,1 9.5,3M9.5,5C7,5 5,7 5,9.5C5,12 7,14 9.5,14C12,14 14,12 14,9.5C14,7 12,5 9.5,5Z"/>
<!-- list -->
<path transform="translate(1617.6,0.65)" fill="#eee" d="M7,5H21V7H7V5M7,13V11H21V13H7M4,4.5A1.5,1.5 0 0,1 5.5,6A1.5,1.5 0 0,1 4,7.5A1.5,1.5 0 0,1 2.5,6A1.5,1.5 0 0,1 4,4.5M4,10.5A1.5,1.5 0 0,1 5.5,12A1.5,1.5 0 0,1 4,13.5A1.5,1.5 0 0,1 2.5,12A1.5,1.5 0 0,1 4,10.5M7,19V17H21V19H7M4,16.5A1.5,1.5 0 0,1 5.5,18A1.5,1.5 0 0,1 4,19.5A1.5,1.5 0 0,1 2.5,18A1.5,1.5 0 0,1 4,16.5Z"/>
<!-- bell -->
<g>
  <path d="M1669.3 13.5A7.8 7.8 0 1 0 1666 19" stroke="#eee" stroke-width="1.5"/>
  <path d="M1666.6 12.6H1673L1669.8 16.4Z" fill="#eee"/>
  <path d="M1657.3 16.3C1658.6 15.2 1658.6 14 1658.6 12C1658.6 9.6 1659.8 8.4 1661.5 8.1Q1661.6 7.3 1661.6 7.3Q1661.7 7.3 1661.8 8.1C1663.5 8.4 1664.6 9.6 1664.6 12C1664.6 14 1664.6 15.2 1665.9 16.3ZM1660.6 17H1662.6A1 1 0 0 1 1660.6 17Z" fill="#eee"/>
  <circle cx="1670" cy="19.9" r="4.1" fill="#f00"/>
</g>
<!-- user -->
<path transform="translate(1685,1)" fill="#eee" d="M6,17C6,15 10,13.9 12,13.9C14,13.9 18,15 18,17V18H6M15,9A3,3 0 0,1 12,12A3,3 0 0,1 9,9A3,3 0 0,1 12,6A3,3 0 0,1 15,9M3,5V19A2,2 0 0,0 5,21H19A2,2 0 0,0 21,19V5A2,2 0 0,0 19,3H5C3.89,3 3,3.9 3,5Z"/>

<!-- LEFT ICONS -->
<g stroke="#e2e2e2" stroke-width="1.6">
<!-- 1 tree -->
<g transform="translate(5,37)">
  <rect x="8" y="9.2" width="12" height="6" rx="3" fill="#e2e2e2" stroke="none"/>
  <rect x="31" y="13.8" width="9.2" height="4.4" rx="2.2" fill="#e2e2e2" stroke="none"/>
  <rect x="31" y="23.8" width="9.2" height="4.4" rx="2.2" fill="#e2e2e2" stroke="none"/>
  <rect x="31" y="33.7" width="9.2" height="4.4" rx="2.2" fill="#e2e2e2" stroke="none"/>
  <path d="M19 12H22.5Q23.8 12 23.8 13.3V36H28.5M23.8 16H28.5M23.8 26H28.5" stroke-linecap="butt"/>
</g>
<!-- 2 shuffle -->
<g transform="translate(5,87)">
  <path d="M10.5 13.8C19 13.8 20.5 18 23 22.4C25.5 27 27 31 33 31H39" stroke-width="1.9"/>
  <path d="M10.5 31C19 31 20.5 27 23 22.4C25.5 18 27 13.8 33 13.8H39" stroke-width="1.9"/>
  <path d="M31 8.6C34 10.5 36.5 12.5 39.5 13.8C36.5 15 33.5 17 31 20.3"/>
  <path d="M31 24.5C34 27 36.5 29.5 39.5 31C36.5 32.3 33.5 34.5 31 37.3"/>
</g>
<!-- 3 sigma -->
<g transform="translate(5,137)" stroke-width="2.6">
  <path d="M30.5 12.8L15.8 13.6L27 23L15.8 32.6H30.5"/>
</g>
<!-- 4 sigma+ -->
<g transform="translate(5,187)" stroke-width="2.6">
  <path d="M26.4 13.3L11.6 14.1L22.8 23.5L11.6 33.2H26.4"/>
  <path d="M28.8 24H37.4M33.1 19.6V28.4" stroke-width="1.4"/>
</g>
<!-- 5 2D -->
<g transform="translate(5,237)">
  <path d="M11.5 9.6Q24 8.6 36.3 9.8Q33.4 23 34.3 37H11.5Z"/>
  <path d="M24.5 35.6L26.5 33.6H32.5V35.6Z" fill="#e2e2e2" stroke-width="0.8"/>
</g>
<!-- 6 chart -->
<g transform="translate(5,287)">
  <path d="M12.4 15.8C15 13.5 17.5 10.5 19.4 10.6C21.5 10.8 24 17 26.3 17.4C28.5 17.6 33 11 36.8 8.4"/>
  <path d="M12.4 24.2C13.8 23 15 22.2 16.2 22.5C18 23 19.8 28.2 21.8 28.4C24.5 28.6 30 24.5 35.6 23.8"/>
  <path d="M12.4 35.6H35.6" stroke-width="2"/>
</g>
<!-- 7 puzzle -->
<path transform="translate(14.06,343.46) scale(1.345)" fill="none" stroke="#e2e2e2" stroke-width="1.26" d="M22,13.5C22,15.26 20.7,16.72 19,16.96V20A2,2 0 0,1 17,22H13.2V21.7A2.7,2.7 0 0,0 10.5,19C9,19 7.8,20.21 7.8,21.7V22H4A2,2 0 0,1 2,20V16.2H2.3C3.79,16.2 5,15 5,13.5C5,12 3.79,10.8 2.3,10.8H2V7A2,2 0 0,1 4,5H7.04C7.28,3.3 8.74,2 10.5,2C12.26,2 13.72,3.3 13.96,5H17A2,2 0 0,1 19,7V10.04C20.7,10.28 22,11.74 22,13.5Z"/>
<!-- 8 user check -->
<g transform="translate(5,387)">
  <circle cx="23.7" cy="16" r="6"/>
  <path d="M22.4 33.3H12.2C12.6 27.5 17.5 23.7 23.7 23.7C28.5 23.7 32 26 34 30"/>
  <path d="M27.2 32.6L31.4 38L39.3 29.8" stroke-width="2.6"/>
</g>
<!-- 9 folder -->
<g transform="translate(5,437)">
  <path d="M34 34H15.5C13.5 34 12.5 33 12 31L8.8 16.5C8.4 14.5 9.3 13.6 11 13.6H18.5Q19.5 13.6 20 14.6L21.5 17.3H29.5Q30.8 17.3 31.2 18.8Z"/>
  <path d="M32.4 26.5H38.5Q39.8 26.6 39.2 27.8L35.5 33Q34.8 34 34 34"/>
  <path d="M21.4 26.7H38M25.8 21.8L21.2 26.7L25.8 31.4" stroke-width="1.5"/>
</g>
<!-- 10 user pin -->
<g transform="translate(5,487)">
  <circle cx="18.6" cy="15.6" r="5.4"/>
  <path d="M27.4 30.1H8.7C9.4 24.6 13.5 21.2 18.6 21.2C21.5 21.2 24 22.4 25.8 24.4"/>
  <path d="M32.7 37.2C29.5 34 27.2 31 27.2 27.6A5.5 5.5 0 0 1 38.2 27.6C38.2 31 35.9 34 32.7 37.2Z"/>
  <circle cx="32.7" cy="27.6" r="1.6" fill="#e2e2e2" stroke="none"/>
</g>
<!-- 11 gauge -->
<g transform="translate(5,537)">
  <circle cx="24" cy="21.8" r="13.3"/>
  <path d="M15.6 18.6A9.4 9.4 0 0 1 33.2 19.8" stroke-width="1.6" stroke-dasharray="1.2 2.3" stroke-linecap="butt"/>
  <path d="M25.2 12.6L25.6 24.3A2.7 2.7 0 1 1 20.6 23.2Z" fill="#e2e2e2" stroke="none"/>
  <path d="M21.8 35V38" stroke-width="2.4" stroke-linecap="butt"/>
  <path d="M9 38.8H38.8" stroke-width="2" stroke-linecap="butt"/>
</g>
</g>
<text x="28" y="263.6" font-family="Liberation Sans, sans-serif" font-size="10" fill="#e2e2e2" text-anchor="middle" stroke="none">2D</text>

<!-- focus button icon -->
<g stroke="#e6e6e6" stroke-width="1.7" stroke-linecap="butt" stroke-linejoin="miter">
  <path d="M538.8 49V41.8H546M554 41.8H561.2V49M561.2 57V64.2H554M546 64.2H538.8V57"/>
</g>
<path d="M550 46.1L556 49.6V56.4L550 59.9L544 56.4V49.6Z" fill="#e0e0e0"/>
</svg>

<!-- RIGHT TOOLBAR -->
<div id="rtool"></div>
<div class="abs" style="left:1685px;top:129px;width:36px;height:1px;background:#333"></div>
<div class="abs" style="left:1685px;top:398px;width:36px;height:1px;background:#333"></div>
<div class="abs" style="left:1685px;top:447px;width:36px;height:1px;background:#333"></div>
<div class="abs" style="left:1685px;top:628px;width:36px;height:1px;background:#333"></div>
<div class="abs" style="left:1685px;top:721px;width:36px;height:1px;background:#333"></div>
<div class="abs" style="left:1687px;top:637px;width:32px;height:32px;background:#7c7c7c"></div>
<div class="abs" style="left:1687px;top:681px;width:32px;height:32px;background:#7c7c7c"></div>
<svg id="rico" class="abs" style="left:0;top:0" width="1722" height="764" viewBox="0 0 1722 764" fill="none" stroke="#e2e2e2" stroke-width="1.2" stroke-linecap="round" stroke-linejoin="round">
<!-- tree -->
<g stroke-width="1.4">
  <path d="M1700 65.8H1697.5C1694.5 65.8 1692.4 63.6 1692.4 61C1692.4 58.4 1694.4 56.4 1697 56.2C1697.6 52.6 1700.2 50.2 1703.4 50.2C1706.6 50.2 1709 52.4 1709.8 55.6C1712.6 55.8 1714.6 58 1714.6 60.6C1714.6 63.6 1712.4 65.8 1709.6 65.8H1708"/>
  <path d="M1703.3 55V72M1703.3 63.5L1698.8 60M1703.3 64.5L1707 61.5M1703.3 59L1705.5 57.2"/>
</g>
<!-- monitor focus -->
<g stroke-linecap="butt" stroke-linejoin="miter">
  <path d="M1698 109.5H1690.1V92.6H1713.9V100" stroke-width="1.2"/>
  <path d="M1695 112.2H1698.8V110" stroke-width="1.2"/>
  <path d="M1700.6 106V101.9H1705M1711 101.9H1715.4V106M1715.4 113V117.1H1711M1705 117.1H1700.6V113" stroke-width="1.3"/>
  <path d="M1707.9 104.7L1712.1 107.2V112.2L1707.9 114.7L1703.7 112.2V107.2Z" fill="#e2e2e2" stroke="none"/>
</g>
<!-- ruler -->
<g stroke-linecap="butt" stroke-linejoin="miter">
  <rect x="1690.1" y="149.2" width="25.8" height="8" stroke-width="1.2"/>
  <path d="M1689.5 160H1716.5" stroke-width="1.6"/>
  <path d="M1693.8 152V156.6M1699.4 152V156.6M1705 152V156.6M1710.4 152V156.6" stroke-width="1.4"/>
  <path d="M1692 156H1714.5" stroke-width="1.6" stroke-dasharray="1.4 1.4"/>
</g>
<!-- section planes -->
<path d="M1697.4 194.1H1716.5L1709.1 200.6H1689.7Z" stroke-width="1"/>
<path d="M1698.2 191.8L1707.7 184.1V204.1L1698.2 211.8Z" fill="#e2e2e2" stroke="none"/>
<!-- cube section -->
<g stroke-width="1" stroke-linejoin="miter">
  <rect x="1691.1" y="236.2" width="17.4" height="16.2"/>
  <rect x="1697" y="231.3" width="17.4" height="16.2"/>
  <path d="M1691.1 236.2L1697 231.3M1708.5 236.2L1714.4 231.3M1691.1 252.4L1697 247.5M1708.5 252.4L1714.4 247.5"/>
  <path d="M1700.3 235.9L1706.2 231.5V248.2L1700.3 252Z" fill="#e2e2e2" stroke="none"/>
  <path d="M1699.2 236.2V252.4M1707.3 231.3V247.5"/>
</g>
<!-- floor plan -->
<g stroke-linecap="butt" stroke-linejoin="miter">
  <path d="M1692 295.8H1716V277.5" stroke="#d0d0d0" stroke-width="1.5"/>
  <path d="M1694 275.6H1713.8V293.8H1690.1V279.4Z" stroke-width="1.3"/>
  <path d="M1690.1 279.6H1694.2V275.6Z" fill="#e2e2e2" stroke="none"/>
  <path d="M1701.5 276V294" stroke-width="1" stroke-dasharray="3 1 1 1"/>
  <path d="M1690.5 284.4H1714" stroke-width="1" stroke-dasharray="3 1 1 1"/>
  <rect x="1708" y="291.2" width="6.4" height="3.2" fill="#e2e2e2" stroke="none"/>
</g>
<!-- target -->
<circle cx="1702.9" cy="330" r="7.2" stroke-width="2"/>
<circle cx="1702.9" cy="330" r="4" fill="#e2e2e2" stroke="none"/>
<path d="M1702.9 319.5V322M1702.9 338V340.5M1692.4 330H1695M1711 330H1713.4" stroke-width="1.8" stroke-linecap="butt"/>
<!-- flag -->
<circle cx="1703" cy="373.9" r="12.6" stroke-width="1"/>
<path d="M1697.4 380.6V367.8C1700 366.6 1702.2 366.8 1704 367.8C1706.2 369 1708.4 369 1710.6 368.2V376.2C1708.4 377 1706.2 377 1704 375.8C1702.2 374.8 1700 374.6 1697.4 375.4" stroke-width="1"/>
<!-- grid axes -->
<g stroke-width="0.9">
  <path d="M1688.3 426.5L1718 409.8M1688.3 436.6L1717.4 420.4M1689.1 421.5L1707.4 432.1M1697.4 415.4L1716.8 425.6"/>
</g>
<!-- dotted boxes -->
<g stroke-width="1.2" stroke-dasharray="1.6 1.6" stroke-linecap="butt">
  <rect x="1691.6" y="460.4" width="22.8" height="22.8"/>
  <rect x="1691.6" y="504.4" width="22.8" height="22.8"/>
  <rect x="1691.6" y="548.4" width="22.8" height="22.8"/>
  <path d="M1701 615.4H1691.6V592.6H1714.4V602"/>
</g>
<!-- small cube -->
<g stroke-width="0.9">
  <path d="M1702.9 465.2L1708.8 468.4V475.4L1702.9 478.8L1697 475.4V468.4Z"/>
  <path d="M1697 468.4L1702.9 471.8L1708.8 468.4"/>
  <path d="M1702.9 471.8V478.8" stroke-width="1.6" stroke="#ccc"/>
</g>
<!-- eye -->
<path d="M1695.4 516.3C1697.4 512.6 1700.2 511 1703.3 511C1706.4 511 1709.2 512.6 1711.2 516.3C1709.2 520 1706.4 521.6 1703.3 521.6C1700.2 521.6 1697.4 520 1695.4 516.3Z" fill="#e2e2e2" stroke="none"/>
<circle cx="1703.3" cy="516.3" r="2.6" stroke="#555" stroke-width="1.3"/>
<!-- eye off -->
<path d="M1695.4 560.3C1697.4 556.6 1700.2 555 1703.3 555C1706.4 555 1709.2 556.6 1711.2 560.3C1709.2 564 1706.4 565.6 1703.3 565.6C1700.2 565.6 1697.4 564 1695.4 560.3Z" fill="#e2e2e2" stroke="none"/>
<circle cx="1703.3" cy="560.3" r="2.6" stroke="#555" stroke-width="1.3"/>
<path d="M1696.6 553.4L1710.4 566.6" stroke="#555" stroke-width="2.2"/>
<path d="M1696 554.2L1709.6 567" stroke-width="1.1"/>
<!-- box x -->
<rect x="1701" y="601.8" width="16" height="16" fill="#e2e2e2" stroke="none"/>
<path d="M1704.6 605.6L1713.4 614.2M1713.4 605.6L1704.6 614.2" stroke="#333" stroke-width="1.1"/>
<!-- cube active -->
<g stroke-width="1.1">
  <path d="M1691.6 644.4L1701.6 641.7L1713.8 645.4L1703.5 648.7Z" fill="#666"/>
  <path d="M1691.6 644.4L1703.5 648.7L1703.1 665.3L1693.2 658.6Z" fill="#e2e2e2"/>
  <path d="M1703.5 648.7L1713.8 645.4L1712.8 657.6L1703.1 665.3Z" fill="#7c7c7c"/>
</g>
<!-- orbit -->
<ellipse cx="1703" cy="697" rx="11.6" ry="5.4" stroke-width="1.7"/>
<ellipse cx="1703" cy="697" rx="4.8" ry="10.8" stroke-width="1.7"/>
<path d="M1703 693V697.5L1700.4 700.4M1703 697.5L1705.6 700.4" stroke-width="0.7"/>
<!-- corner triangle -->
<path d="M1687 751V755.6H1691.4Z" fill="#f0f0f0" stroke="none"/>
</svg>
<div class="abs" style="left:1687.8px;top:413.6px;font-size:6.5px;line-height:7px;color:#e2e2e2">1</div>
<div class="abs" style="left:1697.8px;top:407.2px;font-size:6.5px;line-height:7px;color:#e2e2e2">2</div>

</body>
</html>
